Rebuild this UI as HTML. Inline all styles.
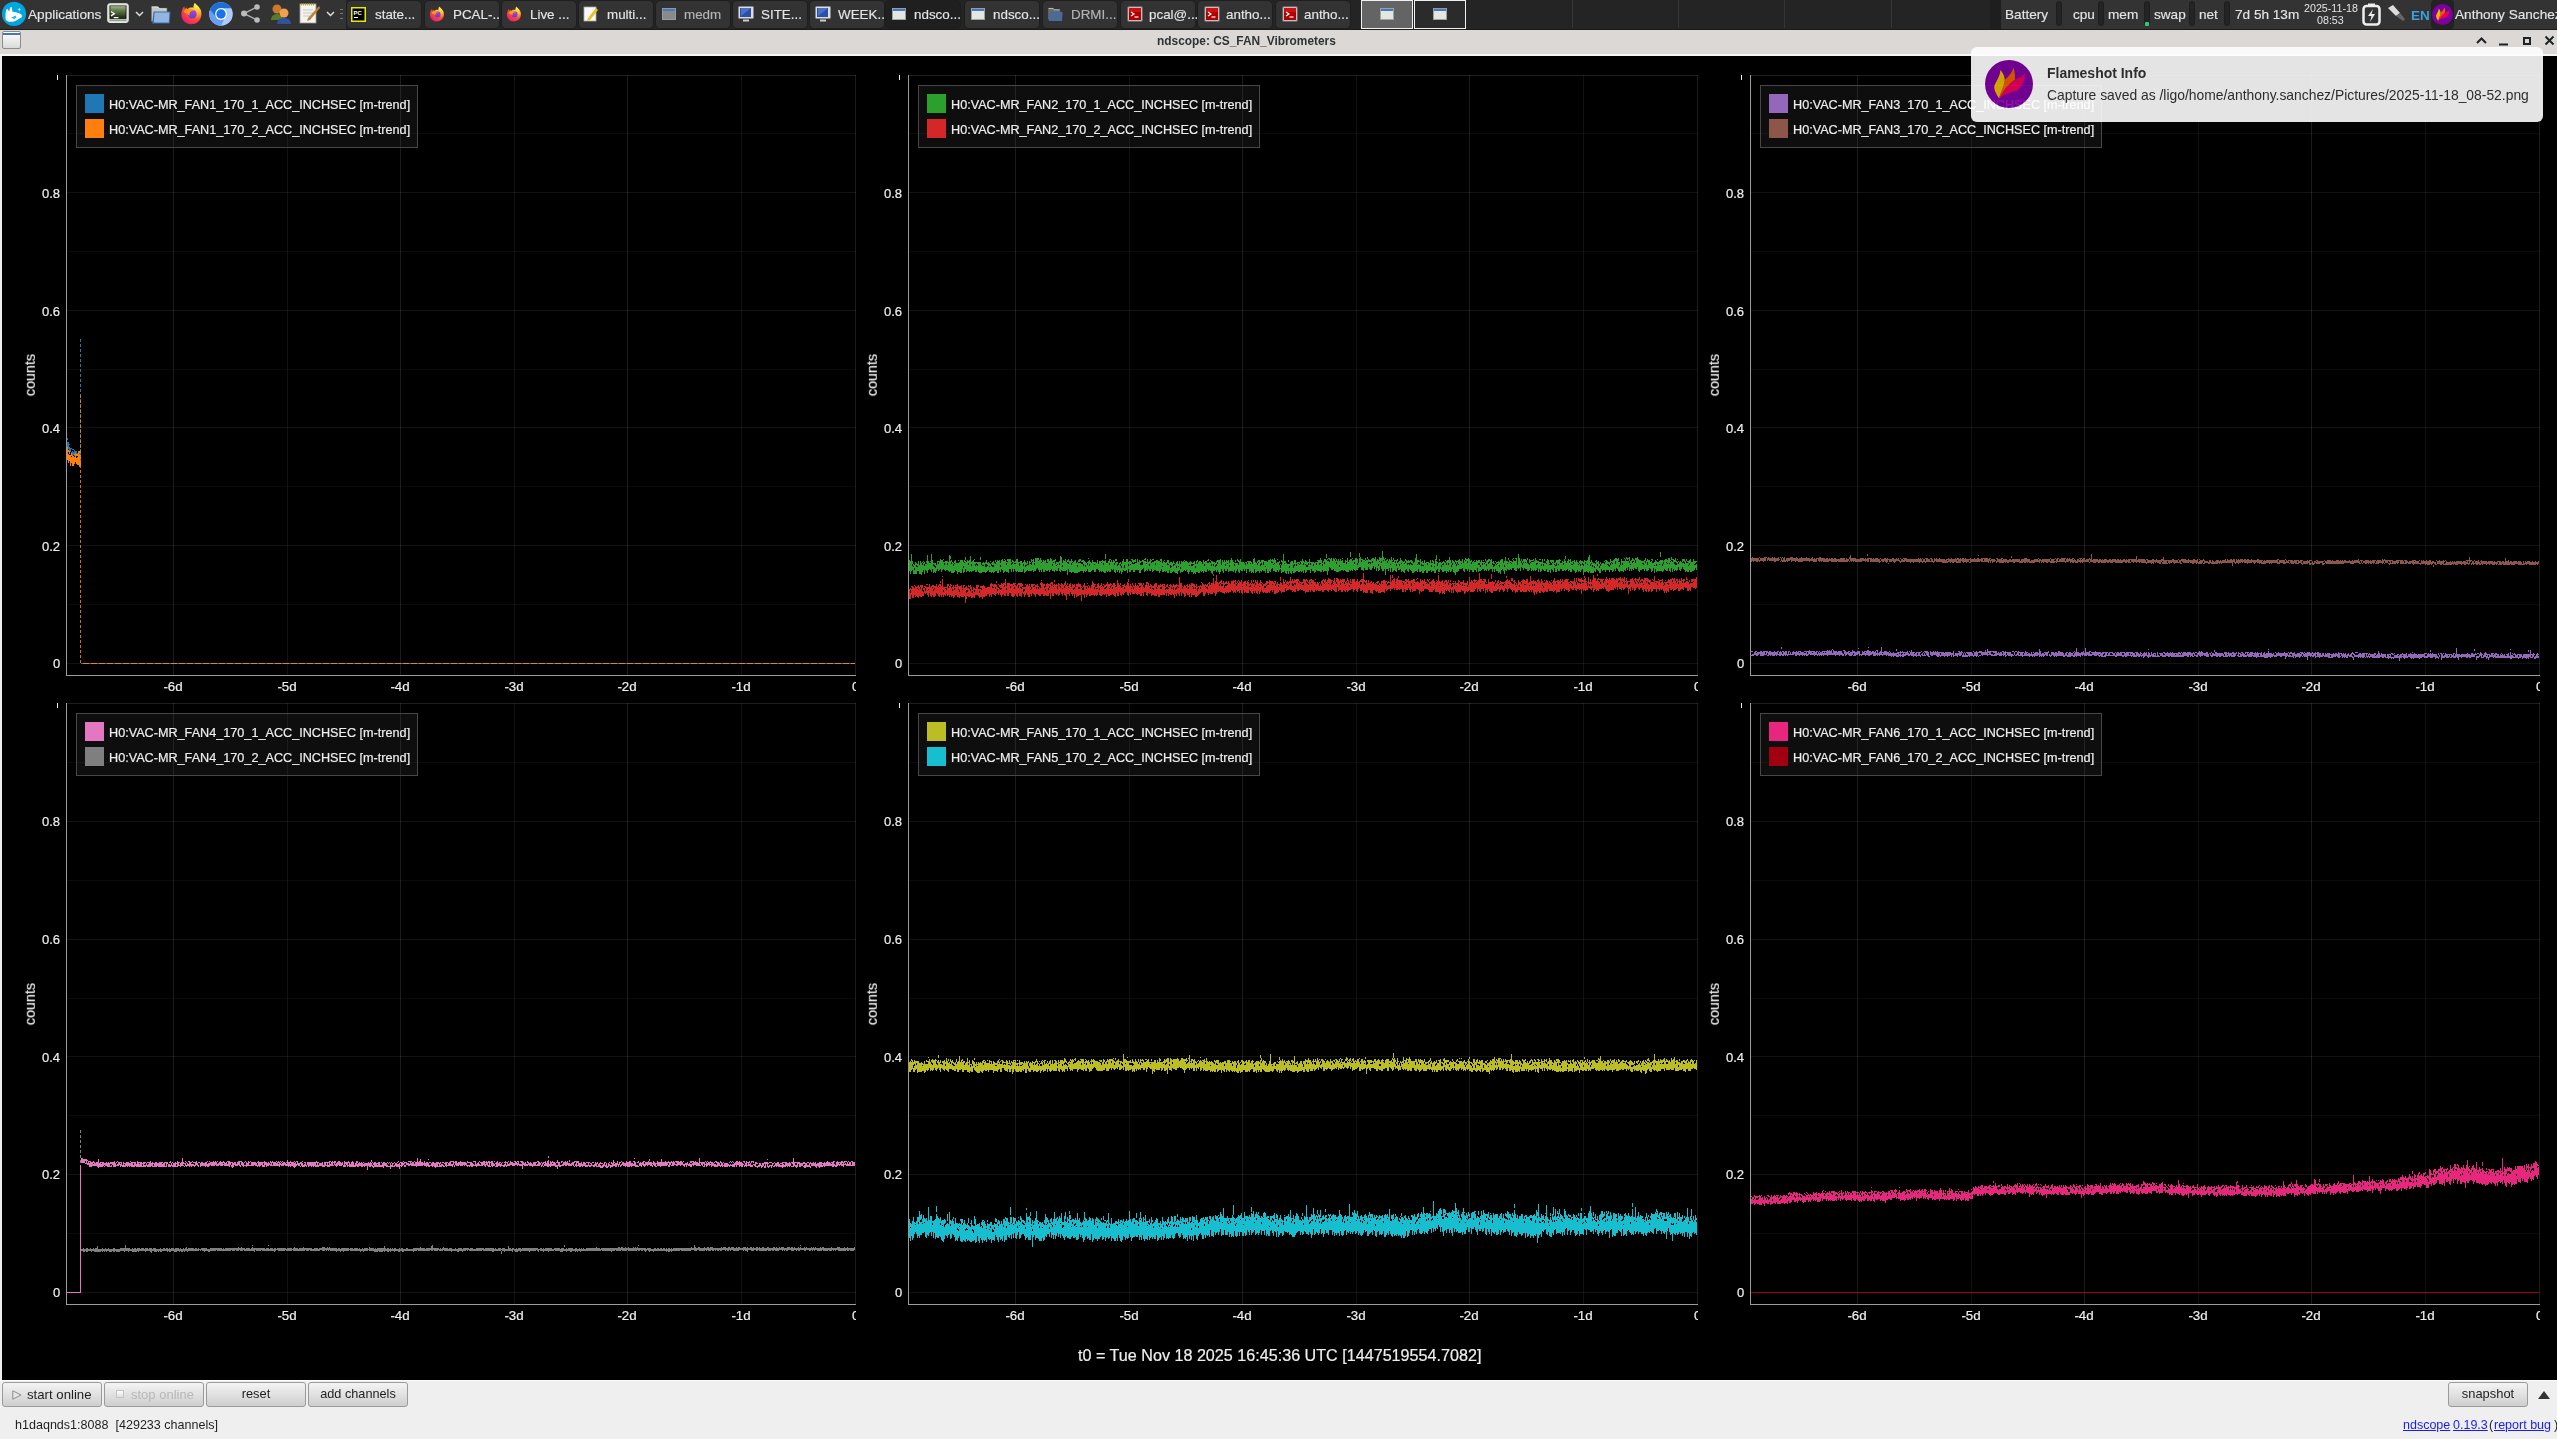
<!DOCTYPE html>
<html><head><meta charset="utf-8"><title>ndscope</title><style>
*{margin:0;padding:0;box-sizing:border-box}
html,body{width:2557px;height:1439px;overflow:hidden;background:#efefef;font-family:"Liberation Sans",sans-serif}
.a{position:absolute}
.t{position:absolute;white-space:pre;line-height:1;-webkit-font-smoothing:antialiased;will-change:transform}

.pnl{left:0;top:0;width:2557px;height:29px;background:#242424}
.tab{top:0;height:29px;width:76px;background:#333;border-radius:5px;border:1px solid #1e1e1e}
.tab.act{background:#1f1f1f}
.tabt{top:8px;color:#e4e4e4;font-size:13.4px;-webkit-text-stroke:0.15px currentColor}
.ttl{left:0;top:30px;width:2557px;height:24px;background:#dcd8d5}
.pt{top:8px;color:#e4e4e4;font-size:13.6px;-webkit-text-stroke:0.15px currentColor}
.sep{top:1px;width:6px;height:25px;border-radius:3px;background:#242424;border:1px solid #1e1e1e}

.btn{top:1382px;height:25px;border:1px solid #9a9a9a;border-radius:3px;background:linear-gradient(#f4f4f4,#cecece)}
.bt{top:1388px;font-size:12.6px;color:#1e1e1e}
.lnk{top:1419px;font-size:12.5px;color:#1a1aff;text-decoration:underline}

.pl{-webkit-text-stroke:0.2px #eeeeee}
.lg{font-size:12.65px;color:#eeeeee}
.yl{font-size:13px;color:#eeeeee;text-align:right}
.xl{font-size:13.3px;color:#eeeeee;text-align:center}
.cnt{font-size:14.3px;color:#eeeeee;transform:rotate(-90deg)}
</style></head>
<body>
<div class="a pnl"></div><div class="a" style="left:0;top:0;width:346px;height:29px;background:#333"></div><div class="a" style="left:0;top:29px;width:2557px;height:1px;background:#1a1a1a"></div><svg class="a" style="left:0;top:0" width="28" height="28" viewBox="0 0 28 28"><circle cx="14" cy="13.9" r="12.1" fill="#00a6df"/>
<path d="M5.5 17C5.5 14.5 5.8 12 6.1 9.4L7.7 9.1L9.2 11.8L10.1 7.4L11.8 7.1L12.4 11.8C15 12 19 12.8 21 14.3C22 15 22.3 16.2 21.5 17.5C19 19 16 20.5 14 21.5C11 22 7.5 22 6 20C5.5 19 5.3 18 5.5 17Z" fill="#fff"/>
<path d="M11.3 17.5L13.8 16.6L15.3 15.6L16.6 17L14.4 19.6Z" fill="#38b4e6"/>
<path d="M19.3 7.5L19.9 9L21.3 9.5L19.9 10L19.3 11.5L18.7 10L17.3 9.5L18.7 9Z" fill="#c8eefa"/></svg><div class="t pt" style="left:28px">Applications</div><svg class="a" style="left:107px;top:3px" width="22" height="20" viewBox="0 0 22 20"><defs><linearGradient id="tg" x1="0" y1="0" x2="0" y2="1"><stop offset="0" stop-color="#a8c498"/><stop offset="0.35" stop-color="#6a8a50"/><stop offset="1" stop-color="#1e2a14"/></linearGradient></defs>
<rect x="0.8" y="0.8" width="20.4" height="18.6" rx="1.8" fill="#d8d8d4" stroke="#f4f4f0" stroke-width="1"/><rect x="2.6" y="2.6" width="16.8" height="13.2" fill="#000"/><rect x="3.3" y="3.2" width="15.4" height="12" fill="url(#tg)"/>
<path d="M3.3 5h15.4M3.3 7h15.4M3.3 9h15.4M3.3 11h15.4M3.3 13h15.4" stroke="#000" stroke-opacity="0.25" stroke-width="0.6"/>
<path d="M4 8.5L7.3 10.7L4 12.9" stroke="#fff" stroke-width="1.3" fill="none"/><rect x="6.6" y="14" width="5" height="1.3" rx="0.6" fill="#fff"/>
<rect x="2.6" y="16.6" width="16.8" height="1.2" fill="#8a8a86"/><rect x="13.8" y="16.5" width="1.3" height="1.4" fill="#7de060"/></svg><svg class="a" style="left:135px;top:11px" width="9" height="6" viewBox="0 0 9 6"><path d="M1 1l3.5 3.5L8 1" stroke="#ddd" stroke-width="1.5" fill="none"/></svg><svg class="a" style="left:151px;top:5px" width="20" height="20" viewBox="0 0 20 18"><path d="M0.5 0.5h6.5l1.5 1.8h7.5v13h-15.5z" fill="#c4c4c4" stroke="#777" stroke-width="0.6"/><path d="M0.8 1h6l1.5 1.8h7" stroke="#eee" stroke-width="0.8" fill="none"/><path d="M2.5 5.5h17l-0.8 12h-17.5z" fill="#3b6cb4"/><path d="M3.6 6.6h14.8l-0.6 9.8h-15z" fill="#92b6e0"/></svg><svg class="a" style="left:180px;top:2px" width="23" height="23" viewBox="0 0 24 24">
<defs><radialGradient id="ffg0" cx="0.78" cy="0.12" r="1.05"><stop offset="0" stop-color="#fff44f"/><stop offset="0.35" stop-color="#ffb52a"/><stop offset="0.62" stop-color="#ff4a3a"/><stop offset="1" stop-color="#e2137f"/></radialGradient>
<linearGradient id="ffp0" x1="0.5" y1="0" x2="0.5" y2="1"><stop offset="0" stop-color="#c038e8"/><stop offset="1" stop-color="#5545c8"/></linearGradient></defs>
<path d="M15.5 0.8C17 3 19.5 4.5 21 7C23 10 23 16 20 19.5C17 23.5 10 24.5 5.5 21.5C1.5 18.5 0.5 13 2 9C2.5 7 3.5 5.5 4.5 4.5L5 7.5L6.5 5.5L7.5 7.5C9.5 5.5 12.5 5.5 14 6C14 4 14.5 2 15.5 0.8Z" fill="url(#ffg0)"/>
<circle cx="12.8" cy="12.6" r="4.6" fill="url(#ffp0)"/>
<path d="M3.5 10.5C5 8 8 7 11 7.5C13 7.8 14.5 8.5 15 9.5C13.5 9 12 9.3 11 10.2C10 11 9.5 12.5 10 14C8.5 13 6.5 12 3.5 10.5Z" fill="#ff9a0e"/>
</svg><svg class="a" style="left:209px;top:2px" width="24" height="24" viewBox="0 0 24 24"><defs><clipPath id="chc"><circle cx="12" cy="12" r="11.8"/></clipPath></defs>
<circle cx="12" cy="12" r="11.8" fill="#aecbfa"/><g clip-path="url(#chc)"><path d="M-1 3.5L7 15L15.2 17.2L11.5 25H-1z" fill="#669df6"/><path d="M12 6.2H25V-1H-1V5L7 15L12 12z" fill="#1a6fd8"/></g>
<circle cx="12" cy="12" r="5.9" fill="#fff"/><circle cx="12" cy="12" r="4.7" fill="#1a73e8"/></svg><svg class="a" style="left:240px;top:4px" width="22" height="19" viewBox="0 0 22 19"><path d="M4 9.5L17 3M4 9.5L17 16" stroke="#aaa" stroke-width="1.5"/><circle cx="4" cy="9.5" r="3" fill="#bbb"/><circle cx="17" cy="3" r="2.8" fill="#bbb"/><circle cx="17" cy="16" r="2.8" fill="#bbb"/></svg><svg class="a" style="left:270px;top:3px" width="22" height="22" viewBox="0 0 22 22"><circle cx="7" cy="6" r="4.5" fill="#c87a2a"/><path d="M1 17c0-4 3-6 6-6s6 2 6 6z" fill="#5a7a2a"/><circle cx="14" cy="10" r="4.5" fill="#f0a050"/><path d="M7 21c0-4 3-6 7-6s7 2 7 6z" fill="#3050a0"/></svg><svg class="a" style="left:299px;top:2px" width="22" height="22" viewBox="0 0 22 22"><rect x="1" y="2" width="16" height="19" fill="#f4f4f0" stroke="#999" stroke-width="0.8"/><path d="M2 2.5h14" stroke="#d4a020" stroke-width="2" stroke-dasharray="1 1"/><path d="M4 8h10M4 11h10M4 14h10" stroke="#bbb" stroke-width="0.8"/><path d="M20 4L9 16l-1 3 3-1L21 6z" fill="#c08030"/></svg><svg class="a" style="left:326px;top:11px" width="9" height="6" viewBox="0 0 9 6"><path d="M1 1l3.5 3.5L8 1" stroke="#ddd" stroke-width="1.5" fill="none"/></svg><div class="a" style="left:340px;top:9px;width:3px;height:10px;border-top:1px solid #777;border-bottom:1px solid #777"></div><div class="a" style="left:340px;top:13px;width:3px;height:1px;background:#777"></div><div class="a tab" style="left:346px"></div><div class="t tabt" style="left:375px;color:#e4e4e4">state...</div><svg class="a" style="left:351px;top:7px" width="15" height="15" viewBox="0 0 15 15"><rect x="0" y="0" width="15" height="15" fill="#e8e800"/><rect x="1.5" y="1.5" width="12" height="12" fill="#000"/><text x="2.5" y="7.5" font-size="6" font-weight="bold" fill="#fff" font-family="Liberation Sans">PC</text><rect x="3" y="10" width="4" height="1" fill="#fff"/></svg><div class="a tab" style="left:423.5px"></div><div class="t tabt" style="left:452.5px;color:#e4e4e4">PCAL-...</div><svg class="a" style="left:428.5px;top:6px" width="16" height="16" viewBox="0 0 24 24">
<defs><radialGradient id="ffg1" cx="0.78" cy="0.12" r="1.05"><stop offset="0" stop-color="#fff44f"/><stop offset="0.35" stop-color="#ffb52a"/><stop offset="0.62" stop-color="#ff4a3a"/><stop offset="1" stop-color="#e2137f"/></radialGradient>
<linearGradient id="ffp1" x1="0.5" y1="0" x2="0.5" y2="1"><stop offset="0" stop-color="#c038e8"/><stop offset="1" stop-color="#5545c8"/></linearGradient></defs>
<path d="M15.5 0.8C17 3 19.5 4.5 21 7C23 10 23 16 20 19.5C17 23.5 10 24.5 5.5 21.5C1.5 18.5 0.5 13 2 9C2.5 7 3.5 5.5 4.5 4.5L5 7.5L6.5 5.5L7.5 7.5C9.5 5.5 12.5 5.5 14 6C14 4 14.5 2 15.5 0.8Z" fill="url(#ffg1)"/>
<circle cx="12.8" cy="12.6" r="4.6" fill="url(#ffp1)"/>
<path d="M3.5 10.5C5 8 8 7 11 7.5C13 7.8 14.5 8.5 15 9.5C13.5 9 12 9.3 11 10.2C10 11 9.5 12.5 10 14C8.5 13 6.5 12 3.5 10.5Z" fill="#ff9a0e"/>
</svg><div class="a tab" style="left:500.5px"></div><div class="t tabt" style="left:529.5px;color:#e4e4e4">Live ...</div><svg class="a" style="left:505.5px;top:6px" width="16" height="16" viewBox="0 0 24 24">
<defs><radialGradient id="ffg2" cx="0.78" cy="0.12" r="1.05"><stop offset="0" stop-color="#fff44f"/><stop offset="0.35" stop-color="#ffb52a"/><stop offset="0.62" stop-color="#ff4a3a"/><stop offset="1" stop-color="#e2137f"/></radialGradient>
<linearGradient id="ffp2" x1="0.5" y1="0" x2="0.5" y2="1"><stop offset="0" stop-color="#c038e8"/><stop offset="1" stop-color="#5545c8"/></linearGradient></defs>
<path d="M15.5 0.8C17 3 19.5 4.5 21 7C23 10 23 16 20 19.5C17 23.5 10 24.5 5.5 21.5C1.5 18.5 0.5 13 2 9C2.5 7 3.5 5.5 4.5 4.5L5 7.5L6.5 5.5L7.5 7.5C9.5 5.5 12.5 5.5 14 6C14 4 14.5 2 15.5 0.8Z" fill="url(#ffg2)"/>
<circle cx="12.8" cy="12.6" r="4.6" fill="url(#ffp2)"/>
<path d="M3.5 10.5C5 8 8 7 11 7.5C13 7.8 14.5 8.5 15 9.5C13.5 9 12 9.3 11 10.2C10 11 9.5 12.5 10 14C8.5 13 6.5 12 3.5 10.5Z" fill="#ff9a0e"/>
</svg><div class="a tab" style="left:577.5px"></div><div class="t tabt" style="left:606.5px;color:#e4e4e4">multi...</div><svg class="a" style="left:582.5px;top:6px" width="15" height="16" viewBox="0 0 15 16"><rect x="1" y="1" width="12" height="14" fill="#f8f8f8" stroke="#aaa" stroke-width="0.8"/><path d="M13 2L5 12l-1 3 3-1 8-10z" fill="#e8c020"/></svg><div class="a tab" style="left:655px"></div><div class="t tabt" style="left:684px;color:#b4b4b4">medm</div><svg class="a" style="left:662px;top:8px" width="14" height="12" viewBox="0 0 16 14"><rect x="0.5" y="0.5" width="15" height="13" fill="#8a8a8a" stroke="#9aa" stroke-width="1"/><rect x="1" y="1" width="14" height="2.5" fill="#4a78c0"/></svg><div class="a tab" style="left:731.5px"></div><div class="t tabt" style="left:760.5px;color:#e4e4e4">SITE...</div><svg class="a" style="left:737.5px;top:6px" width="16" height="16" viewBox="0 0 16 16"><rect x="0.5" y="0.5" width="15" height="12" rx="1" fill="#ddd" stroke="#888"/><rect x="2" y="2" width="11" height="9" fill="#2c4fa8"/><path d="M3 10L12 3V2H3z" fill="#4c6fc8"/><rect x="5" y="13.5" width="6" height="2" fill="#ccc"/></svg><div class="a tab" style="left:808.5px"></div><div class="t tabt" style="left:837.5px;color:#e4e4e4">WEEK...</div><svg class="a" style="left:814.5px;top:6px" width="16" height="16" viewBox="0 0 16 16"><rect x="0.5" y="0.5" width="15" height="12" rx="1" fill="#ddd" stroke="#888"/><rect x="2" y="2" width="11" height="9" fill="#2c4fa8"/><path d="M3 10L12 3V2H3z" fill="#4c6fc8"/><rect x="5" y="13.5" width="6" height="2" fill="#ccc"/></svg><div class="a tab act" style="left:885px"></div><div class="t tabt" style="left:914px;color:#e4e4e4">ndsco...</div><svg class="a" style="left:892px;top:8px" width="14" height="12" viewBox="0 0 16 14"><rect x="0.5" y="0.5" width="15" height="13" fill="#e6e6e0" stroke="#9aa" stroke-width="1"/><rect x="1" y="1" width="14" height="2.5" fill="#4a78c0"/></svg><div class="a tab" style="left:963.5px"></div><div class="t tabt" style="left:992.5px;color:#e4e4e4">ndsco...</div><svg class="a" style="left:970.5px;top:8px" width="14" height="12" viewBox="0 0 16 14"><rect x="0.5" y="0.5" width="15" height="13" fill="#e6e6e0" stroke="#9aa" stroke-width="1"/><rect x="1" y="1" width="14" height="2.5" fill="#4a78c0"/></svg><div class="a tab" style="left:1041.5px"></div><div class="t tabt" style="left:1070.5px;color:#b4b4b4">DRMI...</div><svg class="a" style="left:1047.5px;top:7px" width="15" height="15" viewBox="0 0 20 18"><path d="M0.5 0.5h6.5l1.5 1.8h7.5v13h-15.5z" fill="#6a6a6a" stroke="#777" stroke-width="0.6"/><path d="M0.8 1h6l1.5 1.8h7" stroke="#eee" stroke-width="0.8" fill="none"/><path d="M2.5 5.5h17l-0.8 12h-17.5z" fill="#3b6cb4"/><path d="M3.6 6.6h14.8l-0.6 9.8h-15z" fill="#4f6a90"/></svg><div class="a tab" style="left:1119.5px"></div><div class="t tabt" style="left:1148.5px;color:#e4e4e4">pcal@...</div><svg class="a" style="left:1126.5px;top:6px" width="16" height="16" viewBox="0 0 16 16"><rect x="0.5" y="0.5" width="15" height="15" rx="1.5" fill="#c0c0c0" stroke="#666"/><rect x="2" y="2" width="12" height="12" fill="#b00000"/><rect x="2" y="2" width="12" height="4" fill="#d01010"/><path d="M4 6l3 2-3 2" stroke="#fff" stroke-width="1.2" fill="none"/><path d="M7.5 11h4" stroke="#fff" stroke-width="1.2"/></svg><div class="a tab" style="left:1197px"></div><div class="t tabt" style="left:1226px;color:#e4e4e4">antho...</div><svg class="a" style="left:1204px;top:6px" width="16" height="16" viewBox="0 0 16 16"><rect x="0.5" y="0.5" width="15" height="15" rx="1.5" fill="#c0c0c0" stroke="#666"/><rect x="2" y="2" width="12" height="12" fill="#b00000"/><rect x="2" y="2" width="12" height="4" fill="#d01010"/><path d="M4 6l3 2-3 2" stroke="#fff" stroke-width="1.2" fill="none"/><path d="M7.5 11h4" stroke="#fff" stroke-width="1.2"/></svg><div class="a tab" style="left:1275px"></div><div class="t tabt" style="left:1304px;color:#e4e4e4">antho...</div><svg class="a" style="left:1282px;top:6px" width="16" height="16" viewBox="0 0 16 16"><rect x="0.5" y="0.5" width="15" height="15" rx="1.5" fill="#c0c0c0" stroke="#666"/><rect x="2" y="2" width="12" height="12" fill="#b00000"/><rect x="2" y="2" width="12" height="4" fill="#d01010"/><path d="M4 6l3 2-3 2" stroke="#fff" stroke-width="1.2" fill="none"/><path d="M7.5 11h4" stroke="#fff" stroke-width="1.2"/></svg><div class="a" style="left:1361px;top:0;width:52px;height:29px;background:#646464;border:1px solid #f0f0f0"></div><div class="a" style="left:1414px;top:0;width:52px;height:29px;background:#2b2b2b;border:1px solid #f0f0f0"></div><svg class="a" style="left:1380px;top:8px" width="14" height="12" viewBox="0 0 16 14"><rect x="0.5" y="0.5" width="15" height="13" fill="#e6e6e0" stroke="#9aa" stroke-width="1"/><rect x="1" y="1" width="14" height="2.5" fill="#4a78c0"/></svg><svg class="a" style="left:1433px;top:8px" width="14" height="12" viewBox="0 0 16 14"><rect x="0.5" y="0.5" width="15" height="13" fill="#e6e6e0" stroke="#9aa" stroke-width="1"/><rect x="1" y="1" width="14" height="2.5" fill="#4a78c0"/></svg><div class="a" style="left:1572px;top:0;width:1px;height:28px;background:#353535"></div><div class="a" style="left:1678px;top:0;width:1px;height:28px;background:#353535"></div><div class="a" style="left:1784px;top:0;width:1px;height:28px;background:#353535"></div><div class="a" style="left:1891px;top:0;width:1px;height:28px;background:#353535"></div><div class="a" style="left:1990px;top:0;width:11px;height:29px;background:#1e1e1e"></div><div class="a" style="left:2001px;top:0;width:556px;height:29px;background:#333"></div><div class="t pt" style="left:2005px">Battery</div><div class="t pt" style="left:2072.5px">cpu</div><div class="t pt" style="left:2108px">mem</div><div class="t pt" style="left:2154px">swap</div><div class="t pt" style="left:2199px">net</div><div class="t pt" style="left:2234.5px">7d 5h 13m</div><div class="a sep" style="left:2056px"></div><div class="a sep" style="left:2097.5px"></div><div class="a sep" style="left:2143.5px"></div><div class="a sep" style="left:2188.5px"></div><div class="a sep" style="left:2223.5px"></div><div class="a" style="left:2144.5px;top:22px;width:4px;height:4px;border-radius:1px;background:#2ecc71"></div><div class="t" style="left:2304px;top:3px;font-size:10.7px;color:#e4e4e4">2025-11-18</div><div class="t" style="left:2317px;top:15px;font-size:10.7px;color:#e4e4e4">08:53</div><svg class="a" style="left:2362px;top:3px" width="19" height="23" viewBox="0 0 19 23"><rect x="6" y="0.5" width="7" height="3" fill="#eee"/><rect x="1.5" y="3" width="16" height="18.5" rx="3" fill="none" stroke="#eee" stroke-width="2.5"/><path d="M11 6l-5 7h3.5l-1.5 6 5-8H9.5z" fill="#eee"/></svg><svg class="a" style="left:2386px;top:4px" width="20" height="18" viewBox="0 0 20 18"><path d="M2 4l5-3 7 8-4 3z" fill="#ddd"/><path d="M10 12l4-3 5 6-2 2z" fill="#666"/></svg><div class="t" style="left:2411px;top:8.5px;font-size:13.5px;font-weight:bold;color:#3aa0e0">EN</div><div class="a" style="left:2431px;top:0;width:23px;height:29px;border-radius:4px;background:#222"></div><svg class="a" style="left:2432px;top:4px" width="21" height="21" viewBox="0 0 48 48"><circle cx="24" cy="24" r="24" fill="#7d00a0"/>
<path d="M14.2 38.5C11 34 8.5 29 9.5 25.5C11 21.5 15 17 15.4 10.1C18 13 20 17 19.8 21C19.5 26 16 32 14.2 38.5Z" fill="#e6b800"/>
<path d="M14.2 38.5C15.5 31 19.5 25 20 19.5C24 16 27.5 12 28.4 7.4C30 12 30.5 17 29.8 21.5C27 27 20 31 14.2 38.5Z" fill="#e85d00"/>
<path d="M14.2 38.5C17 32 23 24 30 19.5C34 18 38 16.5 39.7 13.6C40 20 37 27.5 32 30.4C26 33 19 33 14.2 38.5Z" fill="#e8005a"/></svg><div class="t pt" style="left:2455px">Anthony Sanchez</div><div class="a ttl"></div><div class="a" style="left:0;top:54px;width:2557px;height:2px;background:#f6f6f6"></div><div class="a" style="left:1.5px;top:31px;width:19px;height:17.5px;border-radius:2px;border:1px solid #8c8c8c;background:linear-gradient(#fff,#d8dcd8)"></div><div class="a" style="left:2.5px;top:33px;width:17px;height:2px;background:#4a74b8"></div><div class="t" style="left:1157px;top:36px;font-size:11.9px;font-weight:bold;color:#2e3436">ndscope: CS_FAN_Vibrometers</div><svg class="a" style="left:2474px;top:35px" width="84" height="12" viewBox="0 0 84 12"><path d="M3 8l4.5-4.5L12 8" stroke="#1d2325" stroke-width="2" fill="none"/><path d="M25 9.5h9" stroke="#1d2325" stroke-width="2"/><rect x="50" y="3" width="6" height="6" fill="none" stroke="#1d2325" stroke-width="2"/><path d="M71.5 1.5l8 8M79.5 1.5l-8 8" stroke="#1d2325" stroke-width="2"/></svg><svg class="a" style="left:0;top:0" width="2557" height="1439" viewBox="0 0 2557 1439" shape-rendering="crispEdges"><rect x="2" y="56" width="2555" height="1324" fill="#000"/><path d="M67 604.5H856M67 486.5H856M67 369.5H856M67 251.5H856M67 133.5H856" stroke="#0b0b0b" stroke-width="1" fill="none"/><path d="M67 663.5H856M67 545.5H856M67 427.5H856M67 310.5H856M67 192.5H856" stroke="#121212" stroke-width="1" fill="none"/><path d="M67 75.5H856" stroke="#1e1e1e" stroke-width="1" fill="none"/><path d="M173.5 75V675M400.5 75V675M627.5 75V675M855.5 75V675" stroke="#fff" stroke-opacity="0.11" stroke-width="1" fill="none"/><path d="M287.5 75V675M514.5 75V675M741.5 75V675" stroke="#fff" stroke-opacity="0.065" stroke-width="1" fill="none"/><path d="M909 604.5H1698M909 486.5H1698M909 369.5H1698M909 251.5H1698M909 133.5H1698" stroke="#0b0b0b" stroke-width="1" fill="none"/><path d="M909 663.5H1698M909 545.5H1698M909 427.5H1698M909 310.5H1698M909 192.5H1698" stroke="#121212" stroke-width="1" fill="none"/><path d="M909 75.5H1698" stroke="#1e1e1e" stroke-width="1" fill="none"/><path d="M1015.5 75V675M1242.5 75V675M1469.5 75V675M1697.5 75V675" stroke="#fff" stroke-opacity="0.11" stroke-width="1" fill="none"/><path d="M1129.5 75V675M1356.5 75V675M1583.5 75V675" stroke="#fff" stroke-opacity="0.065" stroke-width="1" fill="none"/><path d="M1751 604.5H2540M1751 486.5H2540M1751 369.5H2540M1751 251.5H2540M1751 133.5H2540" stroke="#0b0b0b" stroke-width="1" fill="none"/><path d="M1751 663.5H2540M1751 545.5H2540M1751 427.5H2540M1751 310.5H2540M1751 192.5H2540" stroke="#121212" stroke-width="1" fill="none"/><path d="M1751 75.5H2540" stroke="#1e1e1e" stroke-width="1" fill="none"/><path d="M1857.5 75V675M2084.5 75V675M2311.5 75V675M2539.5 75V675" stroke="#fff" stroke-opacity="0.11" stroke-width="1" fill="none"/><path d="M1971.5 75V675M2198.5 75V675M2425.5 75V675" stroke="#fff" stroke-opacity="0.065" stroke-width="1" fill="none"/><path d="M67 1233.5H856M67 1115.5H856M67 998.5H856M67 880.5H856M67 762.5H856" stroke="#0b0b0b" stroke-width="1" fill="none"/><path d="M67 1292.5H856M67 1174.5H856M67 1056.5H856M67 939.5H856M67 821.5H856" stroke="#121212" stroke-width="1" fill="none"/><path d="M67 703.5H856" stroke="#1e1e1e" stroke-width="1" fill="none"/><path d="M173.5 703V1304M400.5 703V1304M627.5 703V1304M855.5 703V1304" stroke="#fff" stroke-opacity="0.11" stroke-width="1" fill="none"/><path d="M287.5 703V1304M514.5 703V1304M741.5 703V1304" stroke="#fff" stroke-opacity="0.065" stroke-width="1" fill="none"/><path d="M909 1233.5H1698M909 1115.5H1698M909 998.5H1698M909 880.5H1698M909 762.5H1698" stroke="#0b0b0b" stroke-width="1" fill="none"/><path d="M909 1292.5H1698M909 1174.5H1698M909 1056.5H1698M909 939.5H1698M909 821.5H1698" stroke="#121212" stroke-width="1" fill="none"/><path d="M909 703.5H1698" stroke="#1e1e1e" stroke-width="1" fill="none"/><path d="M1015.5 703V1304M1242.5 703V1304M1469.5 703V1304M1697.5 703V1304" stroke="#fff" stroke-opacity="0.11" stroke-width="1" fill="none"/><path d="M1129.5 703V1304M1356.5 703V1304M1583.5 703V1304" stroke="#fff" stroke-opacity="0.065" stroke-width="1" fill="none"/><path d="M1751 1233.5H2540M1751 1115.5H2540M1751 998.5H2540M1751 880.5H2540M1751 762.5H2540" stroke="#0b0b0b" stroke-width="1" fill="none"/><path d="M1751 1292.5H2540M1751 1174.5H2540M1751 1056.5H2540M1751 939.5H2540M1751 821.5H2540" stroke="#121212" stroke-width="1" fill="none"/><path d="M1751 703.5H2540" stroke="#1e1e1e" stroke-width="1" fill="none"/><path d="M1857.5 703V1304M2084.5 703V1304M2311.5 703V1304M2539.5 703V1304" stroke="#fff" stroke-opacity="0.11" stroke-width="1" fill="none"/><path d="M1971.5 703V1304M2198.5 703V1304M2425.5 703V1304" stroke="#fff" stroke-opacity="0.065" stroke-width="1" fill="none"/><path d="M67 437.9V440.0M67 442.0V448.1M68 441.5V448.9M69 444.2V444.7M69 446.5V453.4M70 448.4V452.3M71 448.2V449.1M71 451.6V454.4M72 448.9V449.9M72 451.0V456.2M73 449.3V449.9M73 452.3V455.2M74 449.9V456.1M75 451.0V454.9M76 450.5V454.2M77 450.6V451.4M77 452.8V455.3M78 450.5V455.6M79 449.6V450.3M79 452.4V455.0M80 450.7V454.5" stroke="#1f77b4" stroke-width="1" fill="none" opacity="1"/><path d="M67 447.1V459.7M68 449.9V452.3M68 453.5V463.1M69 450.5V453.8M69 454.8V461.4M70 455.2V466.4M71 453.3V455.8M71 456.9V463.1M72 454.7V466.3M73 455.6V465.8M74 453.7V455.0M74 456.5V464.4M75 452.6V461.8M76 454.1V456.3M76 457.6V464.4M77 453.9V455.5M77 457.2V465.4M78 451.1V464.8M79 450.6V452.6M79 453.6V466.6M80 455.9V465.7" stroke="#ff7f0e" stroke-width="1" fill="none" opacity="1"/><path d="M80.5 339V462" stroke="#1f77b4" stroke-width="1" stroke-dasharray="3 2"/><path d="M80.5 663.5H855" stroke="#ff7f0e" stroke-width="1" fill="none"/><path d="M80.5 395V663" stroke="#ff7f0e" stroke-width="1" fill="none" stroke-dasharray="3 2" opacity="0.85"/><path d="M80.5 663.5H855" stroke="#1f77b4" stroke-width="1" fill="none" stroke-dasharray="2 6"/><path d="M909 560.4V571.4M910 561.2V573.7M911 554.4V571.0M912 561.3V564.2M912 565.8V569.9M913 563.7V565.7M913 567.0V574.0M914 564.7V567.9M914 570.2V574.1M915 561.9V573.6M916 563.1V565.0M916 566.6V573.7M917 564.4V565.6M917 567.4V570.5M918 561.0V571.2M919 562.5V563.4M919 564.5V573.9M920 560.8V573.5M921 562.8V574.6M922 562.0V562.7M922 564.9V571.9M923 560.7V561.7M923 562.8V570.2M924 562.3V563.7M924 566.1V573.5M925 563.6V570.4M926 560.7V562.9M926 564.3V571.3M927 555.4V573.1M928 560.7V570.4M929 563.0V569.1M930 560.5V561.6M930 562.9V569.9M931 554.4V571.9M932 560.3V569.2M933 562.6V564.0M933 566.4V572.8M934 562.7V564.9M934 566.7V572.4M935 562.5V565.6M935 568.1V573.0M936 561.6V562.3M936 564.5V570.8M937 560.6V569.0M938 561.2V562.4M938 564.4V570.8M939 561.1V570.3M940 558.9V569.0M941 560.4V572.3M942 559.9V570.0M943 559.2V560.1M943 561.9V568.7M944 562.3V562.9M944 565.4V570.0M945 560.9V571.3M946 560.9V569.6M947 561.2V563.3M947 564.7V570.3M948 562.1V570.6M949 555.3V572.3M950 555.8V558.5M950 560.9V570.5M951 559.9V562.1M951 563.9V572.7M952 562.3V572.7M953 563.4V564.1M953 566.3V573.3M954 561.0V562.5M954 564.0V572.4M955 559.9V569.7M956 562.6V571.1M957 563.3V573.5M958 560.4V561.1M958 562.7V571.9M959 562.4V572.2M960 559.7V572.8M961 559.6V573.2M962 559.8V568.8M963 562.4V566.1M963 567.9V572.9M964 559.5V561.6M964 562.9V571.9M965 557.1V560.0M965 561.3V568.8M966 561.8V572.0M967 560.4V571.2M968 561.4V563.3M968 565.0V570.5M969 560.4V572.4M970 555.8V570.9M971 562.2V563.8M971 566.1V572.4M972 561.0V571.3M973 559.9V570.8M974 558.8V560.3M974 562.3V569.5M975 561.6V563.7M975 565.7V571.8M976 562.2V563.3M976 564.5V572.2M977 561.7V563.9M977 565.8V570.1M978 561.7V572.0M979 561.9V572.7M980 556.8V560.4M980 562.3V572.6M981 562.8V563.4M981 564.7V572.9M982 563.0V565.0M982 566.1V572.4M983 562.3V564.6M983 565.7V572.2M984 562.5V572.0M985 562.2V564.4M985 566.7V573.4M986 560.4V564.4M986 566.6V572.2M987 562.8V565.2M987 566.3V571.1M988 561.8V569.5M989 562.9V565.8M989 567.4V572.2M990 560.5V561.8M990 563.5V572.2M991 562.5V563.7M991 566.0V573.1M992 562.0V564.8M992 566.6V572.4M993 560.8V564.6M993 566.9V572.8M994 562.9V572.4M995 559.6V561.5M995 563.5V571.1M996 562.1V570.7M997 559.9V572.9M998 560.7V572.9M999 560.4V569.5M1000 563.1V564.7M1000 566.8V571.8M1001 559.8V569.3M1002 559.0V570.2M1003 561.4V572.8M1004 558.8V560.3M1004 561.3V572.2M1005 560.4V571.4M1006 562.1V563.3M1006 564.6V572.0M1007 558.9V560.7M1007 562.4V571.6M1008 559.2V572.7M1009 559.1V569.2M1010 558.8V568.8M1011 562.2V563.1M1011 565.1V572.0M1012 560.2V562.2M1012 563.7V569.1M1013 560.7V571.9M1014 561.6V562.6M1014 564.0V568.8M1015 561.3V562.8M1015 564.2V570.8M1016 559.2V571.5M1017 559.4V571.0M1018 561.7V571.8M1019 562.0V563.3M1019 565.6V572.4M1020 560.6V572.2M1021 560.5V571.8M1022 562.7V571.7M1023 561.7V563.6M1023 566.1V569.4M1024 560.3V572.8M1025 562.4V564.7M1025 567.2V571.8M1026 562.8V565.1M1026 566.3V570.8M1027 560.6V563.5M1027 565.4V569.8M1028 562.5V563.4M1028 564.7V571.1M1029 560.9V570.8M1030 561.8V562.6M1030 564.2V571.1M1031 559.2V562.4M1031 564.9V570.7M1032 560.0V560.7M1032 562.3V569.5M1033 558.9V571.7M1034 561.7V562.9M1034 565.1V571.1M1035 557.6V570.7M1036 558.0V568.5M1037 557.8V568.0M1038 558.2V559.6M1038 561.0V570.1M1039 559.6V571.8M1040 558.1V570.3M1041 560.4V561.8M1041 563.2V572.2M1042 561.7V569.4M1043 559.8V572.1M1044 560.9V572.1M1045 560.4V569.8M1046 562.7V570.9M1047 559.3V562.2M1047 563.3V571.4M1048 559.1V569.7M1049 561.1V571.8M1050 558.4V569.6M1051 558.9V569.4M1052 561.4V563.8M1052 565.8V571.4M1053 560.3V561.6M1053 562.7V570.8M1054 559.8V571.5M1055 559.3V561.2M1055 563.6V570.3M1056 562.0V564.8M1056 566.3V571.2M1057 561.6V563.9M1057 565.4V571.2M1058 562.0V568.3M1059 560.8V563.4M1059 564.6V571.3M1060 555.6V571.5M1061 557.1V570.4M1062 563.0V565.0M1062 566.6V570.7M1063 559.6V571.3M1064 560.5V571.4M1065 559.3V571.3M1066 562.2V570.2M1067 559.6V561.8M1067 563.0V575.2M1068 559.1V561.7M1068 564.0V569.1M1069 560.8V571.7M1070 560.6V571.5M1071 559.4V563.3M1071 564.7V572.9M1072 560.6V561.8M1072 563.3V572.1M1073 561.8V571.5M1074 561.2V573.2M1075 560.3V572.5M1076 562.8V572.7M1077 561.7V565.2M1077 567.3V572.9M1078 560.2V562.1M1078 563.4V572.4M1079 559.3V562.0M1079 563.2V571.7M1080 559.0V560.5M1080 562.8V570.6M1081 560.5V562.0M1081 563.7V571.3M1082 560.0V562.4M1082 563.7V571.2M1083 560.1V564.3M1083 565.9V572.5M1084 561.0V570.8M1085 561.7V565.2M1085 566.7V571.6M1086 562.9V570.9M1087 561.8V563.0M1087 565.0V569.4M1088 558.2V559.0M1088 561.2V571.8M1089 559.9V563.8M1089 566.0V572.0M1090 561.8V572.3M1091 562.8V571.1M1092 560.3V570.0M1093 559.5V560.0M1093 562.3V569.5M1094 562.1V563.5M1094 565.3V571.5M1095 561.6V572.4M1096 563.3V568.6M1097 560.3V569.1M1098 560.5V561.4M1098 563.9V570.0M1099 561.0V571.6M1100 561.3V571.1M1101 560.5V561.8M1101 562.9V571.5M1102 559.6V570.6M1103 560.7V563.4M1103 564.7V572.0M1104 560.5V572.9M1105 554.3V558.5M1105 559.8V572.7M1106 562.5V571.2M1107 563.4V572.3M1108 561.4V570.5M1109 559.3V563.0M1109 564.8V571.8M1110 559.1V560.1M1110 561.6V572.3M1111 559.5V569.3M1112 561.8V570.3M1113 559.6V568.8M1114 560.9V562.9M1114 565.1V571.7M1115 559.4V560.5M1115 562.8V572.6M1116 559.4V560.7M1116 562.1V570.1M1117 562.3V564.0M1117 566.4V572.1M1118 562.8V563.2M1118 565.0V569.5M1119 562.9V572.7M1120 562.1V563.9M1120 566.4V570.8M1121 563.5V565.8M1121 568.1V574.2M1122 560.7V571.9M1123 558.9V570.1M1124 562.0V565.3M1124 567.7V571.4M1125 562.3V571.3M1126 558.6V569.7M1127 558.7V572.5M1128 562.3V564.4M1128 565.6V569.0M1129 561.3V571.7M1130 560.7V563.9M1130 565.2V572.4M1131 558.7V559.8M1131 561.8V569.5M1132 558.9V562.4M1132 563.9V570.3M1133 560.3V562.5M1133 563.7V571.8M1134 560.0V562.2M1134 564.0V571.9M1135 559.1V561.5M1135 563.4V569.8M1136 563.0V569.7M1137 559.0V570.4M1138 562.3V570.3M1139 559.9V572.5M1140 560.7V563.4M1140 565.4V573.0M1141 560.5V562.2M1141 564.5V569.8M1142 559.9V562.3M1142 564.5V569.0M1143 559.5V567.6M1144 558.5V559.8M1144 560.9V571.5M1145 558.4V559.7M1145 561.3V571.4M1146 561.9V562.5M1146 564.2V569.5M1147 559.1V571.2M1148 562.0V568.7M1149 561.0V563.6M1149 565.8V570.9M1150 559.4V570.6M1151 559.6V560.9M1151 563.0V569.0M1152 558.6V559.8M1152 561.7V572.4M1153 559.0V559.9M1153 561.9V570.9M1154 561.4V569.8M1155 561.0V562.5M1155 564.6V570.3M1156 560.4V571.0M1157 559.6V571.3M1158 561.1V571.1M1159 560.9V573.3M1160 559.3V560.7M1160 562.2V571.4M1161 558.9V569.1M1162 562.5V565.5M1162 566.6V571.8M1163 560.9V572.0M1164 560.2V561.0M1164 562.4V570.7M1165 563.3V571.7M1166 562.4V571.4M1167 559.9V563.4M1167 564.9V572.5M1168 560.4V563.5M1168 565.2V572.8M1169 563.2V570.2M1170 562.1V565.3M1170 567.5V572.6M1171 561.9V565.5M1171 566.8V572.9M1172 563.3V571.6M1173 560.7V563.9M1173 566.4V570.8M1174 562.7V563.5M1174 564.7V572.4M1175 563.7V573.0M1176 562.1V565.6M1176 567.6V573.4M1177 561.4V573.9M1178 563.6V565.8M1178 567.2V571.0M1179 560.8V570.4M1180 564.1V566.8M1180 568.9V572.9M1181 560.9V572.1M1182 561.5V571.8M1183 561.1V570.5M1184 559.8V560.6M1184 562.3V569.7M1185 561.3V570.6M1186 560.9V569.8M1187 562.4V571.8M1188 563.4V573.5M1189 561.8V564.7M1189 565.9V571.8M1190 560.8V570.4M1191 561.5V564.2M1191 565.6V572.1M1192 562.7V563.5M1192 565.7V572.0M1193 561.9V563.8M1193 565.1V573.7M1194 560.7V573.4M1195 563.9V566.4M1195 568.0V573.8M1196 560.9V572.4M1197 560.0V562.1M1197 563.5V571.5M1198 562.0V573.4M1199 561.0V572.7M1200 560.5V570.7M1201 562.4V572.2M1202 564.3V571.0M1203 560.2V573.1M1204 562.2V564.0M1204 566.4V570.9M1205 560.7V571.5M1206 560.8V572.1M1207 559.6V561.1M1207 563.3V569.3M1208 559.3V561.2M1208 562.9V571.4M1209 561.8V569.7M1210 559.6V560.9M1210 563.2V570.7M1211 560.8V564.0M1211 566.3V572.7M1212 560.7V573.5M1213 562.1V563.9M1213 566.3V571.2M1214 562.0V570.8M1215 562.8V565.0M1215 567.2V569.7M1216 561.2V564.3M1216 566.0V572.4M1217 559.6V561.8M1217 563.6V569.8M1218 560.4V572.0M1219 560.3V573.6M1220 559.4V571.5M1221 561.6V562.3M1221 564.5V569.0M1222 560.1V570.8M1223 561.5V572.7M1224 560.0V568.9M1225 562.0V564.1M1225 566.3V571.2M1226 560.3V571.4M1227 561.1V563.0M1227 564.1V569.3M1228 560.2V572.2M1229 563.0V564.9M1229 567.2V570.8M1230 559.5V570.9M1231 557.7V570.7M1232 559.9V571.4M1233 561.7V572.0M1234 563.3V563.8M1234 565.9V569.8M1235 559.6V562.3M1235 563.3V572.6M1236 562.9V570.9M1237 559.3V561.1M1237 562.9V569.3M1238 559.5V562.3M1238 564.5V572.4M1239 560.9V572.9M1240 559.3V569.9M1241 559.5V560.2M1241 561.8V570.8M1242 561.7V571.2M1243 562.2V569.0M1244 563.3V571.3M1245 562.4V563.3M1245 564.8V569.0M1246 562.1V572.7M1247 561.3V562.1M1247 564.2V569.0M1248 561.3V569.3M1249 561.3V572.1M1250 561.3V562.7M1250 563.7V570.8M1251 561.6V573.1M1252 561.5V562.0M1252 564.3V572.4M1253 559.1V572.6M1254 557.7V569.2M1255 561.9V572.9M1256 563.4V572.2M1257 561.3V563.1M1257 564.6V571.2M1258 560.3V561.9M1258 563.1V570.7M1259 560.2V573.4M1260 561.5V564.4M1260 565.5V570.8M1261 560.0V562.6M1261 564.5V571.9M1262 560.2V570.4M1263 560.0V562.1M1263 564.5V571.2M1264 561.3V571.2M1265 561.4V565.5M1265 566.5V573.2M1266 560.5V569.2M1267 561.5V572.9M1268 559.6V572.5M1269 560.1V571.3M1270 559.4V572.4M1271 560.3V561.0M1271 563.3V569.0M1272 559.4V561.5M1272 562.6V568.1M1273 559.7V563.5M1273 564.9V571.3M1274 558.3V562.5M1274 563.8V571.2M1275 559.5V572.4M1276 563.1V571.9M1277 559.3V560.3M1277 562.4V570.4M1278 562.0V572.2M1279 560.6V563.2M1279 564.7V570.2M1280 563.7V565.2M1280 567.6V569.1M1281 560.4V562.4M1281 564.7V572.6M1282 560.8V572.1M1283 554.0V571.7M1284 561.1V563.1M1284 564.3V570.9M1285 561.1V573.1M1286 562.5V573.6M1287 563.6V571.0M1288 560.3V562.4M1288 563.8V573.9M1289 563.9V566.1M1289 567.6V571.0M1290 561.8V573.3M1291 560.6V573.8M1292 561.0V570.8M1293 562.8V565.3M1293 567.6V572.8M1294 560.1V564.3M1294 565.9V573.1M1295 560.3V572.2M1296 563.1V564.0M1296 565.7V571.2M1297 562.1V571.4M1298 561.6V562.6M1298 564.3V572.1M1299 561.8V563.6M1299 564.8V572.3M1300 560.9V561.8M1300 563.7V571.3M1301 560.8V571.7M1302 558.8V570.8M1303 560.8V563.3M1303 565.1V572.6M1304 562.4V569.7M1305 559.6V563.9M1305 565.1V573.2M1306 560.5V564.6M1306 566.6V572.4M1307 562.3V564.5M1307 566.6V569.7M1308 561.9V562.6M1308 565.1V569.7M1309 558.5V569.7M1310 561.7V563.3M1310 565.3V572.7M1311 561.6V569.1M1312 562.0V571.4M1313 562.2V564.1M1313 566.4V570.8M1314 562.7V572.6M1315 561.9V572.1M1316 561.8V563.0M1316 565.0V569.6M1317 559.7V560.7M1317 562.2V571.1M1318 560.1V571.0M1319 559.7V563.3M1319 564.7V570.6M1320 558.3V562.7M1320 563.8V571.6M1321 560.3V571.9M1322 562.6V563.5M1322 565.8V569.9M1323 560.6V571.5M1324 558.9V561.8M1324 564.1V570.9M1325 558.7V571.0M1326 553.9V558.3M1326 560.3V571.3M1327 558.8V560.1M1327 561.3V574.6M1328 557.8V558.9M1328 560.9V571.1M1329 558.4V559.8M1329 561.9V567.0M1330 558.8V567.9M1331 557.8V570.4M1332 560.5V569.7M1333 558.3V568.6M1334 558.9V571.1M1335 557.8V558.7M1335 560.6V571.3M1336 558.6V561.8M1336 563.6V571.8M1337 561.3V571.8M1338 559.1V571.5M1339 561.2V564.6M1339 566.6V571.0M1340 559.4V570.5M1341 561.0V569.9M1342 558.3V559.1M1342 560.4V569.5M1343 562.5V571.1M1344 562.5V569.7M1345 560.4V571.1M1346 561.3V562.0M1346 564.1V571.9M1347 558.0V571.5M1348 562.0V571.8M1349 559.8V569.7M1350 551.8V557.0M1350 558.7V570.9M1351 558.6V569.8M1352 557.8V559.2M1352 560.5V570.5M1353 560.3V568.5M1354 560.3V562.2M1354 564.2V569.6M1355 557.6V570.5M1356 558.2V570.4M1357 558.7V562.7M1357 564.9V570.3M1358 560.7V561.4M1358 563.2V568.4M1359 552.7V557.3M1359 558.3V567.1M1360 557.0V566.7M1361 559.3V560.0M1361 562.0V569.6M1362 559.3V569.6M1363 559.7V571.3M1364 560.2V568.1M1365 558.1V560.2M1365 561.4V569.8M1366 559.9V569.8M1367 557.4V559.0M1367 560.3V569.6M1368 559.2V561.8M1368 563.5V567.2M1369 559.6V561.5M1369 563.3V569.1M1370 559.7V561.9M1370 564.2V569.6M1371 559.4V570.4M1372 558.3V560.8M1372 562.9V568.0M1373 557.8V566.3M1374 558.6V568.5M1375 557.4V566.7M1376 560.6V570.8M1377 559.2V567.9M1378 559.7V563.5M1378 565.9V571.1M1379 556.7V561.0M1379 562.2V570.4M1380 558.3V566.3M1381 557.7V560.6M1381 562.7V569.0M1382 551.4V570.9M1383 557.4V559.5M1383 560.6V571.2M1384 558.8V569.0M1385 558.2V559.2M1385 560.7V574.7M1386 559.6V568.6M1387 559.4V561.3M1387 563.0V569.1M1388 561.4V571.1M1389 558.5V568.0M1390 560.4V563.7M1390 564.8V571.7M1391 557.3V567.7M1392 559.5V560.8M1392 562.1V571.6M1393 557.7V559.5M1393 561.5V571.1M1394 560.2V569.9M1395 559.8V560.6M1395 563.0V571.4M1396 560.3V564.0M1396 566.0V572.1M1397 559.4V560.7M1397 562.9V568.4M1398 562.4V569.9M1399 561.3V563.5M1399 565.7V569.8M1400 558.2V568.8M1401 559.9V562.7M1401 563.9V571.5M1402 560.8V571.4M1403 562.0V571.5M1404 561.1V562.5M1404 564.2V573.4M1405 559.3V560.8M1405 562.9V570.3M1406 559.7V569.0M1407 560.8V563.0M1407 565.0V570.7M1408 560.2V562.6M1408 564.2V571.7M1409 561.3V563.1M1409 564.6V568.7M1410 559.6V562.1M1410 564.0V570.4M1411 560.1V563.1M1411 565.3V571.1M1412 560.8V563.7M1412 565.2V572.8M1413 562.5V572.6M1414 562.4V572.3M1415 558.3V570.6M1416 553.5V570.8M1417 559.7V563.7M1417 564.8V571.9M1418 559.8V562.4M1418 564.1V569.3M1419 561.0V562.4M1419 564.6V572.1M1420 558.6V571.9M1421 561.8V564.4M1421 566.1V570.9M1422 561.3V565.0M1422 566.3V573.0M1423 563.0V564.6M1423 566.0V572.5M1424 559.7V571.1M1425 562.5V569.8M1426 562.2V572.9M1427 561.9V563.1M1427 564.9V572.6M1428 561.5V570.9M1429 563.2V570.8M1430 560.1V569.5M1431 563.2V564.6M1431 566.9V571.5M1432 560.1V561.7M1432 562.8V570.6M1433 561.2V571.2M1434 563.5V565.5M1434 566.8V572.9M1435 559.4V572.7M1436 554.5V559.9M1436 561.2V570.2M1437 562.2V563.4M1437 565.6V568.7M1438 563.1V571.6M1439 559.3V560.5M1439 561.5V571.7M1440 562.3V569.1M1441 562.6V564.9M1441 567.2V569.7M1442 562.3V563.6M1442 564.8V571.6M1443 560.8V563.4M1443 564.8V572.1M1444 561.8V571.2M1445 560.1V561.4M1445 563.3V571.3M1446 560.5V563.0M1446 565.1V572.6M1447 559.7V570.6M1448 559.7V563.2M1448 564.8V572.0M1449 557.3V570.3M1450 560.0V571.8M1451 563.2V565.1M1451 567.0V570.7M1452 560.4V562.9M1452 564.9V569.2M1453 561.2V571.6M1454 561.8V573.2M1455 559.8V562.1M1455 563.6V575.0M1456 561.1V564.4M1456 565.8V571.5M1457 561.0V561.9M1457 564.0V572.0M1458 559.7V563.6M1458 565.2V571.0M1459 559.3V568.7M1460 561.2V568.9M1461 561.4V562.6M1461 563.7V569.4M1462 558.9V567.6M1463 559.6V560.4M1463 562.9V571.1M1464 560.1V571.6M1465 557.9V560.0M1465 561.4V568.5M1466 558.9V568.5M1467 558.8V560.7M1467 562.6V571.2M1468 558.4V569.4M1469 559.0V571.6M1470 560.6V569.8M1471 559.7V561.6M1471 563.5V569.5M1472 561.7V571.6M1473 561.1V571.6M1474 559.8V560.5M1474 562.0V569.8M1475 561.9V569.9M1476 560.1V572.2M1477 560.5V567.8M1478 560.2V563.1M1478 565.2V571.8M1479 560.4V562.8M1479 565.2V571.3M1480 562.4V564.7M1480 566.7V570.5M1481 559.9V569.7M1482 562.2V563.4M1482 564.6V569.0M1483 560.4V561.3M1483 562.3V569.3M1484 561.9V562.6M1484 564.0V571.1M1485 559.2V560.7M1485 563.0V569.5M1486 561.2V564.2M1486 566.1V570.7M1487 560.4V569.0M1488 559.0V561.8M1488 563.9V571.4M1489 559.3V560.9M1489 562.8V570.2M1490 560.0V569.2M1491 558.7V569.0M1492 561.9V562.7M1492 564.5V572.3M1493 561.4V564.1M1493 566.5V569.4M1494 563.1V564.1M1494 566.3V571.9M1495 560.5V561.9M1495 564.0V568.9M1496 561.6V563.6M1496 564.6V571.4M1497 562.4V563.2M1497 564.2V571.2M1498 561.1V572.8M1499 561.9V565.2M1499 567.1V571.5M1500 559.7V573.7M1501 559.0V569.9M1502 559.1V568.9M1503 562.6V570.5M1504 560.9V565.2M1504 566.7V573.6M1505 557.1V570.2M1506 560.6V571.1M1507 561.4V562.7M1507 563.7V568.7M1508 558.0V559.5M1508 561.5V570.2M1509 560.1V569.5M1510 561.1V562.3M1510 563.4V569.1M1511 560.9V562.6M1511 564.1V570.3M1512 558.9V559.5M1512 561.9V568.0M1513 558.2V558.7M1513 560.3V568.4M1514 561.1V569.6M1515 558.3V559.3M1515 561.2V570.6M1516 558.3V571.2M1517 561.9V562.3M1517 564.5V567.5M1518 553.5V568.8M1519 557.9V568.3M1520 560.8V571.2M1521 559.0V561.2M1521 562.8V567.4M1522 560.8V562.6M1522 564.6V567.7M1523 559.4V561.6M1523 563.3V569.5M1524 559.0V568.0M1525 559.1V561.8M1525 562.9V568.5M1526 559.8V569.3M1527 557.6V560.4M1527 562.5V570.5M1528 561.6V562.1M1528 563.7V570.9M1529 559.2V562.6M1529 564.5V570.1M1530 559.6V561.7M1530 563.1V567.8M1531 560.0V560.8M1531 562.4V571.3M1532 559.8V560.5M1532 562.4V570.1M1533 559.4V561.1M1533 562.3V570.9M1534 560.7V570.0M1535 558.1V571.0M1536 560.4V562.9M1536 564.8V569.7M1537 561.2V562.5M1537 564.4V567.8M1538 560.6V571.6M1539 558.5V560.3M1539 562.2V568.7M1540 559.3V560.0M1540 562.3V571.6M1541 562.4V563.9M1541 566.2V571.4M1542 558.9V569.4M1543 563.0V564.2M1543 565.5V570.0M1544 559.0V561.3M1544 563.2V571.2M1545 562.6V570.9M1546 560.8V562.5M1546 564.3V569.1M1547 559.1V571.6M1548 559.5V572.1M1549 563.0V564.1M1549 565.2V569.7M1550 560.2V562.2M1550 564.5V573.0M1551 560.3V563.1M1551 565.1V569.1M1552 559.8V561.9M1552 563.0V569.6M1553 560.2V571.6M1554 562.7V563.7M1554 565.0V568.4M1555 562.0V564.7M1555 566.2V572.4M1556 559.5V563.2M1556 565.6V572.4M1557 560.3V569.3M1558 560.2V563.7M1558 564.8V571.1M1559 559.3V571.1M1560 560.4V561.4M1560 563.0V568.7M1561 562.6V569.3M1562 561.4V571.3M1563 562.3V562.9M1563 565.2V571.4M1564 559.3V570.1M1565 555.9V559.4M1565 561.4V571.4M1566 562.8V569.5M1567 561.3V569.0M1568 559.4V570.6M1569 560.2V561.0M1569 562.9V570.4M1570 559.1V572.1M1571 561.8V564.1M1571 565.2V571.8M1572 561.2V563.8M1572 565.3V568.9M1573 560.8V562.3M1573 563.7V569.6M1574 559.5V571.0M1575 561.9V572.7M1576 560.2V572.2M1577 562.4V569.7M1578 562.5V564.3M1578 565.4V572.2M1579 561.1V562.5M1579 563.9V570.9M1580 560.3V563.9M1580 566.0V571.8M1581 560.8V570.4M1582 561.0V562.8M1582 564.6V569.1M1583 562.4V563.9M1583 565.9V574.6M1584 559.7V572.1M1585 561.2V562.0M1585 564.2V571.7M1586 561.4V570.9M1587 559.8V563.8M1587 565.1V571.5M1588 557.2V572.6M1589 555.2V571.4M1590 561.8V564.4M1590 566.0V572.5M1591 559.9V562.7M1591 564.1V572.6M1592 561.8V565.0M1592 566.7V573.4M1593 563.2V573.2M1594 563.2V565.6M1594 567.8V571.4M1595 561.1V561.8M1595 563.7V571.6M1596 559.7V568.9M1597 562.2V563.7M1597 566.2V569.9M1598 560.5V571.0M1599 563.7V565.6M1599 567.8V573.3M1600 561.8V563.8M1600 565.6V572.7M1601 563.8V569.4M1602 563.1V571.1M1603 562.5V570.3M1604 561.0V561.6M1604 564.0V569.6M1605 559.9V561.2M1605 562.4V572.0M1606 560.3V570.3M1607 560.9V563.9M1607 565.4V570.2M1608 562.1V563.9M1608 566.1V570.2M1609 561.8V565.1M1609 566.5V572.4M1610 558.9V562.6M1610 564.7V570.2M1611 561.1V561.7M1611 563.2V570.1M1612 560.6V563.0M1612 564.4V571.7M1613 559.7V570.9M1614 558.7V568.7M1615 557.5V561.4M1615 563.5V570.7M1616 557.8V568.2M1617 559.3V569.4M1618 558.2V561.1M1618 562.2V571.4M1619 562.1V564.9M1619 566.8V571.9M1620 562.5V563.1M1620 565.4V570.7M1621 559.3V571.2M1622 560.9V563.0M1622 565.3V571.4M1623 560.6V571.8M1624 558.1V559.4M1624 561.2V570.2M1625 559.1V570.7M1626 557.4V559.1M1626 560.8V568.1M1627 557.8V559.6M1627 560.9V570.4M1628 557.8V558.8M1628 560.9V566.5M1629 557.2V560.7M1629 563.0V570.7M1630 561.3V563.7M1630 565.4V569.2M1631 559.5V570.9M1632 558.2V561.4M1632 562.7V568.5M1633 559.2V560.5M1633 562.1V569.7M1634 559.8V568.2M1635 557.5V560.4M1635 562.7V569.0M1636 557.5V569.2M1637 557.0V567.0M1638 558.8V571.0M1639 559.7V572.1M1640 559.5V569.8M1641 560.5V570.0M1642 560.7V562.7M1642 563.7V568.5M1643 560.6V563.1M1643 564.7V569.2M1644 559.8V571.4M1645 558.4V561.4M1645 562.9V569.0M1646 561.0V571.3M1647 558.8V562.2M1647 564.6V571.2M1648 559.7V569.8M1649 559.8V568.1M1650 561.8V569.3M1651 559.0V559.7M1651 561.2V571.9M1652 559.3V561.3M1652 563.4V570.9M1653 562.9V568.2M1654 562.0V565.1M1654 566.4V572.6M1655 559.7V569.2M1656 560.7V564.2M1656 565.5V571.9M1657 558.9V560.1M1657 561.6V570.7M1658 561.8V570.9M1659 561.3V563.9M1659 565.2V571.2M1660 551.6V557.1M1660 559.5V570.5M1661 560.0V570.7M1662 559.5V563.6M1662 566.0V571.5M1663 560.5V562.4M1663 564.0V571.3M1664 559.8V569.4M1665 558.7V570.0M1666 558.7V561.6M1666 562.8V570.6M1667 560.0V562.8M1667 564.1V571.4M1668 558.2V567.6M1669 558.3V562.7M1669 564.1V571.3M1670 559.6V560.7M1670 562.2V572.0M1671 557.1V559.7M1671 560.8V568.4M1672 558.5V560.1M1672 562.1V572.1M1673 558.6V569.0M1674 560.4V562.3M1674 564.0V570.7M1675 558.3V562.0M1675 564.5V569.5M1676 560.9V563.3M1676 565.2V570.6M1677 558.9V559.6M1677 562.1V570.4M1678 560.5V561.8M1678 563.8V567.0M1679 561.5V569.6M1680 558.7V559.4M1680 561.3V571.4M1681 561.8V568.8M1682 558.7V561.5M1682 562.6V567.4M1683 559.4V560.5M1683 562.5V569.0M1684 558.6V561.9M1684 563.5V569.8M1685 560.5V571.7M1686 559.1V561.0M1686 562.7V570.8M1687 561.0V561.6M1687 563.1V572.1M1688 561.1V564.7M1688 565.7V572.1M1689 560.4V562.7M1689 564.5V570.1M1690 558.9V572.2M1691 562.1V572.0M1692 560.5V561.3M1692 562.4V570.5M1693 558.6V570.6M1694 561.3V563.6M1694 564.6V569.7M1695 560.9V563.0M1695 564.5V567.6M1696 561.3V562.3M1696 564.4V569.8" stroke="#2ca02c" stroke-width="1" fill="none" opacity="1"/><path d="M909 589.4V599.1M910 587.5V590.1M910 592.5V598.7M911 585.8V586.8M911 589.1V594.8M912 585.7V598.1M913 587.0V598.1M914 585.1V585.7M914 587.5V594.5M915 586.2V596.8M916 587.2V596.4M917 585.5V587.5M917 589.1V596.7M918 584.5V588.9M918 590.1V598.2M919 586.6V595.8M920 584.7V586.8M920 589.1V596.9M921 584.8V596.6M922 585.1V588.3M922 590.5V596.4M923 588.0V590.1M923 591.7V596.0M924 586.2V587.0M924 588.4V593.4M925 586.3V588.4M925 590.7V593.9M926 584.1V585.1M926 586.8V593.4M927 584.2V585.0M927 587.0V595.4M928 586.9V589.3M928 590.4V597.2M929 584.4V593.1M930 586.5V596.0M931 585.9V596.5M932 585.3V586.6M932 587.8V595.4M933 584.9V588.8M933 590.9V597.3M934 585.9V587.6M934 589.0V596.5M935 586.4V595.5M936 583.8V592.8M937 587.0V594.0M938 585.2V595.8M939 583.9V585.5M939 586.5V596.9M940 581.0V583.1M940 584.4V594.9M941 585.6V596.6M942 575.5V577.2M942 578.6V595.1M943 587.3V590.2M943 592.0V597.3M944 587.4V595.1M945 587.2V588.4M945 589.4V596.2M946 587.1V588.4M946 590.4V594.0M947 583.6V595.9M948 583.6V585.5M948 587.9V594.9M949 585.7V596.5M950 583.9V595.4M951 584.9V586.0M951 588.1V596.6M952 587.1V589.3M952 591.4V595.7M953 585.4V598.2M954 586.7V588.3M954 590.1V597.2M955 585.2V594.6M956 585.0V585.9M956 587.0V594.6M957 584.0V596.5M958 586.4V588.7M958 589.9V596.8M959 585.7V589.7M959 592.1V597.7M960 585.6V595.5M961 584.9V596.9M962 587.8V588.7M962 589.7V597.1M963 584.7V597.2M964 584.9V586.0M964 587.6V595.7M965 587.2V602.7M966 586.4V590.3M966 592.5V599.1M967 588.4V590.3M967 591.6V595.9M968 585.3V586.8M968 588.0V597.1M969 585.7V587.3M969 588.9V596.5M970 585.3V588.9M970 591.3V595.9M971 586.8V597.5M972 589.5V591.1M972 592.9V598.0M973 586.7V596.6M974 588.2V590.4M974 592.4V597.8M975 586.6V587.2M975 588.9V594.9M976 585.3V595.1M977 585.4V594.9M978 585.1V586.6M978 588.7V596.2M979 588.7V591.2M979 593.3V598.0M980 585.6V587.6M980 588.8V597.0M981 586.2V588.2M981 590.0V596.7M982 585.7V598.5M983 585.3V596.5M984 586.0V597.4M985 587.8V596.4M986 587.5V596.4M987 587.2V594.0M988 587.4V593.7M989 586.9V596.7M990 583.6V594.6M991 583.2V596.5M992 583.6V585.5M992 587.7V593.7M993 585.4V586.5M993 587.9V594.1M994 583.6V595.2M995 584.3V587.2M995 589.4V595.9M996 580.7V583.4M996 585.3V593.9M997 586.5V588.6M997 590.8V592.6M998 584.2V585.2M998 587.6V594.8M999 584.8V586.9M999 589.0V593.0M1000 585.0V587.5M1000 589.5V595.3M1001 582.9V587.6M1001 588.8V596.6M1002 584.3V595.0M1003 583.4V593.8M1004 583.4V584.5M1004 586.6V596.4M1005 579.1V595.7M1006 586.4V587.5M1006 590.0V593.0M1007 583.0V596.0M1008 582.5V595.8M1009 583.3V592.5M1010 584.3V586.0M1010 587.9V593.0M1011 584.4V596.3M1012 583.8V596.7M1013 582.8V584.7M1013 585.8V596.7M1014 582.6V587.0M1014 589.1V596.0M1015 582.5V583.5M1015 585.4V593.8M1016 585.7V595.8M1017 583.7V596.7M1018 583.0V585.4M1018 587.7V593.0M1019 583.3V596.3M1020 583.3V586.5M1020 588.3V596.1M1021 583.2V587.4M1021 589.1V596.7M1022 584.1V585.8M1022 587.3V593.1M1023 587.1V589.4M1023 591.8V593.8M1024 586.7V589.3M1024 591.0V596.9M1025 583.6V584.9M1025 586.5V595.1M1026 584.7V593.4M1027 583.9V595.1M1028 585.5V596.6M1029 584.0V597.1M1030 586.9V588.6M1030 589.8V594.1M1031 583.9V586.5M1031 588.5V596.4M1032 584.2V592.8M1033 583.7V586.2M1033 587.4V594.3M1034 583.6V585.1M1034 587.1V594.6M1035 584.8V597.2M1036 585.1V587.1M1036 588.9V593.5M1037 583.5V593.8M1038 586.0V587.2M1038 588.5V594.9M1039 587.3V596.3M1040 583.2V585.3M1040 587.7V596.3M1041 579.6V580.5M1041 582.4V594.4M1042 582.8V594.1M1043 583.9V595.6M1044 583.9V586.2M1044 588.2V596.3M1045 586.7V589.4M1045 590.5V595.4M1046 584.1V596.2M1047 583.1V596.2M1048 584.3V587.5M1048 589.8V595.9M1049 583.8V586.0M1049 587.5V593.4M1050 583.4V599.0M1051 582.3V584.0M1051 586.2V593.1M1052 582.4V595.7M1053 584.8V585.8M1053 587.0V595.9M1054 580.1V582.4M1054 584.0V593.4M1055 585.2V594.1M1056 584.1V595.1M1057 584.8V586.1M1057 588.6V594.1M1058 583.0V595.7M1059 583.8V585.3M1059 586.3V594.9M1060 584.5V586.4M1060 588.0V591.8M1061 582.5V594.1M1062 583.9V587.6M1062 588.7V595.5M1063 585.3V593.3M1064 582.6V585.9M1064 588.4V595.2M1065 580.6V584.9M1065 585.9V596.4M1066 585.4V599.7M1067 583.4V585.2M1067 586.2V594.4M1068 586.0V587.1M1068 588.2V593.5M1069 584.0V595.5M1070 583.4V592.3M1071 586.9V593.5M1072 583.9V595.5M1073 585.4V587.9M1073 590.3V594.0M1074 583.9V586.9M1074 588.5V597.5M1075 587.1V593.5M1076 583.7V596.8M1077 583.8V595.7M1078 583.1V587.3M1078 589.2V596.1M1079 584.4V586.9M1079 589.4V594.6M1080 583.7V595.2M1081 585.7V587.0M1081 588.2V600.8M1082 586.8V588.1M1082 590.1V594.2M1083 584.7V587.3M1083 589.6V594.9M1084 582.9V597.7M1085 586.3V594.2M1086 586.2V586.9M1086 588.8V596.6M1087 583.4V584.1M1087 585.8V594.7M1088 584.9V585.8M1088 587.8V593.9M1089 586.3V595.8M1090 587.5V596.3M1091 584.5V594.5M1092 581.2V595.3M1093 583.3V595.1M1094 584.3V586.7M1094 589.0V595.8M1095 584.1V585.4M1095 587.4V595.2M1096 586.7V587.9M1096 589.2V595.5M1097 584.3V587.8M1097 589.1V595.3M1098 582.6V592.3M1099 585.6V588.2M1099 589.5V595.2M1100 585.0V596.3M1101 583.3V586.1M1101 587.1V596.0M1102 585.7V595.3M1103 583.6V584.6M1103 586.6V594.3M1104 584.5V588.1M1104 589.3V595.0M1105 585.0V587.4M1105 589.1V594.0M1106 584.2V586.3M1106 588.0V597.1M1107 582.3V593.9M1108 583.5V596.0M1109 583.9V587.5M1109 588.6V595.8M1110 583.3V586.2M1110 588.3V595.2M1111 583.9V584.9M1111 585.9V595.1M1112 585.3V587.0M1112 589.2V593.8M1113 582.9V595.1M1114 583.2V595.8M1115 584.6V585.5M1115 587.1V596.6M1116 587.0V593.4M1117 579.9V595.6M1118 582.6V595.9M1119 585.0V592.1M1120 582.5V584.8M1120 586.1V594.6M1121 585.8V586.4M1121 588.4V595.5M1122 585.1V585.9M1122 586.9V593.8M1123 584.6V595.2M1124 583.9V586.7M1124 588.7V593.3M1125 585.6V592.4M1126 584.5V591.8M1127 582.4V595.4M1128 578.7V581.8M1128 582.8V595.5M1129 583.5V584.3M1129 585.8V592.5M1130 583.9V594.6M1131 585.5V587.7M1131 588.9V592.0M1132 582.6V584.8M1132 586.8V594.4M1133 584.6V587.4M1133 588.5V594.3M1134 585.5V594.2M1135 583.1V592.8M1136 586.3V594.2M1137 584.6V595.3M1138 582.9V584.4M1138 586.4V594.2M1139 583.4V586.0M1139 587.9V593.7M1140 583.3V586.2M1140 587.3V595.6M1141 583.4V595.8M1142 585.0V592.9M1143 583.0V585.2M1143 586.5V595.9M1144 584.5V585.4M1144 587.8V592.3M1145 585.2V591.8M1146 582.4V594.8M1147 582.4V583.8M1147 585.3V596.0M1148 582.6V593.0M1149 583.5V584.0M1149 586.1V593.8M1150 584.0V586.6M1150 588.5V593.1M1151 585.4V596.2M1152 586.1V587.6M1152 588.6V594.8M1153 585.5V588.0M1153 589.9V594.5M1154 584.2V596.0M1155 583.0V596.0M1156 583.3V587.4M1156 588.6V596.3M1157 586.5V594.1M1158 585.3V596.6M1159 585.4V596.5M1160 583.9V587.2M1160 588.7V595.0M1161 584.7V586.5M1161 588.7V595.2M1162 583.7V595.0M1163 583.8V584.5M1163 586.3V594.7M1164 584.3V595.3M1165 586.8V587.7M1165 590.1V592.7M1166 584.5V587.0M1166 589.0V595.8M1167 583.9V586.8M1167 588.9V593.4M1168 586.5V588.3M1168 589.4V595.7M1169 584.8V585.5M1169 586.5V594.4M1170 584.0V595.3M1171 584.6V587.4M1171 588.9V594.5M1172 583.8V584.4M1172 585.8V594.4M1173 584.0V587.4M1173 589.6V594.5M1174 585.4V597.5M1175 585.1V588.1M1175 589.6V593.8M1176 584.1V586.9M1176 588.7V596.2M1177 585.2V585.7M1177 587.3V592.9M1178 585.3V586.6M1178 588.1V594.2M1179 576.7V595.6M1180 582.9V592.4M1181 582.6V595.7M1182 585.8V586.6M1182 588.9V592.9M1183 586.7V594.2M1184 584.9V596.6M1185 586.4V595.9M1186 584.9V586.3M1186 587.7V592.8M1187 583.5V594.5M1188 586.0V587.0M1188 588.6V594.6M1189 583.8V596.5M1190 585.1V592.7M1191 583.2V596.9M1192 583.3V585.8M1192 587.3V595.0M1193 584.0V586.5M1193 588.8V595.1M1194 584.2V595.1M1195 585.8V586.7M1195 588.5V596.6M1196 583.7V597.0M1197 586.8V588.3M1197 590.7V596.4M1198 586.4V587.1M1198 589.3V595.2M1199 585.8V594.0M1200 584.7V587.3M1200 589.3V592.6M1201 582.3V583.4M1201 585.5V591.8M1202 583.4V592.3M1203 584.1V595.7M1204 585.1V595.6M1205 583.7V586.0M1205 587.2V594.1M1206 584.9V586.6M1206 587.8V591.7M1207 583.8V586.9M1207 589.2V593.3M1208 583.2V584.2M1208 586.1V595.1M1209 581.8V593.1M1210 585.2V594.0M1211 583.1V594.3M1212 582.5V594.2M1213 574.4V576.2M1213 577.6V591.9M1214 583.6V592.9M1215 581.4V595.7M1216 574.7V593.8M1217 582.2V591.9M1218 582.6V592.1M1219 582.3V583.5M1219 586.0V590.7M1220 580.5V582.6M1220 583.7V592.2M1221 580.4V584.0M1221 586.1V591.8M1222 582.7V584.0M1222 585.5V593.1M1223 580.7V592.6M1224 582.5V585.1M1224 587.6V593.9M1225 581.9V583.9M1225 585.7V592.1M1226 580.9V584.3M1226 586.4V593.1M1227 582.9V583.5M1227 585.3V591.8M1228 581.0V593.2M1229 582.6V591.8M1230 584.2V592.1M1231 581.3V590.2M1232 580.5V591.1M1233 580.2V593.2M1234 581.1V581.9M1234 583.6V591.7M1235 579.7V593.0M1236 582.8V583.9M1236 586.2V589.9M1237 580.7V582.6M1237 584.3V591.8M1238 579.8V580.7M1238 583.1V591.4M1239 581.0V592.9M1240 581.7V590.0M1241 580.3V592.5M1242 584.1V585.9M1242 587.1V593.5M1243 582.4V589.9M1244 581.3V593.0M1245 580.8V592.0M1246 583.2V583.8M1246 586.0V592.9M1247 581.1V593.3M1248 579.6V580.7M1248 582.0V593.2M1249 583.7V586.0M1249 587.3V590.3M1250 582.5V585.1M1250 587.0V591.2M1251 580.0V583.2M1251 584.4V592.6M1252 582.6V593.5M1253 580.4V582.2M1253 584.2V591.3M1254 583.4V585.7M1254 587.0V593.4M1255 579.8V583.0M1255 584.6V590.8M1256 581.8V592.6M1257 580.0V593.7M1258 583.5V590.5M1259 582.8V585.8M1259 587.4V593.6M1260 579.6V591.8M1261 582.2V583.1M1261 584.2V589.6M1262 582.8V584.4M1262 586.1V592.0M1263 583.5V592.5M1264 583.9V585.9M1264 587.5V592.2M1265 583.4V585.8M1265 587.6V593.4M1266 580.8V584.7M1266 586.4V592.7M1267 580.8V583.5M1267 585.4V592.5M1268 581.9V583.4M1268 585.2V591.7M1269 580.1V592.6M1270 581.2V591.4M1271 580.5V590.2M1272 580.5V583.6M1272 584.7V592.1M1273 581.5V589.8M1274 580.6V581.7M1274 583.2V593.7M1275 580.5V584.4M1275 585.7V593.9M1276 584.0V592.9M1277 581.5V593.0M1278 583.7V585.4M1278 587.0V591.5M1279 584.0V590.2M1280 577.4V581.1M1280 582.1V591.1M1281 583.3V592.8M1282 582.6V583.2M1282 584.7V592.3M1283 579.2V592.3M1284 581.7V591.6M1285 580.0V582.1M1285 584.2V588.3M1286 582.4V591.0M1287 581.1V583.8M1287 585.1V590.1M1288 581.5V584.5M1288 585.8V590.3M1289 581.1V583.3M1289 584.7V589.0M1290 576.9V589.7M1291 580.8V590.3M1292 579.3V583.2M1292 585.6V591.7M1293 580.7V583.7M1293 586.1V590.9M1294 579.2V582.5M1294 584.1V591.9M1295 579.6V583.3M1295 585.0V591.7M1296 578.5V588.5M1297 578.7V590.9M1298 578.5V580.8M1298 583.2V590.7M1299 581.2V589.8M1300 581.6V582.6M1300 583.9V588.7M1301 582.4V589.6M1302 582.1V583.5M1302 585.0V590.0M1303 579.3V582.6M1303 584.7V590.5M1304 578.7V591.4M1305 580.3V593.1M1306 579.4V581.2M1306 582.7V592.1M1307 580.2V582.3M1307 584.1V591.9M1308 582.0V583.4M1308 585.4V592.3M1309 579.7V590.1M1310 578.6V580.9M1310 582.1V591.6M1311 579.3V583.2M1311 584.4V590.3M1312 580.3V590.6M1313 579.9V592.4M1314 582.3V585.5M1314 587.3V591.8M1315 579.0V579.5M1315 581.5V589.5M1316 581.5V582.2M1316 584.0V591.4M1317 582.1V589.6M1318 582.6V591.2M1319 582.1V583.4M1319 585.6V591.3M1320 581.5V582.4M1320 583.6V591.2M1321 581.1V583.8M1321 585.7V590.3M1322 580.0V592.3M1323 579.0V581.4M1323 582.5V591.6M1324 580.2V582.5M1324 584.0V590.2M1325 578.8V589.9M1326 582.0V590.1M1327 579.9V591.1M1328 578.3V582.7M1328 583.8V591.5M1329 579.4V589.7M1330 579.2V589.5M1331 579.7V583.4M1331 585.1V590.8M1332 580.3V581.2M1332 583.7V588.6M1333 580.9V583.5M1333 584.7V589.6M1334 577.9V590.8M1335 582.0V591.5M1336 577.8V582.3M1336 584.0V591.5M1337 578.3V587.4M1338 579.3V591.3M1339 581.3V589.7M1340 578.8V582.5M1340 584.6V589.6M1341 579.5V591.7M1342 579.0V581.9M1342 582.9V591.6M1343 578.5V589.5M1344 578.8V582.0M1344 584.3V590.7M1345 582.4V584.8M1345 586.2V591.8M1346 580.9V590.3M1347 578.3V581.2M1347 583.3V591.8M1348 580.0V591.2M1349 582.8V584.5M1349 586.9V589.8M1350 578.6V582.5M1350 584.3V589.8M1351 582.2V582.6M1351 584.0V588.8M1352 578.7V589.4M1353 578.7V592.3M1354 579.3V589.8M1355 579.8V580.4M1355 581.6V589.2M1356 581.1V590.8M1357 579.3V592.1M1358 582.2V588.8M1359 580.9V588.1M1360 579.6V582.1M1360 584.5V590.5M1361 578.9V582.0M1361 583.9V590.6M1362 579.4V589.7M1363 573.1V592.5M1364 580.4V582.1M1364 584.3V591.5M1365 580.9V582.9M1365 585.0V592.7M1366 580.2V593.4M1367 582.8V593.0M1368 580.3V590.2M1369 583.3V589.5M1370 581.9V592.5M1371 581.1V583.0M1371 584.0V593.3M1372 583.0V593.7M1373 582.0V590.1M1374 584.0V590.1M1375 582.7V591.0M1376 581.8V582.9M1376 584.4V591.6M1377 581.1V583.6M1377 585.4V590.7M1378 581.3V583.3M1378 584.9V592.5M1379 582.6V584.8M1379 586.2V592.6M1380 583.8V593.2M1381 581.0V591.7M1382 581.0V582.9M1382 583.9V591.8M1383 579.9V591.8M1384 579.6V592.8M1385 581.0V589.4M1386 580.7V581.6M1386 583.8V591.4M1387 582.3V583.9M1387 586.3V589.8M1388 580.7V583.2M1388 585.4V588.7M1389 581.5V583.1M1389 584.5V588.9M1390 575.1V591.1M1391 582.4V588.9M1392 575.4V577.9M1392 580.0V588.9M1393 578.6V588.1M1394 578.0V590.3M1395 582.0V583.1M1395 584.3V588.3M1396 578.7V590.3M1397 577.9V590.0M1398 575.6V577.9M1398 579.9V588.6M1399 579.8V590.4M1400 579.5V588.7M1401 579.6V589.0M1402 580.7V582.1M1402 583.2V591.5M1403 580.7V583.0M1403 584.8V592.0M1404 580.5V588.7M1405 578.6V580.7M1405 582.1V591.6M1406 579.4V589.7M1407 580.0V582.2M1407 583.6V589.6M1408 578.7V588.1M1409 580.9V589.7M1410 581.0V591.8M1411 580.3V583.2M1411 585.5V589.3M1412 579.7V591.7M1413 579.4V590.6M1414 579.4V582.5M1414 583.7V590.5M1415 582.3V590.9M1416 579.1V580.0M1416 581.6V588.9M1417 577.6V579.3M1417 580.7V589.2M1418 581.6V590.0M1419 582.7V593.7M1420 579.2V590.9M1421 581.0V591.6M1422 580.1V590.9M1423 580.6V583.5M1423 585.9V590.7M1424 578.8V588.7M1425 581.7V589.4M1426 581.5V583.1M1426 584.2V588.9M1427 579.3V580.6M1427 583.0V589.0M1428 579.7V582.2M1428 583.9V589.9M1429 578.6V579.8M1429 581.5V592.1M1430 582.1V584.4M1430 585.6V592.1M1431 581.3V591.8M1432 580.2V591.5M1433 579.3V590.3M1434 580.6V589.1M1435 582.5V583.7M1435 585.1V592.1M1436 580.3V581.2M1436 582.3V592.1M1437 580.7V592.4M1438 572.5V573.8M1438 575.2V591.5M1439 580.5V584.9M1439 586.1V593.6M1440 581.5V592.8M1441 580.6V591.2M1442 580.1V593.5M1443 582.9V585.7M1443 587.0V592.9M1444 581.0V593.5M1445 580.4V582.3M1445 584.0V589.7M1446 580.0V591.2M1447 582.3V589.9M1448 580.2V582.8M1448 585.3V591.3M1449 582.7V592.1M1450 579.7V581.8M1450 583.2V589.2M1451 584.1V585.4M1451 586.8V593.2M1452 583.1V584.2M1452 586.5V590.3M1453 580.8V581.6M1453 583.1V593.0M1454 582.9V583.6M1454 585.2V589.4M1455 580.9V590.9M1456 583.2V584.7M1456 585.9V591.9M1457 582.6V593.1M1458 579.7V591.6M1459 580.7V582.0M1459 584.3V591.6M1460 582.2V583.5M1460 584.6V592.0M1461 582.0V590.2M1462 582.4V583.8M1462 586.0V591.1M1463 580.4V590.7M1464 583.4V584.8M1464 585.9V594.0M1465 583.0V592.7M1466 583.1V591.0M1467 580.5V584.5M1467 586.5V591.9M1468 582.8V583.2M1468 585.0V590.5M1469 577.0V589.5M1470 582.1V592.4M1471 580.0V592.4M1472 580.6V592.2M1473 580.0V580.8M1473 582.9V592.0M1474 578.6V591.3M1475 580.1V581.5M1475 582.8V589.2M1476 580.2V580.7M1476 581.9V587.5M1477 581.2V592.2M1478 580.1V589.4M1479 572.7V591.0M1480 578.9V583.1M1480 584.2V591.5M1481 579.3V588.7M1482 578.7V579.3M1482 581.1V588.5M1483 578.6V579.8M1483 580.8V590.7M1484 578.9V588.2M1485 579.1V582.2M1485 583.5V592.9M1486 581.8V582.7M1486 584.1V589.8M1487 581.6V582.4M1487 583.5V592.2M1488 579.1V589.4M1489 582.3V591.1M1490 582.2V592.0M1491 573.7V579.1M1491 581.5V592.8M1492 581.4V593.1M1493 582.2V591.4M1494 581.8V583.8M1494 586.3V591.3M1495 580.4V582.3M1495 584.2V590.5M1496 583.0V590.8M1497 580.9V589.8M1498 579.9V582.7M1498 583.9V588.9M1499 582.6V584.8M1499 586.1V591.7M1500 580.9V583.9M1500 585.0V589.8M1501 581.8V589.4M1502 582.4V583.6M1502 585.2V589.7M1503 581.5V583.6M1503 585.6V591.7M1504 582.1V582.9M1504 584.2V591.4M1505 580.7V588.0M1506 575.7V578.1M1506 579.5V589.1M1507 578.5V592.0M1508 581.1V583.6M1508 584.7V588.9M1509 580.4V587.8M1510 581.6V589.3M1511 577.8V581.1M1511 583.3V589.8M1512 578.4V581.2M1512 583.6V592.0M1513 581.1V582.0M1513 584.3V589.9M1514 579.9V591.2M1515 581.8V582.6M1515 585.0V592.5M1516 582.7V585.6M1516 586.7V592.4M1517 581.5V582.1M1517 584.5V591.6M1518 580.4V590.0M1519 582.3V585.1M1519 586.6V590.4M1520 582.0V592.2M1521 581.1V582.1M1521 584.1V592.0M1522 580.1V591.3M1523 579.1V592.0M1524 579.6V583.6M1524 584.6V592.0M1525 580.5V583.9M1525 585.0V591.9M1526 578.5V592.2M1527 578.8V590.1M1528 582.5V591.1M1529 581.7V584.7M1529 586.0V591.8M1530 575.6V590.3M1531 580.8V592.0M1532 581.2V583.9M1532 586.3V590.0M1533 580.1V592.7M1534 580.6V584.1M1534 586.3V594.6M1535 581.4V592.1M1536 582.3V593.8M1537 580.2V581.9M1537 583.2V592.3M1538 578.5V591.3M1539 581.0V592.5M1540 583.0V592.5M1541 578.7V591.4M1542 580.8V584.7M1542 585.8V592.1M1543 582.6V585.6M1543 587.9V592.7M1544 580.3V581.4M1544 582.9V592.2M1545 582.4V590.7M1546 579.6V591.8M1547 581.0V591.9M1548 582.9V589.1M1549 581.4V582.7M1549 583.9V590.7M1550 581.7V590.9M1551 580.2V581.2M1551 583.3V591.1M1552 581.8V583.0M1552 584.7V591.3M1553 579.7V592.3M1554 578.4V591.3M1555 581.4V590.4M1556 580.8V582.1M1556 583.7V592.9M1557 579.9V591.8M1558 580.4V592.0M1559 578.7V579.4M1559 580.8V592.2M1560 578.9V588.9M1561 580.7V581.9M1561 583.6V590.7M1562 579.0V589.4M1563 581.8V587.5M1564 580.1V591.4M1565 579.1V588.5M1566 578.8V589.5M1567 578.8V589.8M1568 579.4V580.3M1568 581.9V591.8M1569 582.0V582.8M1569 584.1V590.5M1570 580.6V582.1M1570 583.3V587.6M1571 580.7V582.7M1571 584.1V588.7M1572 581.4V584.2M1572 585.9V590.3M1573 580.9V590.0M1574 578.3V587.7M1575 581.8V589.6M1576 578.4V582.4M1576 584.7V590.7M1577 581.5V589.2M1578 578.2V580.5M1578 582.8V589.1M1579 579.0V581.7M1579 582.8V589.5M1580 579.3V582.4M1580 584.4V588.8M1581 578.1V593.9M1582 579.6V582.0M1582 583.3V589.0M1583 580.2V581.5M1583 583.2V591.3M1584 575.6V577.8M1584 579.3V589.6M1585 578.2V590.9M1586 580.5V582.0M1586 583.4V589.5M1587 581.7V583.4M1587 585.6V589.7M1588 577.4V588.1M1589 581.6V583.9M1589 586.1V588.3M1590 579.1V588.6M1591 581.8V583.7M1591 585.6V589.8M1592 580.1V588.4M1593 575.1V591.5M1594 578.2V589.8M1595 577.8V588.7M1596 581.3V591.0M1597 573.9V576.3M1597 578.6V590.4M1598 578.3V579.6M1598 581.1V590.5M1599 578.5V579.5M1599 581.7V589.1M1600 579.4V582.2M1600 584.3V588.5M1601 579.2V589.3M1602 578.6V587.8M1603 578.6V580.4M1603 582.5V588.7M1604 580.9V586.6M1605 579.3V588.5M1606 577.1V590.8M1607 578.6V582.8M1607 585.1V590.6M1608 579.6V591.6M1609 577.9V591.1M1610 580.2V589.9M1611 578.2V590.3M1612 578.2V589.7M1613 577.5V590.1M1614 579.4V587.7M1615 579.7V588.8M1616 577.5V587.4M1617 578.8V589.9M1618 577.9V580.7M1618 582.6V587.4M1619 577.6V580.3M1619 582.4V588.5M1620 577.4V589.0M1621 579.1V590.2M1622 578.2V580.8M1622 582.4V587.6M1623 579.1V581.8M1623 583.8V590.0M1624 577.3V589.1M1625 581.4V582.4M1625 583.5V587.8M1626 578.1V586.6M1627 578.5V579.1M1627 580.9V588.4M1628 580.6V582.2M1628 584.6V593.8M1629 581.1V582.0M1629 584.3V589.0M1630 578.8V591.3M1631 578.9V587.3M1632 577.5V590.0M1633 580.4V588.4M1634 578.5V579.6M1634 581.9V590.6M1635 578.1V581.8M1635 584.0V589.7M1636 578.6V579.5M1636 580.6V588.3M1637 578.7V580.6M1637 581.9V587.3M1638 578.8V581.8M1638 583.6V589.1M1639 577.1V579.5M1639 581.9V590.4M1640 580.4V582.1M1640 583.3V587.8M1641 578.7V580.8M1641 582.2V587.8M1642 578.7V581.0M1642 583.1V589.8M1643 579.7V583.8M1643 585.4V591.7M1644 578.3V589.0M1645 577.7V591.2M1646 577.9V580.6M1646 582.6V591.5M1647 578.1V588.7M1648 579.1V582.1M1648 583.6V591.8M1649 579.9V583.4M1649 585.1V591.2M1650 579.7V589.3M1651 581.5V591.7M1652 578.6V579.6M1652 581.5V591.4M1653 580.0V580.7M1653 582.4V588.9M1654 575.8V589.4M1655 581.3V581.7M1655 583.2V589.0M1656 581.3V592.2M1657 581.1V582.6M1657 584.7V589.2M1658 578.9V579.7M1658 580.7V588.8M1659 579.8V590.7M1660 580.0V581.4M1660 582.5V588.9M1661 579.9V580.5M1661 581.6V589.6M1662 579.1V589.3M1663 583.0V585.1M1663 586.1V590.9M1664 582.2V583.2M1664 584.7V593.0M1665 579.9V580.8M1665 581.8V591.3M1666 581.9V592.5M1667 581.1V582.9M1667 584.3V591.1M1668 578.7V582.9M1668 584.5V591.6M1669 580.4V588.4M1670 578.6V590.4M1671 578.5V589.5M1672 578.0V580.4M1672 581.5V588.5M1673 579.0V582.6M1673 584.4V590.6M1674 577.6V589.5M1675 580.8V590.0M1676 579.3V580.5M1676 582.5V588.8M1677 578.7V588.3M1678 581.4V582.1M1678 584.1V590.7M1679 578.5V590.9M1680 580.5V590.3M1681 577.7V589.2M1682 580.4V581.1M1682 583.1V589.1M1683 578.9V590.2M1684 578.5V580.9M1684 582.9V586.9M1685 580.8V581.3M1685 582.4V588.2M1686 577.4V579.7M1686 581.4V587.5M1687 579.1V580.0M1687 581.3V591.4M1688 581.7V591.3M1689 580.1V582.0M1689 584.1V590.2M1690 579.5V580.3M1690 582.5V590.6M1691 579.1V581.9M1691 583.0V587.4M1692 579.1V581.5M1692 582.5V587.0M1693 579.2V580.6M1693 581.9V587.6M1694 578.6V587.7M1695 578.8V589.2M1696 577.2V588.0" stroke="#d62728" stroke-width="1" fill="none" opacity="1"/><path d="M1751 557.9V561.6M1752 557.4V560.8M1753 557.8V561.9M1754 557.8V560.8M1755 557.6V561.3M1756 558.2V561.7M1757 558.2V561.8M1758 558.1V560.5M1759 557.1V557.6M1759 559.5V561.8M1760 557.5V561.3M1761 558.1V560.9M1762 557.8V560.9M1763 558.0V561.5M1764 557.1V561.4M1765 557.2V561.1M1766 557.2V558.3M1766 560.8V561.3M1767 557.7V560.8M1768 557.1V560.3M1769 558.0V561.1M1770 557.6V561.1M1771 558.1V561.4M1772 557.4V560.6M1773 557.9V561.1M1774 557.3V561.6M1775 558.2V561.7M1776 557.9V560.8M1777 558.3V560.8M1778 557.2V561.0M1779 558.6V560.4M1780 557.3V558.3M1780 560.6V561.5M1781 558.4V561.4M1782 557.2V557.9M1782 559.9V561.6M1783 557.8V561.7M1784 557.1V561.5M1785 557.8V558.0M1785 559.6V562.0M1786 557.7V561.3M1787 557.7V561.5M1788 558.0V560.8M1789 557.8V561.0M1790 557.1V560.3M1791 557.1V561.5M1792 557.1V561.0M1793 557.7V560.7M1794 557.8V560.8M1795 557.9V561.7M1796 557.3V560.9M1797 557.8V561.4M1798 558.6V561.6M1799 557.7V561.7M1800 557.8V561.8M1801 557.4V562.0M1802 558.3V561.9M1803 557.9V560.9M1804 558.0V561.2M1805 558.1V560.7M1806 557.4V561.4M1807 557.7V561.1M1808 557.5V561.3M1809 558.2V561.9M1810 558.5V560.8M1811 557.6V561.4M1812 557.4V561.4M1813 558.9V561.7M1814 557.8V561.9M1815 558.5V561.5M1816 557.8V562.1M1817 557.8V559.1M1817 561.5V562.1M1818 558.0V560.9M1819 556.9V562.0M1820 557.4V561.2M1821 558.2V561.8M1822 558.0V561.4M1823 557.6V561.5M1824 557.5V561.6M1825 557.5V558.1M1825 559.2V561.8M1826 557.9V561.7M1827 558.3V562.2M1828 558.6V561.7M1829 558.2V560.9M1830 558.8V561.1M1831 558.1V561.9M1832 557.6V561.9M1833 558.8V562.1M1834 557.8V561.5M1835 557.8V561.7M1836 558.9V561.5M1837 558.5V561.4M1838 558.9V562.1M1839 558.5V561.5M1840 558.3V561.9M1841 558.1V562.0M1842 558.2V561.9M1843 558.0V561.9M1844 558.2V561.8M1845 557.6V558.0M1845 559.9V562.1M1846 558.4V561.6M1847 558.8V562.2M1848 558.5V560.9M1849 557.4V558.9M1849 560.6V561.6M1850 554.9V561.2M1851 558.1V562.0M1852 558.4V560.8M1853 557.8V562.0M1854 558.4V560.9M1855 557.8V561.7M1856 558.5V562.0M1857 558.5V561.8M1858 559.0V561.7M1859 558.6V562.4M1860 558.0V561.7M1861 558.4V562.2M1862 558.0V560.8M1863 557.6V560.8M1864 558.9V561.4M1865 558.4V561.5M1866 558.6V561.1M1867 553.8V555.7M1867 558.1V561.9M1868 558.4V561.8M1869 557.8V559.4M1869 561.7V562.4M1870 557.6V561.7M1871 558.0V562.1M1872 558.6V562.0M1873 557.8V562.2M1874 558.7V562.2M1875 558.3V561.6M1876 558.0V562.1M1877 557.8V561.7M1878 558.9V561.9M1879 559.0V562.5M1880 558.0V559.1M1880 561.1V562.1M1881 558.6V561.4M1882 559.2V561.5M1883 558.5V562.2M1884 558.0V561.3M1885 558.0V562.0M1886 559.2V562.5M1887 558.1V562.0M1888 558.5V560.3M1888 562.8V563.6M1889 558.7V562.4M1890 558.8V561.6M1891 558.6V561.9M1892 557.8V561.4M1893 557.9V561.7M1894 558.5V562.6M1895 559.0V561.6M1896 558.3V561.1M1897 559.0V561.1M1898 557.9V561.0M1899 557.8V558.4M1899 560.0V561.9M1900 558.3V559.4M1900 561.1V562.5M1901 559.2V562.2M1902 558.8V562.2M1903 557.7V558.5M1903 559.7V562.2M1904 558.1V561.6M1905 558.4V561.3M1906 558.0V562.3M1907 559.2V561.6M1908 559.3V561.6M1909 559.2V561.6M1910 558.7V562.8M1911 559.2V561.6M1912 558.5V562.2M1913 558.5V562.6M1914 558.6V562.4M1915 558.5V562.3M1916 559.3V561.7M1917 559.2V562.4M1918 558.3V561.6M1919 558.8V562.7M1920 558.0V562.4M1921 559.1V561.6M1922 558.3V558.6M1922 560.9V562.6M1923 558.6V562.3M1924 559.4V561.7M1925 558.3V559.2M1925 560.9V562.8M1926 558.2V561.6M1927 558.4V561.7M1928 559.0V561.7M1929 559.3V561.6M1930 557.8V559.2M1930 561.1V561.8M1931 558.4V561.8M1932 558.9V561.6M1933 558.5V559.0M1933 560.6V562.5M1934 558.3V562.4M1935 558.5V561.4M1936 558.0V562.3M1937 559.1V562.4M1938 559.1V562.2M1939 558.2V562.2M1940 559.3V561.9M1941 559.0V562.2M1942 558.7V562.6M1943 558.9V562.7M1944 559.0V562.6M1945 559.7V562.6M1946 558.7V562.7M1947 558.8V559.8M1947 561.3V563.0M1948 558.3V562.2M1949 558.7V562.1M1950 558.8V562.8M1951 558.4V562.4M1952 558.9V562.5M1953 559.4V562.9M1954 559.3V562.2M1955 558.0V561.6M1956 558.6V562.6M1957 558.2V559.6M1957 561.1V562.7M1958 558.2V562.5M1959 559.1V562.6M1960 558.4V562.7M1961 558.6V561.3M1962 558.2V561.6M1963 558.1V562.7M1964 558.9V562.0M1965 558.2V561.7M1966 559.1V562.8M1967 558.6V561.8M1968 559.1V561.6M1969 558.7V559.7M1969 561.9V562.9M1970 558.3V562.8M1971 559.0V562.0M1972 559.0V561.8M1973 558.5V561.9M1974 558.3V562.1M1975 559.0V561.7M1976 558.7V562.0M1977 558.2V561.7M1978 555.2V555.9M1978 557.5V562.4M1979 559.1V561.7M1980 558.9V561.4M1981 558.2V562.0M1982 557.8V561.8M1983 557.9V559.2M1983 561.2V562.3M1984 558.4V562.2M1985 558.0V561.6M1986 558.4V562.0M1987 557.9V562.3M1988 559.0V562.5M1989 558.0V561.2M1990 558.4V559.3M1990 560.4V562.5M1991 558.9V561.4M1992 558.9V562.5M1993 559.1V561.8M1994 558.8V562.4M1995 559.5V561.4M1996 558.4V559.1M1996 560.7V563.2M1997 558.0V562.0M1998 558.5V562.1M1999 558.9V562.5M2000 559.2V562.5M2001 558.4V562.6M2002 558.2V558.9M2002 560.0V562.6M2003 558.5V562.5M2004 558.9V562.4M2005 558.9V562.5M2006 559.3V562.0M2007 559.7V563.1M2008 559.6V562.6M2009 559.1V562.3M2010 559.2V562.4M2011 555.6V557.6M2011 560.0V562.1M2012 558.9V562.1M2013 559.1V563.2M2014 559.3V562.9M2015 559.4V562.0M2016 559.3V562.2M2017 559.2V562.1M2018 559.0V562.2M2019 559.0V562.8M2020 558.6V559.2M2020 560.7V562.7M2021 559.2V562.6M2022 558.8V562.7M2023 559.1V562.3M2024 558.4V562.6M2025 558.3V562.5M2026 558.2V562.0M2027 558.7V562.5M2028 558.6V562.3M2029 558.9V562.8M2030 558.8V559.1M2030 561.4V563.2M2031 559.5V562.6M2032 559.5V563.0M2033 559.6V562.9M2034 559.2V562.7M2035 558.5V562.4M2036 558.5V561.7M2037 558.6V562.4M2038 558.2V558.8M2038 560.2V562.4M2039 558.8V562.7M2040 559.2V561.4M2041 559.6V562.5M2042 559.0V562.1M2043 558.9V562.7M2044 558.9V562.4M2045 559.4V562.1M2046 558.9V562.9M2047 558.8V562.6M2048 559.4V561.9M2049 559.2V562.4M2050 558.4V559.2M2050 561.3V562.7M2051 558.8V562.8M2052 558.8V562.9M2053 558.7V562.5M2054 558.5V559.6M2054 561.0V562.6M2055 558.1V559.3M2055 560.8V562.4M2056 558.7V562.6M2057 558.1V561.5M2058 558.2V559.0M2058 561.2V562.4M2059 558.7V562.2M2060 559.1V562.2M2061 558.2V561.6M2062 558.3V561.6M2063 558.2V561.5M2064 558.1V562.4M2065 558.0V559.1M2065 561.3V562.8M2066 558.6V562.0M2067 558.1V561.5M2068 559.4V562.2M2069 558.4V561.4M2070 558.6V562.5M2071 559.3V562.0M2072 558.3V562.8M2073 558.4V558.7M2073 560.3V562.6M2074 559.3V562.1M2075 558.7V559.2M2075 560.3V562.8M2076 558.7V559.0M2076 561.4V562.8M2077 558.8V562.9M2078 559.4V562.1M2079 558.0V558.6M2079 560.3V562.3M2080 558.4V562.6M2081 558.2V558.5M2081 560.1V562.2M2082 559.4V562.5M2083 558.3V562.2M2084 558.2V561.5M2085 559.5V561.6M2086 558.7V562.3M2087 559.2V562.2M2088 558.7V561.9M2089 558.4V559.9M2089 561.9V562.8M2090 558.8V561.8M2091 554.3V562.1M2092 559.5V562.0M2093 559.4V562.7M2094 559.2V562.5M2095 559.4V562.9M2096 559.4V562.4M2097 558.8V562.2M2098 558.6V559.3M2098 560.4V563.0M2099 559.3V563.1M2100 559.1V561.9M2101 559.8V562.6M2102 559.0V562.6M2103 559.7V563.2M2104 558.7V562.8M2105 559.0V562.6M2106 559.3V562.1M2107 559.0V559.3M2107 560.4V563.3M2108 559.5V563.3M2109 559.4V561.9M2110 558.9V562.7M2111 560.1V562.7M2112 559.0V563.3M2113 559.2V562.3M2114 558.7V562.2M2115 558.6V562.8M2116 559.9V563.3M2117 559.0V563.1M2118 558.7V563.3M2119 560.0V562.7M2120 559.3V562.7M2121 559.6V562.9M2122 559.8V563.1M2123 558.9V562.4M2124 559.1V562.3M2125 559.7V562.6M2126 558.7V562.8M2127 559.7V562.2M2128 558.9V562.8M2129 559.2V562.8M2130 558.6V560.1M2130 561.5V562.9M2131 558.5V561.8M2132 558.7V562.0M2133 559.4V562.5M2134 558.7V562.2M2135 559.0V562.2M2136 555.5V562.9M2137 557.0V557.4M2137 559.5V562.4M2138 558.8V561.9M2139 559.0V563.0M2140 558.5V562.4M2141 558.5V563.2M2142 558.8V562.8M2143 558.6V563.1M2144 559.4V563.0M2145 560.3V563.3M2146 559.2V559.7M2146 561.8V563.5M2147 559.2V562.8M2148 559.6V562.9M2149 559.6V562.9M2150 560.3V563.1M2151 560.0V563.7M2152 559.2V563.1M2153 559.4V563.5M2154 559.6V562.3M2155 559.8V563.2M2156 559.3V562.3M2157 560.4V563.4M2158 560.0V563.4M2159 559.6V563.9M2160 559.8V563.8M2161 559.0V562.4M2162 559.4V560.6M2162 561.7V563.5M2163 556.7V563.5M2164 559.7V563.7M2165 559.6V563.6M2166 559.9V563.5M2167 559.6V560.8M2167 562.9V563.7M2168 559.8V563.4M2169 560.1V563.7M2170 560.1V562.5M2171 559.5V563.1M2172 559.0V562.3M2173 559.4V563.4M2174 559.6V563.8M2175 560.3V563.1M2176 559.5V562.6M2177 560.2V562.8M2178 559.1V560.2M2178 561.7V563.4M2179 559.5V562.7M2180 559.8V563.6M2181 559.3V560.7M2181 562.9V563.5M2182 559.0V562.3M2183 559.4V562.7M2184 559.1V562.8M2185 559.2V562.9M2186 559.6V563.1M2187 560.2V563.3M2188 559.3V563.1M2189 559.9V562.4M2190 560.2V562.9M2191 559.6V562.8M2192 559.9V563.5M2193 559.0V563.5M2194 559.4V562.7M2195 559.7V563.4M2196 559.8V563.7M2197 559.3V562.8M2198 559.6V560.0M2198 561.7V563.8M2199 559.3V559.6M2199 560.7V563.8M2200 560.1V563.6M2201 559.8V563.5M2202 559.9V562.6M2203 559.4V560.7M2203 562.7V564.0M2204 560.4V564.0M2205 560.5V563.4M2206 560.6V563.4M2207 560.9V563.3M2208 559.8V560.4M2208 562.2V564.1M2209 559.7V564.3M2210 559.7V563.1M2211 559.7V560.2M2211 562.4V563.7M2212 560.3V564.0M2213 560.5V563.7M2214 559.7V560.3M2214 562.4V564.4M2215 560.9V563.6M2216 560.1V563.9M2217 559.8V564.2M2218 559.9V563.4M2219 560.8V563.5M2220 560.3V563.3M2221 560.6V563.7M2222 560.1V563.3M2223 560.3V563.1M2224 559.6V563.4M2225 559.2V562.7M2226 560.5V562.6M2227 559.2V563.2M2228 560.2V562.8M2229 559.6V562.6M2230 559.1V562.7M2231 559.1V563.1M2232 559.6V565.7M2233 559.0V562.3M2234 559.1V562.8M2235 559.6V560.2M2235 561.7V564.4M2236 559.2V562.8M2237 559.8V562.7M2238 559.0V563.6M2239 560.0V563.1M2240 559.0V562.7M2241 559.2V562.4M2242 559.2V562.6M2243 560.1V562.3M2244 559.1V562.8M2245 559.0V563.0M2246 559.9V562.8M2247 558.8V563.5M2248 559.1V562.9M2249 560.0V563.0M2250 560.2V563.3M2251 559.3V563.3M2252 559.9V562.4M2253 559.6V563.4M2254 559.7V563.5M2255 559.7V563.4M2256 560.0V562.3M2257 559.4V562.8M2258 559.2V563.1M2259 560.2V563.6M2260 560.3V563.3M2261 559.8V563.5M2262 559.5V561.0M2262 562.1V564.1M2263 560.8V563.5M2264 560.0V563.7M2265 560.5V563.8M2266 560.1V563.2M2267 559.5V562.8M2268 559.6V562.9M2269 560.2V564.0M2270 559.8V563.2M2271 559.8V563.8M2272 559.9V563.0M2273 559.6V563.3M2274 559.8V562.7M2275 560.1V562.8M2276 559.8V563.0M2277 559.4V563.8M2278 559.3V559.7M2278 562.2V563.6M2279 560.1V564.0M2280 559.9V563.3M2281 560.0V563.4M2282 559.5V563.2M2283 560.4V563.5M2284 559.8V563.5M2285 559.2V560.4M2285 562.0V563.8M2286 559.6V562.9M2287 560.5V563.2M2288 560.1V562.9M2289 559.8V561.1M2289 563.4V564.0M2290 559.7V563.1M2291 560.1V563.5M2292 559.7V563.9M2293 560.5V563.5M2294 560.1V563.1M2295 560.0V564.3M2296 560.4V563.8M2297 559.6V560.9M2297 562.6V563.7M2298 560.1V564.0M2299 560.5V563.4M2300 560.0V563.2M2301 560.2V564.1M2302 560.0V560.9M2302 563.1V564.6M2303 561.2V563.6M2304 560.5V563.8M2305 561.3V564.2M2306 561.0V563.6M2307 560.2V564.0M2308 561.1V563.3M2309 560.2V564.8M2310 560.4V560.9M2310 563.0V564.7M2311 560.2V560.9M2311 562.7V564.3M2312 560.5V564.5M2313 560.5V561.1M2313 563.2V564.7M2314 561.2V563.9M2315 561.0V563.3M2316 559.9V560.5M2316 562.4V564.0M2317 560.3V564.1M2318 560.7V563.5M2319 560.6V564.2M2320 560.5V563.4M2321 560.9V563.1M2322 560.5V564.6M2323 560.5V561.5M2323 562.8V565.3M2324 559.8V560.5M2324 563.0V564.0M2325 560.6V563.2M2326 560.7V563.9M2327 560.3V563.8M2328 559.6V564.0M2329 560.2V564.0M2330 559.9V563.9M2331 560.6V564.0M2332 559.8V563.7M2333 560.6V563.5M2334 560.8V563.6M2335 560.7V563.7M2336 560.0V563.9M2337 560.2V563.6M2338 559.7V563.5M2339 560.7V564.2M2340 559.9V563.5M2341 560.5V563.9M2342 560.4V563.9M2343 560.8V563.5M2344 560.4V563.2M2345 560.4V563.1M2346 560.7V562.8M2347 560.7V563.1M2348 560.7V563.2M2349 560.0V563.0M2350 560.6V563.8M2351 559.5V560.0M2351 561.1V563.9M2352 559.6V564.1M2353 560.8V563.8M2354 559.6V563.1M2355 560.2V563.4M2356 559.5V563.4M2357 559.5V563.1M2358 559.3V563.4M2359 560.7V563.9M2360 559.9V561.4M2360 562.9V564.1M2361 559.7V563.0M2362 559.6V560.5M2362 562.7V563.8M2363 560.5V563.0M2364 560.6V563.1M2365 560.2V564.3M2366 560.3V563.7M2367 559.7V563.3M2368 560.0V563.9M2369 560.5V563.1M2370 560.3V563.7M2371 560.5V564.2M2372 559.7V563.4M2373 559.6V563.6M2374 560.0V563.4M2375 559.9V561.2M2375 562.8V564.0M2376 560.5V563.8M2377 560.2V563.7M2378 560.2V563.8M2379 559.5V562.8M2380 559.5V562.7M2381 558.0V558.3M2381 560.7V563.1M2382 559.4V563.5M2383 560.4V563.1M2384 559.4V560.8M2384 562.9V563.6M2385 559.6V563.0M2386 559.5V563.2M2387 559.9V563.4M2388 559.7V561.0M2388 563.3V563.8M2389 560.3V561.5M2389 562.9V564.5M2390 559.8V564.0M2391 559.9V561.2M2391 562.8V564.4M2392 560.1V564.3M2393 561.0V563.7M2394 561.1V563.6M2395 560.6V564.2M2396 560.1V563.0M2397 559.8V563.7M2398 559.8V563.1M2399 560.3V561.3M2399 563.8V564.3M2400 560.4V563.5M2401 559.8V563.6M2402 560.4V563.5M2403 560.9V564.2M2404 560.2V560.5M2404 562.6V564.3M2405 559.5V564.2M2406 560.0V564.3M2407 560.5V563.1M2408 559.7V560.2M2408 561.8V563.8M2409 560.6V563.5M2410 561.0V564.1M2411 560.9V563.3M2412 559.9V563.7M2413 560.3V564.6M2414 560.0V560.5M2414 562.1V564.2M2415 560.1V564.2M2416 560.5V563.9M2417 561.0V563.6M2418 560.8V564.4M2419 560.1V561.3M2419 563.4V564.1M2420 559.8V560.4M2420 562.9V564.6M2421 560.4V564.2M2422 560.9V564.1M2423 560.1V564.0M2424 560.7V563.9M2425 560.6V564.8M2426 560.2V563.9M2427 561.3V564.6M2428 561.1V564.8M2429 560.4V564.7M2430 560.2V563.5M2431 561.6V565.0M2432 561.0V563.8M2433 561.2V562.5M2433 564.7V567.3M2434 561.5V564.1M2435 561.8V565.1M2436 560.4V561.2M2436 563.6V564.9M2437 561.3V564.2M2438 561.1V563.6M2439 560.3V564.3M2440 560.6V564.8M2441 561.3V564.5M2442 560.7V564.4M2443 560.4V565.1M2444 561.0V562.3M2444 563.9V565.0M2445 560.3V561.3M2445 562.9V564.8M2446 561.0V564.6M2447 560.6V560.8M2447 562.1V564.8M2448 561.7V564.6M2449 561.6V565.1M2450 561.2V564.7M2451 561.5V565.1M2452 560.7V563.8M2453 561.7V564.6M2454 560.8V564.4M2455 561.5V564.8M2456 560.6V564.8M2457 561.1V564.5M2458 560.7V564.1M2459 561.4V564.4M2460 560.9V563.9M2461 560.9V564.5M2462 561.6V564.3M2463 560.7V564.4M2464 561.2V564.8M2465 561.1V565.1M2466 560.2V560.9M2466 562.1V564.4M2467 560.3V563.9M2468 560.4V561.1M2468 562.7V564.5M2469 556.7V563.8M2470 560.3V561.6M2470 564.0V564.3M2471 560.2V560.6M2471 562.8V564.9M2472 560.5V564.3M2473 561.3V564.8M2474 560.1V560.5M2474 562.5V564.3M2475 560.5V563.5M2476 561.3V564.6M2477 561.0V564.5M2478 560.3V563.8M2479 560.5V560.8M2479 562.4V564.7M2480 560.5V561.6M2480 563.1V564.7M2481 560.2V564.1M2482 561.4V564.6M2483 560.8V563.9M2484 560.5V564.3M2485 560.7V564.3M2486 561.1V564.6M2487 561.7V563.7M2488 561.4V564.4M2489 560.9V564.5M2490 560.5V564.3M2491 560.8V564.1M2492 560.9V565.0M2493 561.7V564.6M2494 560.9V565.4M2495 561.6V564.0M2496 561.8V564.7M2497 561.1V564.3M2498 560.7V561.7M2498 563.5V564.8M2499 561.2V564.9M2500 560.8V565.2M2501 561.9V564.5M2502 560.7V564.0M2503 560.9V564.5M2504 561.6V564.7M2505 557.6V565.1M2506 560.9V564.9M2507 560.7V564.7M2508 560.4V565.1M2509 561.8V564.7M2510 561.1V563.9M2511 561.0V564.7M2512 561.8V564.7M2513 560.7V564.8M2514 560.5V565.0M2515 560.8V564.4M2516 560.8V564.1M2517 561.5V564.4M2518 560.8V565.1M2519 561.0V564.7M2520 561.3V564.6M2521 561.8V565.1M2522 560.7V561.4M2522 563.5V565.3M2523 561.1V565.0M2524 560.8V561.1M2524 562.6V565.1M2525 560.8V564.4M2526 562.3V564.7M2527 560.9V564.1M2528 561.4V564.4M2529 561.4V565.1M2530 562.1V565.1M2531 562.2V565.2M2532 561.4V565.2M2533 562.0V565.0M2534 561.6V565.2M2535 560.8V565.2M2536 561.9V564.1M2537 561.7V565.0M2538 560.8V564.2" stroke="#8c564b" stroke-width="1" fill="none" opacity="1"/><path d="M1751 651.3V652.2M1751 654.5V655.7M1752 651.0V652.3M1752 653.5V655.8M1753 650.7V651.1M1753 653.6V655.8M1754 651.6V654.7M1755 650.6V654.8M1756 651.1V651.7M1756 653.3V655.9M1757 652.2V655.5M1758 652.1V654.7M1759 652.2V654.4M1760 651.3V656.1M1761 651.4V655.7M1762 651.0V651.3M1762 652.3V655.9M1763 650.7V655.9M1764 651.3V654.7M1765 650.7V652.1M1765 653.7V655.1M1766 651.0V654.7M1767 651.3V652.9M1767 655.4V656.1M1768 651.9V655.5M1769 651.4V654.9M1770 650.7V656.1M1771 652.3V655.1M1772 651.7V655.9M1773 652.3V655.5M1774 650.9V656.0M1775 651.6V654.9M1776 651.7V655.9M1777 651.1V655.3M1778 650.8V652.4M1778 654.4V655.3M1779 652.0V655.9M1780 650.9V655.7M1781 646.8V649.4M1781 651.7V655.4M1782 651.0V652.2M1782 654.4V656.1M1783 651.2V655.8M1784 651.6V654.6M1785 650.8V655.8M1786 651.2V655.1M1787 650.5V651.0M1787 653.5V655.5M1788 650.8V654.6M1789 650.9V652.2M1789 654.3V655.2M1790 651.5V654.6M1791 650.9V651.4M1791 653.5V655.1M1792 652.0V654.9M1793 651.2V654.7M1794 651.7V654.4M1795 651.9V655.5M1796 650.6V656.0M1797 651.6V654.8M1798 651.4V654.6M1799 651.4V652.2M1799 653.2V656.1M1800 651.0V654.6M1801 651.9V655.1M1802 652.4V656.1M1803 651.8V655.4M1804 651.0V651.5M1804 653.2V655.8M1805 650.7V652.0M1805 653.1V654.8M1806 650.8V655.6M1807 651.0V652.1M1807 653.9V655.6M1808 651.1V655.3M1809 650.4V654.0M1810 651.2V654.6M1811 650.9V655.0M1812 650.5V651.6M1812 653.0V655.2M1813 650.8V654.5M1814 650.5V655.6M1815 651.9V655.0M1816 651.0V654.7M1817 650.6V651.7M1817 653.6V656.0M1818 651.5V654.9M1819 651.2V651.6M1819 653.1V655.5M1820 652.0V654.9M1821 651.5V655.8M1822 651.0V654.6M1823 650.6V651.7M1823 653.1V655.8M1824 650.6V654.8M1825 651.0V651.8M1825 653.1V655.3M1826 651.4V654.7M1827 650.1V655.5M1828 650.9V655.1M1829 650.2V655.4M1830 650.7V654.8M1831 650.4V655.2M1832 648.7V650.4M1832 652.5V654.7M1833 650.1V654.8M1834 650.6V654.6M1835 650.7V655.5M1836 650.6V654.9M1837 651.5V654.6M1838 651.1V654.7M1839 650.6V655.7M1840 651.4V655.3M1841 651.1V654.8M1842 650.7V651.1M1842 653.2V655.5M1843 650.2V651.3M1843 653.5V655.5M1844 650.4V654.3M1845 650.5V655.6M1846 651.9V655.4M1847 651.8V654.3M1848 651.4V655.2M1849 651.0V652.2M1849 653.4V655.6M1850 652.1V655.6M1851 649.8V650.4M1851 652.2V655.9M1852 650.4V654.6M1853 650.9V652.6M1853 655.0V656.0M1854 651.0V655.6M1855 651.7V655.8M1856 651.6V655.3M1857 650.7V654.6M1858 647.5V648.8M1858 650.8V654.4M1859 650.6V655.8M1860 651.1V651.4M1860 653.6V655.1M1861 651.7V652.4M1861 654.2V655.8M1862 651.1V654.7M1863 651.7V655.0M1864 651.0V655.2M1865 650.7V651.7M1865 653.3V655.6M1866 651.1V655.0M1867 648.7V649.2M1867 650.4V655.2M1868 646.7V647.8M1868 650.2V655.5M1869 650.9V655.9M1870 651.2V654.6M1871 651.5V655.4M1872 651.0V654.4M1873 651.1V655.5M1874 651.9V655.7M1875 651.3V655.7M1876 650.3V651.0M1876 652.9V655.3M1877 650.3V655.7M1878 650.6V650.9M1878 652.9V654.8M1879 651.0V651.3M1879 652.4V656.1M1880 651.4V655.4M1881 647.1V655.3M1882 651.9V652.5M1882 654.0V656.2M1883 652.2V654.9M1884 650.9V655.2M1885 651.3V655.1M1886 651.4V655.8M1887 651.7V655.1M1888 651.6V656.4M1889 651.3V651.5M1889 653.0V655.9M1890 652.0V655.8M1891 652.9V656.8M1892 652.5V655.6M1893 651.7V656.5M1894 652.6V656.2M1895 652.5V656.0M1896 648.9V650.8M1896 653.1V656.6M1897 652.4V653.6M1897 655.2V656.7M1898 651.5V656.8M1899 651.7V652.7M1899 654.4V656.2M1900 651.2V656.6M1901 652.2V652.9M1901 655.2V656.3M1902 651.3V652.7M1902 654.3V656.6M1903 652.4V656.5M1904 651.8V653.2M1904 654.4V655.9M1905 651.8V655.8M1906 652.3V655.3M1907 651.4V655.4M1908 652.5V655.6M1909 651.1V651.7M1909 653.7V656.0M1910 651.6V655.1M1911 649.7V656.1M1912 652.4V655.6M1913 651.7V656.7M1914 651.6V652.7M1914 654.3V656.4M1915 652.9V656.0M1916 652.0V656.9M1917 651.7V653.0M1917 655.2V656.4M1918 652.3V655.6M1919 651.8V656.2M1920 652.3V652.7M1920 654.8V656.6M1921 651.1V651.5M1921 654.0V655.4M1922 652.6V656.0M1923 651.5V652.8M1923 654.5V655.7M1924 651.1V651.7M1924 653.0V655.7M1925 651.3V652.7M1925 654.8V655.6M1926 651.2V655.2M1927 650.9V656.4M1928 652.3V656.6M1929 652.6V653.4M1929 655.8V656.6M1930 651.2V655.1M1931 652.4V656.2M1932 652.2V656.1M1933 651.4V655.2M1934 651.5V655.3M1935 651.3V654.9M1936 651.9V655.5M1937 651.3V656.6M1938 651.9V656.9M1939 651.9V655.7M1940 651.7V652.8M1940 654.9V657.0M1941 652.3V655.6M1942 651.9V656.3M1943 651.5V656.4M1944 652.9V656.7M1945 651.6V656.3M1946 652.3V655.6M1947 651.5V656.5M1948 652.0V656.3M1949 651.7V655.8M1950 652.4V655.1M1951 652.6V656.6M1952 652.8V655.4M1953 651.3V656.5M1954 651.6V652.1M1954 654.5V655.9M1955 652.5V656.2M1956 652.7V656.4M1957 652.8V656.6M1958 651.3V651.5M1958 652.8V655.4M1959 651.1V656.1M1960 651.7V655.8M1961 651.4V655.3M1962 651.7V652.8M1962 654.7V656.5M1963 652.9V656.5M1964 652.4V652.8M1964 655.0V656.8M1965 652.7V656.6M1966 652.3V653.0M1966 655.3V656.9M1967 652.4V653.5M1967 654.9V656.7M1968 652.0V655.8M1969 651.9V657.0M1970 651.6V655.9M1971 652.4V656.0M1972 653.1V656.1M1973 651.3V652.4M1973 654.6V656.7M1974 652.1V655.6M1975 651.7V655.7M1976 651.4V656.8M1977 651.7V655.6M1978 652.1V653.2M1978 655.6V656.5M1979 651.2V652.8M1979 654.5V655.7M1980 651.4V652.8M1980 654.9V655.6M1981 651.3V654.9M1982 652.1V655.7M1983 651.6V654.5M1984 651.6V654.6M1985 650.4V654.8M1986 650.6V651.2M1986 652.4V655.0M1987 649.3V655.5M1988 651.3V652.5M1988 654.4V655.3M1989 651.0V654.8M1990 651.2V654.9M1991 650.8V652.4M1991 654.2V655.6M1992 650.8V652.4M1992 654.3V656.0M1993 651.3V652.9M1993 654.9V655.9M1994 651.1V652.7M1994 653.8V656.0M1995 651.4V656.2M1996 651.4V656.4M1997 652.5V655.3M1998 652.3V655.2M1999 652.5V656.0M2000 651.8V655.6M2001 651.9V655.7M2002 650.9V652.1M2002 654.0V655.1M2003 651.2V656.3M2004 652.1V654.8M2005 651.4V656.5M2006 652.1V653.2M2006 655.3V656.3M2007 652.4V655.4M2008 652.0V656.1M2009 652.3V655.5M2010 652.3V655.6M2011 651.9V652.1M2011 654.3V656.5M2012 650.8V651.5M2012 653.7V656.3M2013 651.4V652.1M2013 654.5V656.2M2014 651.6V655.2M2015 651.2V652.2M2015 654.7V655.8M2016 650.8V651.6M2016 653.6V655.5M2017 651.5V655.0M2018 651.2V655.7M2019 651.6V652.5M2019 654.8V656.1M2020 651.6V655.9M2021 651.8V655.7M2022 651.9V656.6M2023 651.6V652.9M2023 655.4V656.4M2024 652.6V655.6M2025 651.4V656.2M2026 652.0V656.0M2027 651.6V652.5M2027 654.4V655.7M2028 652.6V656.4M2029 652.6V656.5M2030 651.8V652.4M2030 653.9V656.1M2031 652.0V655.5M2032 651.6V652.0M2032 654.1V656.9M2033 651.6V652.7M2033 654.2V655.6M2034 652.7V656.5M2035 652.1V655.6M2036 652.3V655.9M2037 651.5V655.6M2038 652.6V655.4M2039 648.7V656.5M2040 650.9V656.3M2041 651.6V652.0M2041 654.0V656.5M2042 652.8V655.8M2043 652.5V656.7M2044 651.6V652.7M2044 654.0V655.6M2045 651.6V655.4M2046 651.8V656.1M2047 652.1V655.6M2048 651.4V652.7M2048 654.7V655.4M2049 651.7V652.1M2049 653.5V656.2M2050 652.5V653.3M2050 654.8V656.5M2051 652.1V655.9M2052 651.7V655.1M2053 652.3V655.7M2054 651.5V652.1M2054 653.1V656.6M2055 652.1V655.8M2056 651.9V656.8M2057 652.9V655.6M2058 651.4V655.9M2059 651.4V656.4M2060 652.4V655.5M2061 652.4V656.1M2062 652.3V655.8M2063 651.6V652.2M2063 653.3V656.5M2064 652.1V652.4M2064 654.7V656.6M2065 652.5V655.6M2066 652.3V656.2M2067 651.7V652.6M2067 654.7V657.1M2068 653.3V656.9M2069 652.3V656.8M2070 652.2V657.0M2071 653.0V655.9M2072 652.9V656.4M2073 652.3V653.0M2073 654.6V656.5M2074 651.4V651.8M2074 653.0V656.9M2075 651.8V656.1M2076 647.6V656.6M2077 652.1V656.0M2078 652.1V655.7M2079 652.6V656.4M2080 652.7V656.6M2081 651.8V655.0M2082 652.3V655.7M2083 651.3V655.1M2084 652.9V656.3M2085 648.3V655.8M2086 651.7V655.6M2087 651.7V655.3M2088 652.4V656.1M2089 651.2V656.2M2090 651.4V652.2M2090 653.9V655.5M2091 651.7V652.8M2091 653.8V656.2M2092 651.5V655.2M2093 651.8V655.4M2094 652.2V656.3M2095 650.7V655.6M2096 652.1V656.3M2097 651.7V655.2M2098 652.2V656.1M2099 652.1V653.5M2099 654.6V656.7M2100 651.6V656.3M2101 652.6V656.5M2102 652.3V656.9M2103 652.3V653.7M2103 655.6V656.8M2104 652.3V653.3M2104 655.0V656.9M2105 651.7V656.7M2106 652.4V656.2M2107 651.6V653.0M2107 654.6V655.9M2108 652.9V656.4M2109 652.3V655.5M2110 651.9V652.7M2110 655.0V656.4M2111 652.3V653.3M2111 655.1V656.4M2112 652.1V653.5M2112 655.3V656.3M2113 652.6V656.2M2114 652.5V655.8M2115 652.4V653.1M2115 655.1V657.1M2116 652.5V656.7M2117 652.4V655.9M2118 652.3V655.7M2119 652.5V655.6M2120 651.7V655.8M2121 652.1V656.4M2122 651.8V652.6M2122 654.9V656.5M2123 652.1V652.5M2123 654.6V656.8M2124 651.8V655.7M2125 653.2V656.8M2126 652.1V656.5M2127 651.9V656.0M2128 652.2V655.9M2129 652.2V653.3M2129 654.8V656.3M2130 652.4V656.3M2131 652.0V653.5M2131 655.0V656.8M2132 652.2V656.1M2133 652.8V656.5M2134 652.7V657.4M2135 651.9V653.0M2135 654.7V656.8M2136 652.3V657.2M2137 652.0V656.2M2138 653.0V656.7M2139 653.5V656.5M2140 652.2V656.0M2141 652.6V654.2M2141 655.3V657.2M2142 653.8V656.4M2143 652.9V657.5M2144 652.4V657.3M2145 652.8V656.0M2146 652.3V656.3M2147 652.6V653.4M2147 655.1V657.4M2148 649.1V649.7M2148 652.0V657.6M2149 653.4V656.9M2150 652.5V653.2M2150 654.7V657.1M2151 652.4V655.9M2152 653.5V657.1M2153 653.4V657.0M2154 652.5V653.9M2154 655.0V657.3M2155 653.4V657.3M2156 653.0V653.4M2156 655.8V657.4M2157 652.1V656.9M2158 652.7V653.1M2158 655.3V657.0M2159 653.0V654.2M2159 655.8V657.1M2160 652.7V656.4M2161 652.6V655.8M2162 652.7V657.1M2163 652.1V652.7M2163 655.0V656.5M2164 652.4V653.5M2164 655.0V657.4M2165 652.7V657.4M2166 652.9V656.2M2167 652.2V656.2M2168 652.9V656.9M2169 652.6V656.6M2170 652.0V656.0M2171 652.7V656.6M2172 652.3V656.5M2173 652.9V656.5M2174 653.0V657.2M2175 652.5V653.7M2175 655.1V656.9M2176 653.3V656.7M2177 653.0V657.2M2178 652.0V657.1M2179 652.3V653.5M2179 655.4V656.9M2180 651.8V652.2M2180 653.3V656.9M2181 652.1V652.6M2181 655.1V656.7M2182 652.5V656.8M2183 651.9V656.5M2184 651.7V655.8M2185 652.4V655.9M2186 653.4V655.7M2187 652.3V657.2M2188 651.6V657.0M2189 652.1V655.3M2190 652.4V656.8M2191 652.9V656.3M2192 652.5V656.7M2193 652.3V653.7M2193 656.1V657.1M2194 652.7V656.2M2195 651.8V653.1M2195 654.8V655.9M2196 652.0V653.0M2196 654.9V656.5M2197 652.6V656.9M2198 651.8V655.4M2199 651.0V656.4M2200 651.5V656.5M2201 651.4V656.4M2202 651.9V656.1M2203 652.7V655.3M2204 652.5V656.1M2205 653.0V656.1M2206 652.0V656.8M2207 652.1V656.8M2208 653.5V656.6M2209 652.9V654.3M2209 656.8V657.0M2210 653.2V656.0M2211 652.4V653.3M2211 655.3V657.2M2212 652.8V656.7M2213 652.6V656.2M2214 650.3V651.9M2214 654.0V656.4M2215 651.8V656.2M2216 651.9V657.2M2217 652.7V657.1M2218 653.1V656.0M2219 652.7V656.9M2220 653.3V657.2M2221 653.0V656.2M2222 652.6V655.6M2223 653.5V656.9M2224 652.2V653.8M2224 656.1V657.2M2225 652.1V656.8M2226 651.9V657.1M2227 652.8V654.2M2227 655.4V657.0M2228 652.3V655.9M2229 653.2V656.5M2230 653.0V656.1M2231 652.8V656.5M2232 652.0V653.6M2232 655.3V656.8M2233 652.2V657.1M2234 652.5V657.0M2235 653.2V656.0M2236 652.1V653.5M2236 655.6V656.1M2237 651.8V652.2M2237 654.5V656.3M2238 652.4V656.7M2239 652.8V653.6M2239 655.7V657.2M2240 653.1V656.7M2241 651.9V652.8M2241 654.2V656.7M2242 652.3V656.0M2243 652.6V657.2M2244 653.5V657.4M2245 651.9V653.5M2245 655.3V656.6M2246 652.0V653.4M2246 654.7V657.1M2247 652.3V655.9M2248 651.9V652.9M2248 654.4V657.4M2249 653.0V657.1M2250 651.9V656.8M2251 652.3V656.6M2252 652.0V656.1M2253 652.8V653.8M2253 655.3V656.9M2254 653.4V657.2M2255 652.3V656.5M2256 652.5V657.6M2257 652.1V657.0M2258 653.3V656.7M2259 652.7V654.2M2259 656.0V657.3M2260 653.2V657.0M2261 652.4V657.2M2262 653.0V653.4M2262 654.9V657.4M2263 652.6V657.2M2264 651.8V657.7M2265 653.8V657.6M2266 652.6V657.8M2267 652.9V657.7M2268 648.5V649.7M2268 651.4V657.0M2269 652.6V656.5M2270 652.7V657.6M2271 652.7V656.8M2272 653.5V656.8M2273 652.7V656.0M2274 652.5V653.3M2274 655.1V656.6M2275 652.0V653.3M2275 654.9V656.6M2276 653.1V656.9M2277 652.8V656.0M2278 651.7V656.3M2279 653.3V655.7M2280 652.6V657.2M2281 653.2V657.2M2282 652.5V656.4M2283 652.6V656.3M2284 651.9V655.8M2285 652.7V658.7M2286 653.1V656.9M2287 652.5V656.2M2288 652.0V652.5M2288 654.9V657.2M2289 653.0V656.5M2290 652.3V653.5M2290 655.1V656.9M2291 652.4V653.9M2291 655.9V657.3M2292 652.7V656.6M2293 653.0V657.5M2294 652.4V656.0M2295 653.9V657.7M2296 653.5V656.6M2297 653.4V656.9M2298 652.7V657.1M2299 652.6V657.6M2300 652.3V652.6M2300 653.6V656.5M2301 652.4V655.9M2302 652.3V653.8M2302 656.0V656.9M2303 652.6V656.2M2304 652.2V652.6M2304 654.0V656.7M2305 653.1V657.0M2306 653.0V656.6M2307 652.2V659.6M2308 652.3V656.1M2309 651.8V655.9M2310 652.9V657.4M2311 653.2V656.3M2312 652.4V653.8M2312 655.1V657.2M2313 653.3V657.0M2314 653.2V656.2M2315 652.3V657.6M2316 652.7V653.8M2316 655.9V657.3M2317 652.3V657.4M2318 652.4V656.5M2319 653.0V657.5M2320 653.1V657.0M2321 652.7V653.0M2321 655.0V656.9M2322 652.6V657.2M2323 652.8V656.3M2324 652.9V653.2M2324 655.3V657.2M2325 652.6V657.2M2326 653.8V656.8M2327 653.2V657.0M2328 652.8V657.7M2329 653.4V657.5M2330 653.5V654.9M2330 656.9V657.9M2331 653.8V657.6M2332 654.0V657.5M2333 653.1V656.7M2334 653.7V656.7M2335 653.2V656.9M2336 652.8V656.1M2337 654.1V657.3M2338 652.4V657.5M2339 653.4V657.7M2340 652.5V653.8M2340 655.6V656.9M2341 653.4V656.0M2342 653.8V657.8M2343 653.2V656.9M2344 654.1V657.9M2345 653.4V657.2M2346 652.5V652.9M2346 655.2V657.8M2347 653.8V657.9M2348 653.3V656.4M2349 652.5V653.2M2349 655.3V657.1M2350 654.0V656.8M2351 653.3V657.3M2352 652.3V653.9M2352 655.8V657.5M2353 652.6V655.0M2353 656.8V660.0M2354 654.0V657.3M2355 652.4V653.0M2355 655.1V657.2M2356 652.3V653.4M2356 655.4V657.3M2357 652.4V653.1M2357 655.0V657.0M2358 654.0V657.5M2359 653.3V657.0M2360 652.6V657.7M2361 653.9V657.4M2362 653.4V657.6M2363 652.8V657.5M2364 653.0V656.9M2365 652.9V654.2M2365 656.6V657.5M2366 653.0V656.6M2367 652.7V653.9M2367 655.6V657.9M2368 654.4V656.8M2369 653.4V654.9M2369 656.4V657.7M2370 654.3V657.1M2371 653.5V657.3M2372 654.4V657.6M2373 654.2V657.9M2374 653.0V658.3M2375 653.4V654.5M2375 655.9V658.4M2376 652.6V653.0M2376 654.9V657.9M2377 654.0V657.6M2378 651.0V658.4M2379 653.4V658.3M2380 654.6V657.2M2381 653.3V657.4M2382 653.8V658.3M2383 654.2V657.8M2384 654.1V657.2M2385 654.3V658.3M2386 653.5V654.4M2386 656.6V658.4M2387 653.7V658.3M2388 654.2V658.7M2389 653.5V654.9M2389 655.9V658.2M2390 654.4V658.4M2391 653.3V654.4M2391 656.6V658.8M2392 653.4V654.7M2392 656.9V658.4M2393 653.6V655.0M2393 657.4V658.6M2394 653.4V654.0M2394 655.0V658.3M2395 654.9V658.1M2396 654.8V657.5M2397 653.6V657.5M2398 653.8V654.6M2398 655.7V658.4M2399 654.7V660.8M2400 654.1V658.1M2401 654.1V657.8M2402 653.2V654.6M2402 656.2V657.4M2403 654.4V657.7M2404 653.5V658.7M2405 653.7V657.5M2406 653.0V658.1M2407 653.7V654.4M2407 656.3V657.8M2408 654.0V657.1M2409 653.5V657.3M2410 653.0V657.5M2411 654.1V658.5M2412 651.6V652.6M2412 654.2V658.4M2413 653.8V658.6M2414 653.3V657.7M2415 653.9V657.7M2416 653.9V657.8M2417 654.9V658.1M2418 654.4V658.1M2419 654.1V658.6M2420 653.9V657.8M2421 653.9V658.2M2422 653.8V657.2M2423 654.0V657.4M2424 653.3V657.9M2425 653.0V653.5M2425 655.9V657.8M2426 652.9V654.1M2426 655.7V658.1M2427 653.9V657.6M2428 653.4V657.0M2429 653.5V656.7M2430 649.7V651.7M2430 652.8V658.2M2431 654.2V657.6M2432 653.0V657.8M2433 653.5V656.9M2434 653.5V657.4M2435 653.7V658.7M2436 654.0V657.8M2437 653.8V654.1M2437 656.4V658.4M2438 653.3V655.1M2438 656.6V658.5M2439 654.6V657.1M2440 653.2V654.4M2440 656.5V657.2M2441 653.3V659.8M2442 654.4V657.5M2443 653.2V654.1M2443 655.9V658.1M2444 654.5V657.5M2445 653.3V657.2M2446 653.6V658.2M2447 653.7V657.8M2448 654.0V655.3M2448 656.4V658.2M2449 653.7V656.9M2450 653.6V654.8M2450 657.1V657.8M2451 654.4V658.0M2452 654.5V657.3M2453 653.1V658.1M2454 653.3V654.0M2454 655.6V657.7M2455 654.0V658.2M2456 648.2V656.7M2457 653.8V657.8M2458 653.6V660.1M2459 654.1V657.1M2460 654.5V657.3M2461 654.1V658.0M2462 653.6V657.2M2463 653.8V657.3M2464 653.8V657.0M2465 653.5V657.2M2466 654.1V657.8M2467 653.0V658.1M2468 653.6V656.7M2469 652.6V653.1M2469 654.1V657.5M2470 652.6V653.4M2470 654.7V657.5M2471 653.3V656.7M2472 652.5V656.6M2473 653.8V657.0M2474 648.8V651.2M2474 653.5V657.2M2475 653.2V654.5M2475 656.9V657.2M2476 653.8V654.5M2476 655.9V659.8M2477 653.0V654.0M2477 655.8V657.7M2478 652.9V654.3M2478 655.9V657.6M2479 653.8V657.3M2480 652.2V656.1M2481 652.8V657.5M2482 653.6V654.5M2482 656.8V657.7M2483 652.5V653.0M2483 654.6V657.5M2484 653.1V657.0M2485 651.9V656.6M2486 653.2V655.0M2486 656.0V659.0M2487 653.5V657.5M2488 653.9V654.9M2488 657.0V659.5M2489 653.6V657.9M2490 652.9V653.3M2490 654.6V657.3M2491 653.1V656.9M2492 653.4V656.9M2493 652.9V653.8M2493 655.1V658.1M2494 653.5V657.0M2495 653.2V658.1M2496 653.3V654.6M2496 655.9V658.3M2497 653.8V658.1M2498 654.1V657.9M2499 653.5V654.0M2499 655.8V657.5M2500 654.0V657.7M2501 653.2V654.2M2501 655.2V657.7M2502 653.8V657.7M2503 654.5V658.0M2504 653.9V658.3M2505 653.6V654.0M2505 656.2V658.4M2506 653.5V654.6M2506 655.9V658.0M2507 654.1V657.8M2508 653.2V658.0M2509 653.6V654.1M2509 656.3V657.7M2510 648.6V650.0M2510 651.8V658.6M2511 654.7V658.6M2512 653.2V653.6M2512 654.9V658.2M2513 654.0V654.6M2513 656.1V658.2M2514 653.1V654.5M2514 656.7V658.4M2515 653.5V657.9M2516 654.7V657.5M2517 654.4V658.3M2518 653.6V655.2M2518 657.2V658.5M2519 654.0V657.8M2520 654.3V658.2M2521 654.0V657.2M2522 653.9V654.4M2522 656.0V658.8M2523 653.8V657.5M2524 654.4V658.2M2525 653.6V657.5M2526 654.1V658.8M2527 653.7V657.5M2528 650.0V652.0M2528 653.6V658.5M2529 654.2V657.4M2530 649.5V658.2M2531 653.6V655.0M2531 656.7V658.1M2532 654.3V657.5M2533 653.3V657.0M2534 653.5V654.9M2534 656.8V658.5M2535 654.5V654.9M2535 656.1V658.6M2536 653.8V658.4M2537 653.2V657.5M2538 653.7V654.6M2538 655.7V658.0" stroke="#9467bd" stroke-width="1" fill="none" opacity="1"/><path d="M67 1292.5H80.5V1165" stroke="#e377c2" stroke-width="1" fill="none"/><path d="M80.5 1130V1165" stroke="#7f7f7f" stroke-width="1" stroke-dasharray="3 2"/><path d="M81 1158.3V1162.8M82 1158.4V1163.1M83 1159.4V1162.5M84 1158.8V1162.6M85 1159.2V1160.9M85 1162.9V1164.4M86 1159.2V1163.5M87 1159.9V1161.1M87 1162.8V1164.6M88 1161.3V1164.5M89 1161.3V1161.7M89 1162.7V1166.5M90 1161.3V1167.0M91 1161.8V1166.9M92 1161.5V1166.2M93 1161.4V1162.9M93 1164.4V1166.2M94 1161.5V1166.4M95 1163.1V1166.0M96 1162.0V1166.0M97 1162.3V1167.3M98 1158.8V1167.6M99 1163.1V1167.3M100 1162.2V1166.6M101 1161.8V1163.0M101 1164.4V1167.0M102 1161.9V1167.2M103 1162.4V1165.9M104 1163.3V1164.5M104 1165.7V1167.4M105 1162.6V1166.2M106 1162.2V1166.1M107 1163.3V1167.2M108 1162.1V1166.8M109 1162.7V1166.6M110 1162.1V1163.6M110 1166.1V1166.9M111 1162.2V1163.6M111 1164.9V1166.9M112 1162.4V1165.4M113 1162.3V1166.8M114 1161.3V1167.0M115 1162.5V1167.0M116 1161.8V1162.9M116 1165.2V1165.8M117 1161.4V1162.0M117 1164.3V1166.3M118 1162.4V1165.7M119 1161.5V1165.3M120 1162.1V1162.6M120 1164.1V1167.1M121 1162.0V1165.5M122 1161.7V1162.1M122 1164.5V1167.1M123 1161.8V1167.1M124 1163.0V1163.6M124 1164.6V1167.1M125 1162.7V1167.0M126 1161.9V1166.2M127 1161.8V1166.6M128 1162.2V1165.8M129 1162.7V1166.8M130 1161.3V1161.6M130 1163.3V1165.9M131 1161.5V1167.1M132 1162.4V1167.4M133 1162.2V1163.1M133 1164.8V1166.7M134 1162.3V1166.5M135 1162.2V1166.2M136 1161.6V1162.4M136 1163.8V1167.2M137 1161.4V1166.6M138 1161.9V1166.8M139 1162.3V1163.0M139 1164.4V1166.5M140 1162.3V1167.2M141 1162.4V1166.6M142 1162.7V1164.0M142 1165.6V1166.9M143 1162.2V1166.7M144 1162.4V1163.6M144 1164.7V1166.7M145 1162.0V1162.8M145 1164.5V1167.2M146 1162.5V1166.3M147 1162.3V1162.5M147 1164.6V1166.5M148 1161.8V1162.9M148 1164.0V1166.9M149 1161.8V1166.8M150 1161.4V1167.3M151 1163.2V1165.6M152 1161.8V1166.5M153 1162.7V1163.6M153 1166.1V1166.7M154 1162.7V1166.9M155 1162.2V1167.4M156 1161.9V1167.4M157 1162.6V1166.2M158 1163.1V1167.4M159 1162.3V1167.4M160 1162.0V1166.6M161 1162.3V1167.1M162 1161.8V1163.1M162 1164.1V1167.4M163 1162.6V1166.9M164 1161.8V1167.2M165 1161.9V1163.4M165 1165.6V1167.4M166 1162.0V1166.5M167 1162.1V1163.5M167 1165.6V1166.4M168 1161.8V1162.0M168 1163.9V1166.8M169 1162.3V1162.7M169 1163.9V1166.7M170 1161.3V1162.8M170 1164.5V1167.1M171 1162.9V1166.2M172 1162.2V1163.4M172 1165.3V1166.8M173 1162.6V1166.5M174 1161.5V1161.9M174 1162.9V1166.7M175 1162.1V1166.7M176 1162.6V1163.7M176 1165.8V1167.0M177 1160.9V1166.8M178 1161.9V1165.9M179 1161.6V1162.9M179 1165.1V1165.9M180 1162.6V1166.8M181 1161.9V1166.3M182 1158.3V1165.7M183 1162.3V1163.6M183 1164.6V1166.3M184 1162.5V1163.5M184 1165.8V1166.9M185 1161.3V1162.0M185 1163.4V1165.8M186 1161.9V1162.6M186 1165.0V1166.8M187 1162.5V1165.7M188 1161.1V1161.8M188 1164.0V1166.3M189 1161.2V1166.7M190 1162.4V1165.9M191 1162.2V1162.8M191 1164.1V1166.6M192 1161.3V1161.7M192 1163.9V1166.1M193 1162.0V1162.8M193 1164.4V1166.2M194 1162.1V1163.3M194 1164.8V1166.8M195 1161.9V1165.8M196 1161.0V1165.2M197 1162.7V1166.1M198 1161.5V1163.0M198 1164.8V1166.7M199 1162.2V1163.3M199 1165.5V1166.3M200 1162.8V1166.7M201 1162.0V1166.1M202 1161.9V1165.6M203 1162.9V1165.7M204 1163.0V1166.1M205 1161.6V1166.7M206 1162.3V1166.1M207 1161.2V1161.5M207 1163.6V1166.7M208 1162.6V1166.7M209 1161.4V1161.9M209 1163.3V1165.7M210 1161.6V1165.4M211 1161.6V1165.6M212 1161.6V1165.5M213 1160.9V1166.4M214 1161.7V1165.5M215 1160.5V1164.7M216 1161.8V1166.1M217 1160.6V1161.5M217 1163.8V1165.6M218 1160.6V1161.1M218 1162.5V1166.3M219 1162.3V1165.4M220 1161.2V1165.7M221 1161.5V1165.9M222 1161.6V1165.8M223 1161.2V1162.5M223 1164.2V1165.2M224 1161.6V1165.5M225 1162.6V1165.8M226 1162.0V1165.7M227 1161.3V1161.8M227 1164.0V1165.5M228 1161.1V1166.0M229 1161.4V1166.6M230 1161.9V1165.4M231 1161.5V1162.9M231 1164.6V1166.8M232 1161.6V1167.6M233 1162.6V1166.7M234 1162.2V1165.4M235 1161.6V1166.2M236 1161.5V1162.4M236 1163.6V1166.3M237 1161.5V1165.5M238 1161.3V1165.4M239 1160.9V1166.3M240 1160.8V1162.4M240 1164.5V1166.5M241 1161.1V1164.8M242 1162.3V1166.0M243 1162.5V1166.5M244 1162.1V1162.5M244 1164.9V1166.1M245 1161.4V1162.3M245 1164.6V1166.0M246 1162.4V1166.5M247 1160.7V1161.3M247 1162.8V1166.0M248 1161.4V1166.4M249 1161.8V1163.0M249 1165.2V1166.2M250 1161.3V1162.4M250 1164.7V1166.3M251 1161.8V1166.4M252 1161.5V1166.1M253 1162.0V1166.0M254 1161.7V1165.1M255 1161.8V1166.0M256 1162.7V1166.2M257 1161.7V1163.2M257 1165.4V1166.7M258 1161.3V1165.6M259 1161.9V1166.5M260 1162.4V1165.6M261 1162.0V1165.2M262 1162.2V1166.6M263 1161.8V1162.8M263 1164.6V1166.5M264 1161.2V1166.5M265 1161.5V1165.2M266 1162.0V1167.1M267 1162.5V1166.3M268 1162.3V1166.4M269 1162.5V1165.2M270 1161.4V1163.0M270 1164.2V1166.1M271 1161.6V1166.2M272 1161.4V1162.9M272 1165.3V1166.3M273 1162.2V1165.5M274 1162.4V1165.8M275 1162.4V1165.7M276 1161.0V1161.8M276 1162.8V1165.7M277 1162.4V1166.3M278 1161.2V1162.7M278 1164.4V1166.1M279 1161.5V1167.4M280 1161.2V1161.9M280 1163.4V1165.3M281 1161.8V1162.9M281 1164.3V1166.3M282 1160.9V1161.7M282 1163.3V1165.6M283 1161.6V1166.4M284 1161.8V1165.2M285 1162.5V1165.7M286 1162.0V1163.0M286 1164.4V1166.3M287 1160.1V1165.6M288 1161.6V1166.7M289 1162.4V1166.4M290 1161.1V1162.5M290 1164.1V1166.6M291 1161.9V1165.8M292 1161.6V1166.0M293 1162.1V1166.6M294 1161.2V1161.6M294 1162.7V1167.6M295 1161.9V1166.9M296 1161.4V1161.9M296 1163.8V1166.0M297 1161.1V1165.4M298 1162.9V1165.5M299 1163.0V1166.3M300 1162.2V1163.7M300 1165.5V1167.1M301 1161.5V1166.0M302 1161.3V1162.0M302 1163.4V1166.6M303 1161.8V1162.3M303 1164.8V1166.7M304 1162.4V1162.7M304 1163.9V1167.2M305 1161.8V1166.3M306 1162.5V1163.3M306 1164.5V1166.5M307 1162.4V1165.4M308 1162.0V1166.5M309 1161.5V1166.4M310 1162.4V1166.4M311 1162.0V1166.9M312 1162.3V1166.2M313 1162.4V1167.0M314 1161.8V1165.6M315 1162.0V1167.0M316 1161.4V1163.2M316 1165.0V1166.7M317 1162.0V1167.0M318 1162.3V1162.9M318 1164.9V1167.2M319 1163.1V1166.4M320 1161.5V1162.2M320 1163.4V1165.6M321 1162.6V1165.7M322 1161.5V1166.6M323 1162.7V1163.0M323 1165.1V1166.9M324 1162.4V1166.5M325 1162.0V1165.7M326 1161.7V1162.9M326 1164.7V1166.3M327 1162.3V1167.1M328 1162.0V1162.7M328 1164.6V1167.2M329 1161.3V1167.1M330 1161.3V1162.4M330 1163.8V1166.4M331 1162.0V1166.2M332 1160.9V1166.4M333 1162.2V1162.5M333 1164.6V1166.3M334 1161.2V1165.1M335 1161.2V1162.9M335 1164.3V1166.1M336 1162.6V1166.5M337 1162.3V1165.9M338 1161.3V1165.3M339 1160.9V1166.3M340 1161.9V1165.9M341 1162.5V1166.4M342 1161.7V1165.2M343 1161.5V1162.2M343 1164.5V1166.5M344 1161.4V1166.5M345 1162.2V1163.5M345 1165.2V1166.5M346 1161.5V1165.1M347 1162.4V1166.5M348 1161.3V1162.7M348 1164.8V1165.6M349 1162.3V1166.9M350 1162.5V1162.7M350 1164.1V1167.1M351 1161.5V1167.1M352 1161.3V1166.5M353 1162.1V1167.3M354 1163.0V1163.3M354 1165.4V1167.2M355 1162.9V1167.0M356 1161.4V1166.1M357 1161.4V1162.6M357 1164.3V1167.2M358 1162.8V1167.2M359 1161.6V1166.3M360 1163.0V1165.9M361 1162.0V1167.1M362 1162.9V1166.7M363 1161.9V1162.7M363 1164.4V1166.3M364 1161.5V1162.1M364 1163.2V1166.8M365 1162.6V1165.5M366 1162.7V1165.7M367 1163.4V1169.6M368 1161.6V1166.3M369 1163.0V1166.8M370 1162.3V1166.5M371 1159.9V1161.7M371 1163.3V1166.3M372 1162.2V1163.2M372 1165.2V1166.8M373 1163.0V1164.6M373 1166.1V1167.6M374 1162.4V1167.4M375 1161.6V1167.3M376 1163.3V1167.4M377 1162.5V1163.8M377 1165.4V1167.3M378 1161.7V1166.8M379 1161.9V1167.2M380 1162.6V1163.3M380 1165.2V1167.0M381 1162.3V1163.0M381 1165.3V1166.5M382 1162.8V1166.8M383 1162.3V1167.5M384 1162.1V1165.8M385 1162.9V1166.0M386 1162.7V1167.0M387 1161.9V1163.4M387 1164.6V1167.4M388 1162.8V1163.9M388 1166.0V1167.4M389 1161.9V1163.4M389 1165.7V1166.5M390 1163.3V1168.8M391 1161.7V1163.4M391 1164.6V1167.0M392 1162.6V1167.3M393 1162.8V1164.1M393 1166.1V1167.2M394 1161.7V1163.1M394 1164.9V1166.8M395 1162.6V1166.0M396 1162.9V1166.6M397 1162.1V1162.6M397 1163.6V1166.6M398 1161.2V1162.4M398 1163.6V1166.9M399 1162.7V1168.7M400 1161.5V1162.8M400 1164.9V1166.1M401 1161.8V1166.5M402 1162.3V1165.7M403 1161.0V1162.1M403 1163.3V1165.2M404 1161.9V1163.6M404 1164.9V1166.8M405 1162.0V1163.0M405 1165.4V1166.5M406 1162.0V1165.2M407 1162.5V1164.9M408 1161.3V1162.3M408 1163.4V1166.4M409 1161.0V1162.3M409 1163.8V1166.1M410 1160.7V1164.6M411 1160.6V1162.1M411 1163.4V1165.6M412 1161.8V1165.7M413 1162.1V1165.9M414 1160.9V1162.3M414 1164.3V1166.3M415 1161.6V1166.2M416 1162.3V1166.5M417 1158.3V1166.1M418 1162.0V1165.6M419 1161.3V1166.1M420 1158.7V1166.0M421 1161.8V1165.5M422 1161.7V1166.0M423 1162.6V1165.0M424 1161.3V1165.5M425 1162.6V1165.6M426 1162.0V1166.5M427 1161.6V1166.3M428 1158.5V1160.4M428 1162.9V1167.2M429 1161.6V1162.7M429 1164.6V1166.7M430 1162.3V1163.0M430 1164.6V1166.3M431 1162.5V1166.3M432 1161.8V1167.1M433 1162.0V1166.4M434 1163.0V1166.5M435 1162.8V1167.5M436 1161.6V1166.5M437 1162.4V1167.1M438 1162.3V1163.6M438 1165.7V1166.9M439 1163.0V1167.2M440 1162.4V1163.6M440 1165.0V1167.0M441 1161.6V1162.1M441 1163.6V1166.9M442 1162.2V1162.7M442 1163.9V1166.2M443 1161.8V1162.8M443 1164.7V1167.1M444 1162.5V1163.9M444 1165.8V1166.8M445 1161.7V1166.0M446 1161.6V1166.7M447 1161.5V1163.2M447 1164.7V1166.2M448 1162.7V1166.3M449 1162.0V1166.3M450 1161.4V1165.8M451 1160.9V1162.0M451 1164.0V1166.1M452 1160.9V1161.6M452 1163.7V1166.7M453 1161.2V1165.0M454 1162.3V1162.6M454 1164.8V1166.5M455 1161.1V1164.9M456 1161.0V1166.4M457 1162.5V1165.5M458 1162.0V1166.4M459 1161.5V1165.1M460 1161.3V1166.4M461 1162.0V1165.6M462 1161.7V1166.1M463 1161.6V1165.4M464 1161.6V1166.1M465 1161.5V1165.3M466 1162.6V1165.6M467 1161.3V1162.8M467 1165.1V1167.2M468 1162.2V1163.3M468 1165.2V1166.4M469 1161.6V1162.9M469 1164.8V1166.5M470 1161.9V1165.7M471 1161.8V1166.7M472 1162.9V1167.1M473 1161.3V1161.9M473 1163.8V1166.3M474 1161.3V1162.1M474 1164.5V1165.5M475 1161.3V1166.2M476 1161.8V1162.1M476 1163.9V1167.0M477 1163.0V1166.0M478 1161.9V1166.0M479 1161.3V1162.4M479 1164.4V1165.7M480 1161.7V1163.1M480 1164.5V1166.2M481 1161.8V1165.7M482 1161.5V1166.0M483 1161.4V1165.3M484 1161.4V1166.3M485 1161.5V1163.0M485 1164.4V1166.9M486 1161.4V1165.4M487 1162.4V1165.6M488 1160.5V1162.6M488 1164.8V1166.6M489 1161.4V1166.7M490 1161.8V1163.4M490 1165.8V1166.8M491 1161.4V1165.5M492 1161.3V1166.8M493 1162.6V1166.0M494 1161.4V1162.4M494 1164.2V1165.6M495 1162.7V1163.6M495 1166.1V1166.9M496 1162.0V1166.8M497 1161.3V1166.7M498 1162.6V1165.7M499 1162.0V1166.4M500 1162.3V1162.5M500 1164.3V1166.5M501 1162.8V1166.2M502 1162.1V1163.1M502 1164.6V1166.4M503 1161.5V1162.4M503 1164.5V1166.7M504 1161.6V1162.5M504 1164.2V1166.5M505 1161.4V1166.0M506 1162.4V1163.3M506 1164.9V1166.5M507 1162.1V1166.1M508 1161.2V1162.2M508 1164.4V1166.4M509 1162.6V1166.2M510 1161.0V1165.4M511 1162.4V1165.1M512 1161.5V1165.5M513 1162.5V1166.2M514 1161.1V1161.8M514 1163.1V1166.1M515 1160.7V1164.6M516 1161.6V1165.1M517 1161.1V1161.9M517 1163.1V1165.6M518 1161.1V1165.0M519 1161.7V1162.3M519 1164.2V1166.1M520 1161.0V1161.6M520 1163.5V1165.5M521 1161.2V1162.5M521 1164.3V1165.8M522 1161.3V1168.6M523 1161.8V1164.9M524 1160.7V1161.3M524 1163.2V1165.9M525 1161.8V1165.5M526 1161.5V1162.3M526 1163.6V1166.1M527 1161.1V1162.7M527 1164.0V1166.1M528 1161.5V1165.4M529 1162.5V1165.6M530 1161.7V1166.1M531 1160.8V1161.1M531 1162.6V1166.3M532 1161.6V1162.1M532 1164.1V1166.6M533 1161.6V1165.6M534 1162.3V1166.3M535 1161.9V1165.7M536 1161.7V1162.8M536 1165.1V1166.3M537 1161.2V1161.8M537 1164.2V1165.7M538 1161.3V1166.4M539 1162.0V1165.7M540 1162.6V1165.1M541 1161.6V1163.1M541 1164.6V1166.9M542 1162.8V1165.7M543 1161.9V1163.5M543 1165.8V1166.8M544 1161.7V1162.7M544 1163.8V1165.9M545 1161.1V1165.6M546 1162.5V1165.6M547 1161.4V1166.7M548 1156.2V1158.4M548 1160.0V1166.7M549 1161.6V1162.2M549 1163.5V1166.2M550 1161.2V1166.8M551 1161.9V1166.3M552 1161.1V1162.7M552 1163.8V1166.1M553 1161.7V1166.3M554 1162.2V1165.8M555 1161.7V1162.0M555 1163.2V1166.6M556 1161.5V1163.1M556 1165.0V1167.0M557 1159.7V1162.6M557 1164.6V1168.5M558 1161.8V1165.8M559 1162.1V1166.8M560 1162.5V1163.0M560 1164.7V1166.8M561 1161.2V1162.8M561 1165.0V1166.4M562 1160.6V1161.8M562 1164.2V1165.9M563 1162.0V1165.8M564 1161.8V1165.1M565 1161.4V1166.2M566 1161.9V1166.3M567 1161.2V1165.2M568 1162.6V1165.8M569 1160.2V1161.8M569 1162.8V1166.3M570 1161.8V1162.0M570 1164.4V1165.9M571 1162.5V1165.5M572 1161.7V1164.8M573 1161.9V1165.6M574 1161.4V1163.2M574 1165.5V1166.6M575 1160.9V1161.6M575 1163.9V1165.5M576 1160.8V1166.5M577 1161.2V1162.6M577 1165.0V1166.4M578 1161.2V1166.2M579 1162.6V1167.1M580 1162.8V1167.1M581 1162.3V1166.2M582 1162.2V1162.4M582 1163.5V1166.5M583 1161.9V1165.7M584 1162.3V1165.9M585 1162.9V1166.7M586 1161.9V1163.3M586 1164.9V1166.9M587 1161.8V1162.9M587 1165.4V1167.1M588 1161.7V1165.8M589 1162.2V1162.6M589 1164.6V1167.0M590 1163.1V1163.5M590 1164.5V1167.3M591 1163.0V1166.4M592 1162.0V1162.5M592 1164.6V1166.4M593 1162.1V1163.2M593 1165.2V1167.4M594 1163.6V1167.0M595 1162.3V1166.1M596 1163.1V1167.1M597 1162.1V1163.6M597 1165.6V1167.3M598 1163.6V1167.1M599 1162.7V1167.4M600 1162.3V1164.0M600 1165.0V1167.9M601 1162.9V1163.9M601 1166.4V1167.5M602 1163.0V1163.7M602 1164.9V1168.0M603 1163.5V1166.6M604 1162.0V1166.2M605 1161.7V1162.6M605 1164.6V1166.9M606 1163.2V1167.7M607 1162.5V1163.2M607 1165.5V1167.6M608 1162.6V1167.0M609 1161.7V1163.2M609 1164.3V1166.3M610 1162.5V1162.8M610 1164.6V1167.5M611 1162.3V1163.8M611 1165.2V1167.2M612 1162.8V1167.3M613 1160.0V1165.7M614 1161.5V1162.9M614 1164.0V1166.4M615 1162.6V1166.9M616 1162.9V1166.8M617 1161.3V1165.4M618 1161.6V1162.3M618 1163.9V1167.0M619 1162.0V1165.3M620 1162.1V1162.6M620 1164.8V1166.5M621 1161.3V1162.3M621 1164.1V1166.4M622 1162.0V1165.3M623 1161.8V1165.7M624 1162.5V1166.3M625 1162.5V1167.1M626 1161.3V1166.3M627 1161.5V1166.7M628 1162.1V1166.9M629 1161.3V1166.6M630 1161.2V1166.4M631 1162.7V1167.0M632 1162.8V1166.1M633 1161.4V1162.2M633 1164.3V1166.3M634 1157.6V1158.9M634 1160.7V1166.2M635 1161.8V1166.5M636 1162.7V1163.2M636 1165.0V1166.7M637 1161.7V1162.9M637 1165.3V1166.9M638 1161.3V1163.3M638 1165.7V1166.9M639 1162.6V1165.8M640 1162.2V1165.8M641 1162.7V1166.8M642 1162.4V1165.4M643 1161.3V1166.3M644 1161.2V1162.0M644 1163.5V1166.6M645 1162.4V1165.9M646 1162.3V1165.4M647 1161.5V1166.3M648 1161.3V1165.2M649 1159.3V1161.2M649 1162.4V1165.3M650 1161.7V1166.2M651 1161.7V1166.4M652 1162.5V1163.5M652 1165.0V1166.8M653 1160.9V1165.4M654 1162.0V1165.7M655 1162.7V1166.6M656 1162.5V1163.9M656 1166.3V1167.2M657 1161.2V1166.3M658 1161.6V1165.6M659 1161.7V1165.9M660 1161.7V1166.8M661 1158.6V1166.0M662 1161.8V1165.6M663 1161.6V1166.1M664 1162.3V1166.2M665 1161.3V1165.5M666 1161.5V1166.4M667 1162.0V1164.8M668 1161.2V1162.6M668 1164.8V1166.7M669 1162.2V1166.9M670 1162.0V1165.4M671 1161.1V1162.5M671 1164.9V1165.8M672 1162.0V1166.3M673 1160.6V1165.7M674 1161.7V1165.1M675 1160.5V1161.6M675 1163.8V1164.8M676 1161.2V1162.6M676 1164.1V1166.2M677 1160.5V1165.8M678 1160.9V1164.9M679 1162.4V1165.4M680 1161.1V1165.5M681 1161.0V1165.4M682 1162.0V1165.2M683 1161.2V1162.1M683 1163.9V1165.6M684 1161.8V1162.2M684 1163.9V1166.6M685 1162.9V1165.2M686 1162.6V1167.0M687 1161.9V1165.4M688 1161.8V1162.0M688 1164.3V1165.9M689 1162.6V1166.4M690 1161.2V1163.0M690 1164.3V1166.7M691 1161.2V1163.0M691 1164.1V1167.0M692 1161.0V1162.3M692 1163.4V1165.1M693 1161.3V1165.8M694 1162.2V1165.1M695 1161.4V1165.0M696 1162.1V1165.7M697 1161.6V1166.3M698 1161.0V1161.4M698 1163.0V1166.3M699 1158.4V1165.5M700 1161.9V1163.1M700 1165.1V1165.9M701 1161.8V1165.2M702 1162.4V1166.0M703 1162.4V1163.7M703 1165.7V1166.6M704 1162.2V1166.7M705 1161.1V1162.4M705 1163.8V1165.3M706 1162.4V1166.6M707 1161.2V1161.8M707 1163.3V1166.2M708 1161.6V1165.4M709 1162.1V1166.1M710 1161.1V1162.6M710 1164.4V1165.4M711 1162.1V1166.6M712 1162.2V1165.6M713 1162.7V1166.0M714 1161.5V1162.9M714 1164.3V1167.1M715 1161.3V1162.4M715 1163.6V1166.8M716 1161.3V1163.1M716 1165.4V1166.8M717 1161.6V1166.9M718 1162.2V1165.8M719 1162.9V1166.3M720 1161.4V1162.6M720 1165.0V1166.5M721 1162.2V1166.4M722 1163.2V1167.3M723 1161.5V1162.9M723 1165.2V1165.8M724 1162.8V1166.6M725 1162.6V1167.0M726 1162.6V1166.5M727 1162.9V1166.7M728 1161.6V1162.1M728 1163.6V1166.1M729 1161.5V1163.1M729 1165.1V1166.6M730 1161.4V1162.4M730 1164.2V1166.1M731 1162.0V1162.7M731 1165.2V1166.4M732 1161.3V1162.1M732 1164.1V1166.7M733 1162.3V1162.7M733 1164.4V1166.7M734 1162.9V1166.8M735 1161.8V1165.2M736 1161.0V1166.6M737 1161.3V1165.2M738 1162.2V1165.3M739 1161.3V1166.6M740 1162.2V1166.3M741 1161.5V1166.9M742 1161.9V1162.2M742 1163.3V1166.9M743 1161.2V1162.4M743 1163.5V1165.4M744 1161.4V1162.8M744 1164.9V1166.5M745 1162.7V1166.3M746 1161.4V1166.6M747 1162.0V1163.2M747 1164.9V1166.3M748 1161.8V1166.1M749 1161.4V1162.6M749 1164.0V1166.4M750 1162.9V1166.9M751 1161.4V1162.8M751 1164.9V1166.5M752 1161.4V1162.3M752 1164.6V1166.6M753 1161.3V1162.7M753 1163.7V1165.4M754 1161.7V1162.1M754 1164.4V1165.7M755 1162.2V1166.5M756 1161.6V1163.5M756 1166.0V1167.2M757 1163.1V1163.5M757 1165.5V1167.5M758 1162.6V1163.1M758 1164.7V1167.2M759 1163.3V1167.4M760 1163.2V1166.2M761 1163.1V1163.4M761 1165.1V1167.6M762 1163.3V1167.2M763 1162.5V1166.4M764 1162.0V1163.9M764 1165.9V1167.7M765 1162.3V1167.8M766 1162.2V1163.5M766 1165.5V1166.2M767 1159.0V1159.9M767 1162.2V1166.5M768 1162.5V1163.9M768 1166.2V1167.7M769 1161.9V1163.3M769 1165.0V1166.9M770 1161.7V1163.2M770 1165.3V1166.4M771 1162.2V1162.6M771 1165.0V1167.5M772 1163.3V1166.1M773 1162.5V1164.1M773 1166.0V1167.2M774 1162.0V1163.3M774 1165.2V1167.4M775 1163.0V1165.9M776 1162.9V1166.8M777 1161.9V1166.2M778 1162.0V1166.7M779 1163.5V1167.3M780 1162.6V1163.8M780 1165.4V1167.4M781 1163.1V1164.0M781 1165.4V1167.2M782 1162.0V1167.7M783 1162.2V1162.9M783 1164.1V1166.8M784 1162.3V1162.7M784 1165.0V1166.8M785 1162.2V1167.1M786 1162.2V1166.3M787 1163.0V1166.5M788 1162.6V1166.0M789 1161.6V1167.2M790 1162.7V1166.2M791 1161.6V1163.2M791 1165.6V1167.2M792 1162.3V1163.7M792 1166.1V1166.9M793 1158.4V1166.7M794 1161.6V1166.2M795 1162.2V1163.0M795 1164.8V1166.8M796 1162.3V1163.3M796 1164.5V1167.7M797 1162.3V1166.7M798 1162.1V1163.5M798 1165.9V1166.2M799 1161.9V1167.1M800 1163.0V1167.3M801 1163.0V1165.8M802 1162.7V1165.9M803 1161.9V1163.7M803 1166.2V1167.4M804 1162.3V1164.0M804 1165.3V1167.5M805 1162.5V1167.5M806 1162.9V1167.3M807 1162.2V1163.2M807 1164.6V1167.3M808 1162.4V1163.1M808 1165.0V1166.6M809 1163.0V1166.8M810 1162.4V1164.1M810 1166.2V1167.6M811 1162.8V1166.0M812 1163.0V1166.4M813 1162.4V1166.4M814 1162.6V1166.4M815 1162.0V1167.3M816 1163.5V1167.5M817 1162.9V1165.9M818 1162.5V1167.1M819 1162.4V1167.5M820 1161.8V1167.4M821 1162.3V1166.9M822 1163.0V1163.9M822 1165.1V1167.3M823 1162.9V1166.4M824 1161.8V1166.7M825 1163.0V1166.3M826 1162.2V1165.6M827 1161.3V1165.7M828 1161.7V1166.1M829 1161.5V1166.2M830 1163.1V1166.2M831 1161.9V1163.1M831 1164.4V1166.3M832 1161.5V1166.6M833 1161.3V1166.8M834 1161.2V1161.7M834 1164.2V1166.3M835 1162.8V1163.0M835 1165.3V1166.9M836 1161.9V1167.1M837 1161.3V1165.7M838 1161.5V1164.9M839 1161.5V1163.0M839 1164.2V1166.0M840 1161.8V1165.1M841 1161.1V1165.7M842 1161.1V1162.8M842 1163.9V1166.0M843 1161.8V1166.5M844 1161.1V1162.5M844 1164.0V1165.2M845 1160.8V1161.6M845 1162.8V1165.3M846 1160.7V1161.8M846 1163.7V1165.8M847 1162.2V1165.6M848 1160.7V1161.6M848 1163.7V1165.9M849 1161.6V1165.6M850 1161.5V1166.2M851 1161.2V1162.4M851 1164.6V1166.3M852 1160.9V1165.9M853 1161.9V1165.9M854 1161.8V1165.8" stroke="#e377c2" stroke-width="1" fill="none" opacity="1"/><path d="M81 1248.8V1251.1M82 1249.0V1251.4M83 1248.4V1251.6M84 1249.3V1251.8M85 1249.1V1251.0M86 1248.3V1251.6M87 1248.2V1251.7M88 1248.8V1250.9M89 1248.6V1251.1M90 1248.3V1251.0M91 1248.5V1251.7M92 1249.2V1251.3M93 1248.4V1251.4M94 1248.8V1251.6M95 1248.0V1251.5M96 1248.4V1251.8M97 1245.5V1251.9M98 1248.9V1251.7M99 1249.0V1251.7M100 1248.9V1251.8M101 1248.5V1250.7M102 1248.1V1251.8M103 1248.5V1250.9M104 1248.5V1251.6M105 1248.3V1251.1M106 1248.7V1251.6M107 1248.9V1251.0M108 1248.1V1250.9M109 1248.5V1251.6M110 1249.3V1251.7M111 1249.2V1251.5M112 1248.8V1251.4M113 1248.1V1251.6M114 1248.0V1251.9M115 1249.1V1251.3M116 1248.6V1251.5M117 1248.8V1252.0M118 1249.1V1251.6M119 1248.9V1251.6M120 1248.1V1251.2M121 1248.0V1251.0M122 1248.2V1251.1M123 1247.6V1250.5M124 1247.8V1251.6M125 1244.8V1251.4M126 1247.7V1250.6M127 1247.9V1250.7M128 1247.8V1251.6M129 1248.2V1251.1M130 1249.1V1250.8M131 1248.9V1250.9M132 1248.0V1251.7M133 1248.5V1251.5M134 1247.7V1251.5M135 1247.8V1251.5M136 1248.8V1251.7M137 1247.9V1250.9M138 1247.9V1251.7M139 1247.9V1250.9M140 1248.6V1250.8M141 1248.4V1251.4M142 1247.8V1251.3M143 1248.1V1251.0M144 1248.5V1251.0M145 1247.9V1251.5M146 1248.3V1250.6M147 1248.4V1251.0M148 1248.7V1250.7M149 1248.1V1251.0M150 1248.2V1251.6M151 1248.3V1252.6M152 1248.9V1251.3M153 1248.1V1251.4M154 1248.3V1251.9M155 1248.3V1251.7M156 1248.6V1251.5M157 1248.6V1251.0M158 1248.7V1251.5M159 1248.6V1251.2M160 1247.9V1252.3M161 1248.5V1251.6M162 1248.6V1251.2M163 1248.2V1250.7M164 1248.2V1250.5M165 1248.7V1251.1M166 1248.0V1251.0M167 1248.2V1251.7M168 1248.8V1250.7M169 1248.1V1251.6M170 1248.8V1251.7M171 1247.8V1251.2M172 1248.3V1250.9M173 1248.2V1251.4M174 1248.9V1252.0M175 1248.3V1251.5M176 1248.1V1251.5M177 1248.1V1250.9M178 1248.4V1251.4M179 1248.8V1252.0M180 1248.2V1251.1M181 1248.7V1252.0M182 1248.8V1251.6M183 1248.3V1251.2M184 1249.0V1251.5M185 1247.9V1251.4M186 1246.8V1250.9M187 1248.7V1251.6M188 1248.2V1251.1M189 1248.2V1250.5M190 1248.0V1250.9M191 1248.4V1251.0M192 1247.5V1250.7M193 1248.4V1251.2M194 1248.8V1251.0M195 1248.1V1251.2M196 1247.7V1251.4M197 1248.6V1250.6M198 1248.2V1250.5M199 1248.5V1250.3M200 1248.5V1251.4M201 1248.3V1250.4M202 1247.7V1250.7M203 1248.3V1251.3M204 1248.4V1251.6M205 1247.7V1251.1M206 1248.2V1251.1M207 1248.5V1251.2M208 1248.6V1251.6M209 1248.6V1251.5M210 1247.6V1251.0M211 1248.4V1251.2M212 1247.6V1251.3M213 1247.7V1250.8M214 1248.0V1250.6M215 1248.2V1250.6M216 1247.7V1250.3M217 1247.6V1251.4M218 1247.9V1251.4M219 1248.0V1251.1M220 1248.1V1251.1M221 1248.2V1251.2M222 1248.6V1251.1M223 1247.8V1251.3M224 1248.6V1251.3M225 1247.6V1250.5M226 1248.2V1251.3M227 1247.6V1251.3M228 1248.1V1251.0M229 1248.1V1251.0M230 1247.5V1250.7M231 1247.6V1250.2M232 1248.1V1251.2M233 1247.6V1251.0M234 1247.6V1250.5M235 1247.6V1250.4M236 1247.8V1251.3M237 1247.5V1250.6M238 1247.3V1251.2M239 1247.6V1250.1M240 1247.6V1250.9M241 1247.4V1250.9M242 1247.5V1251.3M243 1248.0V1250.4M244 1247.8V1251.2M245 1248.5V1251.0M246 1248.2V1251.0M247 1247.6V1250.9M248 1247.6V1250.9M249 1248.4V1250.6M250 1248.5V1250.8M251 1247.8V1250.7M252 1245.1V1245.7M252 1246.8V1250.5M253 1247.9V1251.1M254 1248.1V1251.5M255 1247.5V1250.4M256 1248.0V1251.4M257 1247.9V1251.1M258 1248.2V1251.2M259 1247.8V1250.7M260 1248.0V1250.9M261 1247.5V1250.3M262 1247.7V1251.3M263 1248.1V1251.2M264 1247.5V1251.1M265 1248.5V1251.4M266 1247.7V1251.3M267 1247.5V1251.3M268 1245.1V1245.6M268 1247.5V1250.8M269 1248.5V1251.0M270 1247.8V1251.2M271 1248.3V1251.2M272 1247.7V1250.5M273 1248.5V1251.4M274 1248.4V1252.2M275 1247.9V1251.2M276 1248.6V1250.2M277 1248.0V1250.4M278 1247.7V1251.2M279 1247.8V1250.7M280 1248.4V1251.0M281 1247.6V1251.2M282 1247.9V1251.3M283 1247.6V1250.9M284 1247.8V1251.3M285 1248.2V1250.3M286 1248.6V1251.3M287 1247.9V1250.9M288 1247.5V1251.0M289 1247.5V1250.7M290 1248.2V1250.8M291 1248.0V1250.7M292 1248.6V1250.4M293 1247.5V1250.7M294 1247.3V1251.0M295 1247.5V1251.1M296 1247.6V1250.9M297 1248.2V1251.3M298 1248.5V1251.2M299 1248.1V1251.2M300 1247.6V1251.2M301 1248.2V1250.8M302 1247.9V1250.7M303 1247.3V1250.8M304 1247.5V1251.3M305 1247.8V1250.3M306 1247.5V1250.5M307 1247.9V1250.7M308 1248.2V1251.3M309 1247.6V1250.4M310 1248.3V1251.2M311 1247.7V1250.9M312 1248.5V1250.7M313 1248.7V1251.0M314 1247.8V1250.6M315 1247.9V1250.9M316 1248.0V1251.1M317 1247.7V1251.1M318 1248.6V1251.0M319 1247.7V1251.1M320 1248.1V1250.2M321 1247.6V1250.4M322 1247.4V1251.0M323 1247.4V1250.7M324 1247.3V1250.7M325 1247.6V1250.4M326 1247.5V1250.5M327 1247.2V1250.4M328 1247.5V1250.5M329 1247.4V1250.0M330 1248.0V1250.9M331 1247.7V1250.8M332 1248.4V1251.1M333 1247.9V1251.4M334 1248.4V1251.3M335 1247.7V1250.8M336 1247.7V1251.5M337 1248.6V1250.8M338 1248.0V1250.9M339 1247.6V1251.3M340 1248.7V1251.6M341 1247.8V1251.2M342 1247.8V1250.6M343 1248.3V1251.6M344 1248.1V1251.3M345 1247.7V1250.7M346 1247.8V1251.3M347 1248.0V1251.4M348 1247.9V1250.8M349 1248.6V1250.4M350 1247.9V1250.8M351 1248.2V1251.1M352 1248.3V1250.5M353 1248.5V1250.8M354 1248.2V1251.2M355 1247.8V1250.9M356 1247.8V1251.4M357 1247.8V1251.4M358 1248.5V1251.2M359 1247.9V1250.6M360 1248.5V1251.8M361 1248.8V1251.1M362 1248.3V1251.1M363 1248.5V1251.6M364 1247.9V1251.0M365 1248.0V1250.5M366 1247.8V1251.2M367 1247.7V1250.6M368 1248.5V1250.2M369 1247.4V1251.3M370 1248.3V1250.7M371 1248.2V1250.9M372 1248.0V1251.3M373 1248.4V1250.9M374 1248.6V1251.8M375 1247.9V1251.7M376 1248.5V1251.5M377 1248.2V1251.6M378 1248.1V1250.9M379 1248.0V1251.9M380 1248.4V1251.7M381 1248.2V1251.8M382 1248.1V1251.8M383 1247.9V1251.3M384 1246.0V1251.9M385 1248.4V1251.4M386 1249.0V1251.1M387 1248.3V1251.7M388 1248.3V1252.1M389 1248.9V1251.4M390 1248.3V1251.5M391 1249.2V1251.4M392 1248.4V1251.4M393 1249.0V1251.1M394 1248.4V1251.5M395 1248.1V1250.9M396 1248.5V1251.0M397 1248.6V1251.1M398 1248.6V1251.9M399 1248.3V1251.9M400 1248.6V1251.0M401 1248.2V1251.0M402 1248.1V1251.8M403 1248.8V1251.9M404 1248.7V1251.1M405 1249.2V1251.3M406 1248.2V1251.2M407 1248.2V1251.4M408 1248.8V1250.9M409 1248.6V1251.2M410 1248.5V1251.3M411 1248.6V1251.2M412 1248.6V1250.7M413 1248.3V1251.7M414 1248.4V1251.1M415 1248.3V1251.3M416 1247.6V1251.1M417 1247.6V1250.4M418 1247.7V1251.0M419 1247.9V1251.2M420 1247.3V1251.2M421 1248.2V1251.2M422 1247.9V1250.7M423 1248.1V1251.4M424 1248.1V1250.8M425 1248.6V1250.9M426 1247.9V1251.3M427 1248.4V1251.3M428 1247.5V1251.0M429 1247.9V1251.3M430 1247.7V1250.2M431 1245.9V1250.9M432 1245.1V1251.3M433 1248.4V1250.4M434 1248.1V1250.7M435 1247.7V1251.2M436 1248.4V1250.7M437 1248.0V1251.2M438 1248.0V1250.4M439 1248.6V1251.4M440 1247.6V1250.8M441 1248.6V1250.5M442 1247.5V1250.7M443 1247.4V1250.3M444 1247.5V1251.3M445 1247.8V1250.6M446 1247.9V1250.5M447 1247.8V1251.2M448 1248.8V1250.9M449 1248.0V1251.0M450 1248.1V1251.0M451 1247.9V1251.8M452 1248.8V1251.1M453 1248.9V1251.0M454 1248.7V1250.8M455 1248.4V1251.0M456 1248.6V1250.9M457 1248.5V1251.5M458 1248.4V1251.5M459 1247.9V1251.2M460 1248.1V1250.8M461 1247.8V1250.7M462 1248.6V1251.5M463 1248.1V1251.4M464 1247.9V1250.5M465 1247.6V1251.2M466 1248.1V1250.3M467 1248.0V1250.8M468 1248.1V1250.2M469 1248.5V1250.8M470 1248.2V1251.1M471 1247.8V1251.3M472 1248.4V1250.7M473 1248.5V1251.3M474 1248.6V1251.3M475 1248.8V1250.6M476 1248.1V1250.7M477 1247.8V1250.8M478 1247.7V1250.6M479 1248.3V1251.1M480 1248.1V1250.6M481 1248.1V1250.6M482 1248.2V1250.3M483 1247.8V1250.9M484 1248.7V1251.2M485 1247.8V1251.3M486 1247.8V1251.4M487 1247.6V1250.5M488 1247.5V1250.9M489 1248.4V1251.4M490 1247.9V1250.6M491 1248.4V1251.2M492 1248.4V1251.5M493 1247.8V1251.7M494 1248.5V1251.4M495 1248.4V1251.0M496 1248.7V1251.1M497 1248.9V1251.4M498 1247.9V1251.0M499 1248.3V1251.4M500 1248.1V1250.9M501 1248.6V1249.9M501 1251.1V1253.5M502 1247.8V1250.6M503 1247.6V1250.6M504 1248.4V1252.3M505 1248.8V1251.3M506 1248.7V1250.6M507 1248.6V1251.4M508 1246.4V1251.3M509 1248.3V1251.4M510 1247.9V1251.2M511 1248.7V1251.2M512 1248.0V1251.6M513 1248.3V1250.4M514 1248.6V1251.1M515 1248.7V1251.6M516 1247.9V1251.6M517 1248.8V1251.5M518 1248.3V1251.4M519 1248.1V1250.8M520 1248.1V1251.5M521 1248.8V1250.6M522 1248.2V1251.3M523 1247.5V1251.0M524 1248.4V1251.2M525 1248.4V1250.5M526 1248.1V1250.9M527 1248.0V1251.3M528 1247.7V1250.8M529 1248.2V1251.6M530 1248.2V1251.4M531 1248.4V1251.3M532 1248.0V1250.7M533 1248.0V1250.8M534 1248.0V1251.3M535 1248.1V1250.7M536 1247.6V1250.2M537 1248.4V1251.1M538 1248.7V1251.5M539 1248.5V1250.4M540 1248.0V1251.0M541 1247.8V1251.3M542 1248.5V1251.4M543 1248.0V1251.5M544 1248.6V1250.6M545 1248.4V1250.6M546 1248.0V1250.9M547 1248.4V1251.0M548 1247.8V1251.6M549 1247.9V1250.7M550 1247.5V1250.9M551 1248.0V1250.5M552 1248.6V1251.1M553 1248.6V1251.0M554 1248.0V1250.4M555 1248.0V1251.4M556 1248.2V1251.1M557 1248.2V1250.6M558 1247.5V1251.1M559 1248.4V1251.4M560 1248.5V1251.5M561 1248.1V1251.5M562 1247.9V1251.6M563 1248.3V1251.0M564 1245.3V1246.8M564 1249.2V1251.2M565 1248.9V1251.3M566 1247.8V1251.6M567 1248.7V1250.7M568 1248.0V1250.8M569 1248.1V1250.8M570 1247.9V1251.6M571 1248.0V1251.6M572 1247.7V1250.6M573 1248.7V1251.4M574 1248.6V1251.0M575 1248.1V1251.8M576 1248.3V1250.8M577 1248.9V1251.6M578 1248.8V1250.8M579 1248.1V1251.3M580 1248.6V1251.6M581 1248.0V1251.4M582 1248.9V1251.4M583 1248.0V1251.3M584 1248.5V1250.6M585 1248.7V1251.1M586 1248.1V1250.8M587 1248.0V1250.6M588 1248.1V1251.3M589 1248.1V1251.4M590 1247.8V1251.0M591 1247.7V1250.6M592 1248.4V1250.9M593 1248.1V1251.3M594 1247.9V1250.5M595 1247.7V1250.7M596 1247.4V1251.1M597 1247.8V1250.6M598 1248.4V1250.5M599 1248.1V1250.6M600 1248.6V1251.3M601 1247.5V1250.4M602 1248.2V1250.8M603 1247.7V1251.3M604 1248.0V1250.8M605 1247.5V1251.2M606 1247.6V1250.6M607 1248.0V1251.0M608 1248.1V1250.5M609 1248.3V1250.9M610 1247.7V1250.6M611 1247.5V1251.6M612 1248.1V1251.4M613 1247.9V1251.1M614 1247.9V1251.1M615 1248.4V1250.2M616 1248.1V1251.0M617 1247.5V1251.1M618 1247.4V1250.8M619 1247.4V1250.7M620 1247.6V1251.0M621 1247.4V1250.4M622 1247.3V1250.9M623 1247.5V1250.5M624 1248.0V1251.1M625 1247.4V1250.8M626 1248.4V1251.1M627 1247.7V1250.4M628 1247.4V1250.7M629 1247.7V1250.9M630 1247.9V1251.2M631 1248.0V1251.1M632 1248.1V1251.0M633 1247.4V1250.5M634 1247.9V1251.1M635 1247.2V1251.1M636 1248.2V1251.0M637 1247.3V1250.4M638 1245.0V1246.3M638 1248.0V1250.9M639 1247.6V1250.5M640 1247.7V1250.4M641 1248.4V1250.5M642 1248.3V1251.1M643 1248.1V1250.1M644 1247.9V1250.6M645 1248.4V1251.6M646 1248.5V1250.5M647 1247.8V1250.4M648 1248.2V1251.0M649 1248.2V1251.5M650 1247.7V1251.2M651 1248.6V1251.0M652 1248.6V1251.0M653 1248.7V1251.7M654 1248.4V1250.8M655 1247.5V1251.2M656 1248.5V1251.1M657 1247.7V1251.3M658 1247.5V1251.3M659 1248.5V1250.5M660 1248.1V1251.4M661 1248.0V1250.6M662 1248.7V1251.3M663 1247.7V1251.0M664 1248.2V1251.4M665 1248.7V1251.1M666 1248.3V1251.6M667 1248.8V1251.4M668 1248.2V1251.5M669 1248.2V1251.5M670 1248.7V1251.2M671 1248.2V1251.6M672 1248.6V1251.0M673 1247.5V1251.2M674 1248.1V1250.6M675 1247.6V1251.2M676 1248.0V1250.8M677 1248.0V1251.2M678 1247.8V1250.9M679 1247.5V1251.2M680 1247.6V1250.4M681 1247.6V1250.5M682 1248.4V1251.3M683 1247.6V1251.2M684 1248.0V1251.3M685 1247.7V1251.2M686 1247.6V1251.0M687 1248.1V1250.5M688 1247.7V1250.6M689 1247.8V1250.9M690 1248.3V1251.1M691 1247.3V1250.3M692 1247.5V1250.4M693 1247.7V1250.2M694 1244.9V1251.1M695 1247.1V1250.8M696 1247.6V1250.5M697 1247.5V1249.8M698 1247.1V1250.1M699 1247.3V1251.0M700 1247.5V1251.1M701 1247.7V1250.5M702 1247.6V1250.7M703 1248.3V1250.8M704 1247.3V1250.6M705 1247.9V1250.1M706 1247.5V1250.7M707 1247.3V1250.3M708 1247.4V1250.5M709 1247.5V1250.7M710 1247.2V1250.5M711 1247.3V1250.3M712 1247.4V1251.2M713 1248.3V1251.0M714 1247.6V1250.2M715 1247.9V1250.7M716 1247.8V1249.9M717 1248.0V1250.8M718 1247.8V1250.7M719 1247.6V1250.3M720 1248.3V1250.6M721 1247.4V1250.5M722 1247.6V1250.1M723 1247.4V1250.3M724 1247.2V1249.9M725 1247.0V1250.7M726 1247.5V1249.8M727 1247.6V1250.5M728 1247.3V1250.5M729 1247.3V1250.3M730 1247.6V1250.9M731 1247.3V1250.4M732 1247.2V1250.0M733 1247.1V1250.7M734 1247.9V1250.8M735 1248.2V1250.6M736 1247.2V1250.7M737 1248.2V1250.6M738 1247.2V1250.7M739 1247.3V1250.3M740 1247.6V1250.0M741 1248.0V1250.4M742 1247.5V1250.0M743 1247.3V1250.7M744 1247.4V1250.1M745 1247.1V1250.6M746 1247.6V1250.7M747 1247.0V1251.9M748 1247.7V1250.3M749 1247.7V1250.3M750 1247.2V1250.4M751 1247.2V1250.7M752 1247.6V1250.7M753 1247.3V1250.7M754 1248.1V1250.1M755 1248.2V1250.4M756 1247.4V1250.7M757 1247.4V1250.9M758 1247.6V1250.2M759 1247.1V1250.9M760 1247.6V1250.9M761 1247.9V1251.2M762 1247.1V1250.6M763 1247.2V1250.9M764 1247.5V1250.8M765 1247.7V1250.6M766 1248.1V1250.6M767 1247.4V1249.6M768 1247.4V1250.9M769 1247.8V1250.9M770 1248.0V1250.8M771 1248.0V1250.1M772 1247.6V1251.0M773 1247.1V1251.0M774 1247.1V1250.3M775 1247.5V1250.6M776 1247.0V1250.7M777 1247.7V1250.7M778 1247.7V1250.8M779 1247.2V1250.3M780 1247.9V1250.0M781 1247.1V1250.1M782 1247.0V1250.9M783 1247.4V1250.4M784 1247.6V1250.7M785 1247.7V1249.7M786 1247.8V1250.5M787 1247.4V1250.6M788 1247.3V1250.0M789 1247.0V1249.8M790 1247.6V1250.0M791 1247.3V1250.8M792 1247.1V1250.5M793 1248.0V1250.7M794 1247.1V1249.8M795 1247.8V1250.2M796 1248.1V1250.6M797 1247.8V1250.4M798 1247.4V1250.6M799 1247.6V1250.5M800 1244.8V1245.8M800 1246.8V1250.2M801 1247.6V1249.8M802 1248.3V1250.3M803 1247.7V1250.4M804 1247.4V1251.1M805 1247.7V1251.0M806 1247.4V1250.2M807 1248.0V1250.1M808 1248.0V1250.2M809 1247.7V1251.0M810 1248.1V1250.7M811 1247.2V1250.0M812 1247.5V1250.7M813 1247.2V1250.4M814 1247.9V1250.6M815 1246.9V1249.9M816 1247.9V1250.2M817 1247.6V1250.7M818 1248.1V1250.7M819 1247.5V1251.0M820 1247.4V1251.0M821 1248.2V1251.1M822 1247.4V1250.2M823 1247.2V1250.6M824 1245.7V1246.0M824 1248.3V1250.5M825 1247.5V1250.9M826 1247.6V1250.7M827 1248.3V1251.0M828 1247.8V1250.2M829 1247.9V1250.5M830 1248.0V1250.6M831 1247.2V1250.6M832 1248.0V1250.0M833 1247.5V1250.8M834 1247.6V1250.3M835 1247.7V1250.8M836 1247.7V1250.4M837 1247.1V1250.3M838 1247.4V1250.7M839 1247.2V1250.6M840 1247.5V1250.6M841 1248.3V1251.0M842 1247.7V1251.2M843 1247.7V1250.5M844 1247.4V1251.1M845 1247.8V1251.3M846 1247.7V1250.2M847 1247.4V1251.1M848 1248.4V1251.0M849 1247.6V1250.3M850 1247.7V1250.7M851 1248.2V1250.7M852 1247.6V1250.9M853 1247.9V1250.6M854 1247.2V1250.3" stroke="#7f7f7f" stroke-width="1" fill="none" opacity="1"/><path d="M909 1062.1V1071.5M910 1061.3V1072.2M911 1059.1V1060.5M911 1062.2V1070.1M912 1059.5V1069.0M913 1062.2V1065.2M913 1067.7V1071.6M914 1059.7V1063.8M914 1065.5V1071.6M915 1061.3V1069.5M916 1060.8V1063.2M916 1065.2V1069.4M917 1060.5V1072.8M918 1061.2V1072.1M919 1063.4V1071.6M920 1062.6V1072.1M921 1061.6V1071.8M922 1062.6V1065.1M922 1066.3V1071.4M923 1063.6V1071.4M924 1061.2V1072.5M925 1063.5V1071.9M926 1059.9V1062.2M926 1064.2V1070.3M927 1061.1V1062.0M927 1064.3V1071.3M928 1056.7V1058.4M928 1060.8V1069.9M929 1059.0V1068.3M930 1062.0V1071.3M931 1059.9V1062.1M931 1064.1V1070.0M932 1059.1V1062.6M932 1064.5V1070.6M933 1060.3V1069.8M934 1060.4V1068.1M935 1059.3V1070.0M936 1060.3V1061.0M936 1063.5V1070.5M937 1061.2V1062.6M937 1064.8V1068.5M938 1054.8V1057.5M938 1059.7V1067.7M939 1061.6V1070.0M940 1059.8V1063.0M940 1064.1V1072.4M941 1060.5V1061.4M941 1063.7V1068.2M942 1060.6V1063.1M942 1065.4V1068.5M943 1060.9V1070.3M944 1059.6V1071.1M945 1061.7V1063.6M945 1065.8V1068.5M946 1058.1V1069.7M947 1060.7V1071.4M948 1059.1V1061.2M948 1063.2V1071.6M949 1062.3V1068.7M950 1059.1V1061.7M950 1064.0V1069.3M951 1060.8V1069.1M952 1060.4V1063.1M952 1064.5V1070.3M953 1062.1V1064.1M953 1065.7V1069.7M954 1063.2V1065.0M954 1066.3V1070.8M955 1061.8V1070.8M956 1058.9V1061.6M956 1064.0V1068.7M957 1062.1V1072.1M958 1061.2V1071.6M959 1055.7V1069.5M960 1061.6V1070.1M961 1059.5V1068.8M962 1059.3V1060.7M962 1062.0V1071.6M963 1060.8V1072.2M964 1061.1V1063.0M964 1065.1V1069.9M965 1062.9V1070.4M966 1062.3V1070.4M967 1058.0V1072.0M968 1062.4V1063.1M968 1064.8V1072.3M969 1059.7V1072.6M970 1063.5V1065.4M970 1066.9V1071.3M971 1063.8V1071.5M972 1060.2V1063.9M972 1065.8V1071.5M973 1060.5V1068.4M974 1058.4V1060.4M974 1061.8V1070.0M975 1063.6V1065.6M975 1066.7V1071.0M976 1061.7V1071.9M977 1063.8V1064.7M977 1066.3V1072.6M978 1061.7V1072.5M979 1062.6V1073.2M980 1061.9V1071.2M981 1062.5V1072.1M982 1061.2V1072.5M983 1060.0V1063.1M983 1065.2V1070.8M984 1060.2V1061.2M984 1062.4V1069.8M985 1061.2V1071.2M986 1063.2V1071.2M987 1059.5V1060.9M987 1063.2V1070.4M988 1063.4V1071.5M989 1059.7V1070.1M990 1061.4V1062.0M990 1063.8V1069.7M991 1060.5V1069.9M992 1062.8V1063.2M992 1064.4V1069.8M993 1061.3V1072.5M994 1062.2V1070.7M995 1063.1V1064.9M995 1066.4V1071.3M996 1063.4V1064.5M996 1065.6V1071.0M997 1061.0V1072.0M998 1060.0V1062.6M998 1064.0V1069.7M999 1059.1V1060.3M999 1062.3V1069.3M1000 1060.9V1061.9M1000 1063.7V1071.5M1001 1059.5V1061.4M1001 1063.5V1071.7M1002 1060.1V1068.3M1003 1060.8V1063.4M1003 1065.2V1068.3M1004 1062.4V1062.9M1004 1064.0V1069.6M1005 1062.1V1063.3M1005 1065.2V1070.5M1006 1059.7V1071.3M1007 1061.0V1072.3M1008 1062.9V1063.5M1008 1065.4V1068.6M1009 1060.1V1064.0M1009 1065.4V1072.2M1010 1063.3V1064.6M1010 1066.3V1072.1M1011 1061.4V1063.1M1011 1065.3V1069.0M1012 1062.2V1074.2M1013 1059.5V1072.1M1014 1059.8V1060.6M1014 1061.7V1068.8M1015 1059.9V1070.6M1016 1062.5V1064.7M1016 1065.8V1072.1M1017 1060.2V1061.2M1017 1063.4V1071.6M1018 1063.3V1064.0M1018 1065.7V1072.2M1019 1059.6V1071.0M1020 1062.2V1065.2M1020 1066.4V1071.9M1021 1061.7V1064.8M1021 1066.4V1072.0M1022 1061.7V1063.9M1022 1065.3V1070.0M1023 1062.5V1070.6M1024 1060.7V1068.7M1025 1063.0V1072.8M1026 1060.7V1072.6M1027 1061.8V1069.0M1028 1060.7V1063.4M1028 1065.8V1071.3M1029 1063.1V1066.0M1029 1068.2V1071.6M1030 1061.7V1071.7M1031 1062.9V1069.5M1032 1060.6V1069.6M1033 1061.9V1062.9M1033 1065.3V1072.4M1034 1062.4V1071.1M1035 1061.4V1063.0M1035 1065.3V1071.4M1036 1059.2V1061.9M1036 1064.1V1072.0M1037 1060.6V1071.5M1038 1063.3V1063.8M1038 1066.0V1071.0M1039 1060.6V1061.7M1039 1063.6V1070.3M1040 1063.2V1064.2M1040 1066.4V1073.1M1041 1061.2V1063.9M1041 1066.3V1071.0M1042 1060.4V1061.0M1042 1062.2V1070.3M1043 1061.4V1062.2M1043 1064.6V1071.7M1044 1059.6V1070.8M1045 1060.4V1061.3M1045 1063.5V1070.5M1046 1062.9V1069.4M1047 1061.1V1063.0M1047 1064.0V1071.8M1048 1062.6V1068.5M1049 1060.9V1063.7M1049 1065.7V1070.7M1050 1060.2V1071.9M1051 1061.5V1062.0M1051 1064.3V1071.2M1052 1059.9V1070.0M1053 1061.6V1062.4M1053 1064.2V1070.9M1054 1060.3V1061.3M1054 1063.4V1071.2M1055 1060.2V1071.4M1056 1061.1V1071.3M1057 1062.7V1064.4M1057 1066.4V1068.4M1058 1060.1V1070.6M1059 1062.0V1063.1M1059 1064.4V1071.8M1060 1060.1V1069.3M1061 1060.0V1069.8M1062 1060.2V1063.6M1062 1065.8V1071.5M1063 1061.4V1071.3M1064 1058.1V1062.6M1064 1064.7V1071.8M1065 1059.1V1061.9M1065 1063.7V1069.1M1066 1061.3V1063.4M1066 1065.2V1068.8M1067 1062.5V1064.1M1067 1065.6V1070.9M1068 1061.6V1067.3M1069 1061.4V1062.6M1069 1064.1V1068.6M1070 1059.3V1060.5M1070 1062.0V1071.4M1071 1059.9V1069.8M1072 1059.2V1070.6M1073 1060.0V1062.3M1073 1063.9V1068.8M1074 1059.2V1060.2M1074 1062.5V1069.3M1075 1057.8V1060.8M1075 1062.8V1068.9M1076 1062.2V1068.6M1077 1061.0V1071.6M1078 1060.3V1070.1M1079 1060.5V1069.1M1080 1059.4V1060.0M1080 1061.2V1068.7M1081 1058.9V1062.5M1081 1065.0V1069.5M1082 1059.4V1069.7M1083 1059.2V1070.9M1084 1061.9V1063.4M1084 1064.4V1069.0M1085 1059.3V1060.3M1085 1061.3V1071.1M1086 1060.1V1063.2M1086 1064.6V1070.5M1087 1061.3V1067.8M1088 1059.5V1069.1M1089 1061.5V1071.5M1090 1060.9V1061.9M1090 1064.0V1071.0M1091 1059.4V1070.5M1092 1059.5V1062.4M1092 1063.9V1068.7M1093 1059.1V1067.5M1094 1060.3V1067.2M1095 1060.9V1068.2M1096 1061.1V1070.3M1097 1060.6V1070.6M1098 1059.5V1060.4M1098 1062.3V1070.6M1099 1060.2V1061.3M1099 1062.4V1070.6M1100 1060.0V1061.5M1100 1062.6V1070.8M1101 1059.8V1062.4M1101 1064.5V1070.7M1102 1061.6V1070.7M1103 1058.8V1069.7M1104 1059.7V1061.6M1104 1063.9V1070.4M1105 1061.7V1068.1M1106 1060.7V1071.3M1107 1059.0V1061.9M1107 1064.1V1070.6M1108 1059.6V1071.0M1109 1059.4V1069.0M1110 1059.4V1068.0M1111 1059.3V1061.3M1111 1063.0V1070.3M1112 1059.2V1067.6M1113 1058.4V1059.0M1113 1060.3V1069.0M1114 1061.3V1062.7M1114 1064.7V1070.0M1115 1058.2V1060.1M1115 1062.3V1069.3M1116 1060.6V1067.7M1117 1060.2V1068.9M1118 1058.7V1067.3M1119 1060.7V1062.4M1119 1064.4V1070.3M1120 1060.6V1070.0M1121 1060.7V1063.4M1121 1065.4V1069.0M1122 1061.8V1063.8M1122 1066.1V1068.0M1123 1054.4V1070.1M1124 1059.3V1067.4M1125 1059.2V1062.5M1125 1064.0V1070.9M1126 1059.6V1070.9M1127 1056.6V1058.4M1127 1060.8V1069.7M1128 1061.1V1070.8M1129 1061.4V1063.4M1129 1064.6V1069.7M1130 1060.4V1062.6M1130 1064.7V1070.1M1131 1061.5V1063.1M1131 1064.9V1068.8M1132 1059.4V1063.4M1132 1065.5V1071.7M1133 1061.1V1063.9M1133 1065.0V1071.2M1134 1061.5V1071.5M1135 1059.0V1068.5M1136 1061.0V1071.0M1137 1061.5V1069.1M1138 1058.9V1062.4M1138 1063.7V1070.0M1139 1062.0V1068.9M1140 1059.2V1062.6M1140 1065.0V1070.3M1141 1059.9V1061.4M1141 1062.4V1068.4M1142 1058.8V1060.5M1142 1062.9V1067.9M1143 1059.6V1070.1M1144 1062.4V1070.4M1145 1059.1V1060.2M1145 1062.3V1068.2M1146 1058.8V1059.9M1146 1061.0V1072.4M1147 1060.4V1068.6M1148 1058.6V1067.2M1149 1062.4V1068.3M1150 1061.8V1063.0M1150 1064.2V1068.6M1151 1059.4V1060.8M1151 1062.4V1068.9M1152 1061.5V1073.9M1153 1061.5V1071.1M1154 1060.3V1071.8M1155 1060.3V1069.4M1156 1062.6V1070.2M1157 1060.1V1069.7M1158 1062.2V1070.3M1159 1058.4V1070.0M1160 1059.2V1060.7M1160 1062.3V1068.4M1161 1062.1V1070.8M1162 1062.0V1069.9M1163 1061.0V1062.8M1163 1064.1V1068.2M1164 1058.6V1070.7M1165 1060.1V1062.6M1165 1064.5V1070.9M1166 1058.6V1062.0M1166 1064.3V1070.1M1167 1057.8V1074.1M1168 1058.1V1067.8M1169 1061.9V1064.2M1169 1066.0V1069.7M1170 1057.8V1070.3M1171 1059.3V1070.6M1172 1059.6V1062.0M1172 1064.2V1068.3M1173 1058.7V1069.1M1174 1058.5V1069.1M1175 1059.1V1070.4M1176 1058.7V1070.1M1177 1057.7V1067.6M1178 1059.3V1068.0M1179 1060.8V1066.8M1180 1059.8V1067.8M1181 1058.4V1068.0M1182 1058.1V1068.7M1183 1058.9V1070.4M1184 1059.2V1072.6M1185 1058.5V1060.6M1185 1061.8V1069.9M1186 1058.1V1061.7M1186 1064.0V1069.0M1187 1060.1V1061.4M1187 1063.2V1067.8M1188 1058.2V1059.3M1188 1061.5V1068.3M1189 1055.2V1069.6M1190 1061.3V1062.0M1190 1063.4V1067.5M1191 1059.4V1068.9M1192 1059.4V1061.2M1192 1063.1V1068.2M1193 1059.6V1070.8M1194 1059.3V1071.0M1195 1061.4V1063.1M1195 1065.4V1068.4M1196 1061.6V1070.8M1197 1060.7V1061.6M1197 1063.9V1068.4M1198 1059.5V1060.9M1198 1063.2V1069.4M1199 1061.0V1067.3M1200 1057.1V1058.2M1200 1059.8V1070.9M1201 1060.9V1069.7M1202 1060.0V1060.9M1202 1062.1V1068.3M1203 1060.4V1071.1M1204 1059.2V1070.4M1205 1060.9V1061.5M1205 1063.6V1070.6M1206 1057.6V1070.6M1207 1060.5V1070.5M1208 1062.3V1069.7M1209 1061.1V1069.7M1210 1062.1V1064.9M1210 1066.4V1072.1M1211 1061.1V1070.8M1212 1062.0V1072.2M1213 1062.8V1071.1M1214 1060.3V1061.9M1214 1064.0V1071.9M1215 1061.1V1071.8M1216 1060.3V1063.3M1216 1064.7V1069.4M1217 1060.0V1063.6M1217 1064.8V1071.9M1218 1059.8V1071.3M1219 1063.2V1070.1M1220 1062.4V1070.2M1221 1063.2V1072.6M1222 1062.3V1069.9M1223 1061.8V1070.7M1224 1060.8V1064.2M1224 1065.5V1071.5M1225 1061.3V1068.9M1226 1062.7V1072.0M1227 1059.5V1069.7M1228 1060.2V1071.2M1229 1059.9V1072.2M1230 1061.2V1062.1M1230 1063.3V1069.7M1231 1063.3V1071.2M1232 1060.5V1063.6M1232 1065.8V1071.5M1233 1061.9V1071.2M1234 1061.2V1071.9M1235 1061.0V1071.4M1236 1062.5V1065.3M1236 1067.5V1071.6M1237 1061.1V1062.8M1237 1064.6V1073.1M1238 1060.4V1073.2M1239 1062.6V1071.2M1240 1061.5V1063.1M1240 1064.8V1072.6M1241 1059.7V1062.1M1241 1063.6V1071.8M1242 1060.4V1071.7M1243 1060.7V1070.4M1244 1062.1V1064.0M1244 1065.4V1070.0M1245 1060.5V1063.2M1245 1065.3V1072.0M1246 1059.9V1071.5M1247 1062.2V1071.8M1248 1059.5V1071.3M1249 1060.0V1071.5M1250 1063.2V1069.6M1251 1061.3V1069.1M1252 1059.7V1069.1M1253 1060.8V1061.6M1253 1063.5V1071.6M1254 1063.3V1064.7M1254 1066.7V1071.7M1255 1061.6V1070.8M1256 1060.9V1073.0M1257 1061.0V1069.5M1258 1060.9V1072.3M1259 1062.1V1064.2M1259 1066.1V1070.0M1260 1054.9V1057.9M1260 1060.1V1072.1M1261 1057.6V1061.0M1261 1063.3V1071.7M1262 1061.1V1068.5M1263 1060.4V1069.7M1264 1061.0V1070.6M1265 1060.6V1062.5M1265 1064.7V1072.1M1266 1063.0V1071.5M1267 1063.8V1064.4M1267 1065.7V1071.6M1268 1063.5V1072.0M1269 1060.5V1072.0M1270 1053.7V1071.3M1271 1061.8V1062.3M1271 1063.7V1071.1M1272 1063.9V1065.1M1272 1066.4V1072.2M1273 1063.2V1071.4M1274 1062.3V1069.4M1275 1061.5V1063.6M1275 1065.6V1069.1M1276 1063.5V1070.6M1277 1061.0V1061.9M1277 1064.1V1071.8M1278 1061.7V1062.5M1278 1064.4V1070.0M1279 1057.2V1059.6M1279 1061.3V1072.5M1280 1060.4V1070.7M1281 1060.9V1072.6M1282 1059.4V1070.5M1283 1060.8V1070.2M1284 1059.5V1062.7M1284 1064.9V1071.2M1285 1062.0V1069.8M1286 1061.4V1061.8M1286 1062.9V1068.1M1287 1060.8V1070.2M1288 1059.5V1071.2M1289 1061.2V1063.6M1289 1064.6V1070.0M1290 1063.2V1070.6M1291 1059.6V1062.4M1291 1064.9V1070.9M1292 1060.1V1072.0M1293 1060.8V1062.8M1293 1065.1V1072.3M1294 1056.3V1071.7M1295 1063.3V1064.1M1295 1065.3V1071.2M1296 1061.9V1064.2M1296 1065.3V1070.8M1297 1061.0V1065.0M1297 1066.5V1072.5M1298 1063.8V1072.1M1299 1063.1V1070.5M1300 1061.2V1070.9M1301 1061.4V1070.5M1302 1064.0V1070.1M1303 1061.1V1064.2M1303 1066.7V1072.1M1304 1060.7V1071.7M1305 1059.4V1068.8M1306 1059.8V1062.1M1306 1063.5V1070.8M1307 1060.4V1071.9M1308 1058.4V1062.6M1308 1064.1V1071.9M1309 1060.0V1068.8M1310 1059.8V1071.0M1311 1059.7V1060.4M1311 1061.8V1070.8M1312 1060.8V1061.6M1312 1063.5V1070.6M1313 1059.1V1069.4M1314 1060.6V1061.5M1314 1063.7V1070.5M1315 1059.4V1062.4M1315 1064.8V1069.9M1316 1061.2V1068.6M1317 1058.4V1067.6M1318 1060.1V1069.5M1319 1058.9V1060.3M1319 1061.6V1067.0M1320 1060.9V1062.6M1320 1064.5V1067.8M1321 1058.9V1061.1M1321 1063.5V1069.1M1322 1058.7V1067.4M1323 1060.2V1071.0M1324 1061.0V1070.8M1325 1059.4V1060.2M1325 1062.6V1068.8M1326 1060.7V1070.2M1327 1059.9V1068.9M1328 1061.3V1067.7M1329 1062.2V1069.4M1330 1059.0V1069.3M1331 1060.6V1063.2M1331 1064.5V1071.0M1332 1061.2V1070.2M1333 1059.7V1061.1M1333 1062.8V1068.5M1334 1060.2V1061.8M1334 1063.7V1068.8M1335 1059.0V1059.5M1335 1061.6V1067.9M1336 1058.6V1069.3M1337 1059.7V1067.4M1338 1061.1V1070.2M1339 1058.9V1061.7M1339 1062.8V1068.3M1340 1058.2V1059.1M1340 1061.6V1069.3M1341 1059.3V1062.6M1341 1064.0V1068.9M1342 1059.4V1060.0M1342 1062.2V1067.9M1343 1062.0V1064.5M1343 1066.6V1069.3M1344 1061.2V1068.0M1345 1059.4V1060.9M1345 1063.3V1066.6M1346 1057.4V1060.9M1346 1062.8V1067.9M1347 1058.3V1059.9M1347 1061.3V1069.1M1348 1059.6V1060.5M1348 1061.7V1067.8M1349 1058.8V1066.0M1350 1058.0V1060.5M1350 1061.5V1068.7M1351 1060.7V1061.7M1351 1063.4V1067.4M1352 1058.8V1061.1M1352 1062.6V1070.8M1353 1058.4V1069.9M1354 1061.4V1070.0M1355 1060.0V1061.9M1355 1063.1V1068.7M1356 1061.0V1068.5M1357 1058.6V1067.8M1358 1059.2V1067.1M1359 1058.4V1059.4M1359 1061.6V1070.8M1360 1061.2V1062.3M1360 1064.0V1070.8M1361 1059.0V1068.5M1362 1059.1V1069.5M1363 1060.7V1069.1M1364 1060.1V1063.2M1364 1064.4V1069.2M1365 1056.6V1058.6M1365 1060.9V1068.3M1366 1062.6V1063.3M1366 1064.7V1074.1M1367 1060.3V1062.1M1367 1064.1V1068.9M1368 1059.6V1067.5M1369 1059.5V1070.2M1370 1059.7V1062.7M1370 1064.2V1071.1M1371 1060.0V1062.5M1371 1064.4V1068.4M1372 1061.4V1062.3M1372 1064.1V1068.0M1373 1060.6V1068.3M1374 1059.4V1061.6M1374 1063.4V1069.1M1375 1059.0V1069.4M1376 1061.0V1071.2M1377 1060.3V1071.4M1378 1059.0V1069.4M1379 1060.4V1063.6M1379 1065.9V1069.8M1380 1062.1V1064.2M1380 1065.9V1070.1M1381 1059.5V1071.1M1382 1059.3V1071.3M1383 1060.0V1060.7M1383 1061.9V1069.3M1384 1062.6V1068.6M1385 1060.1V1068.1M1386 1058.5V1067.9M1387 1058.7V1071.0M1388 1058.7V1070.5M1389 1061.4V1062.5M1389 1064.0V1067.2M1390 1058.7V1059.3M1390 1061.2V1068.0M1391 1059.5V1069.1M1392 1057.7V1059.5M1392 1061.5V1071.3M1393 1053.1V1057.9M1393 1059.2V1070.4M1394 1058.4V1067.3M1395 1059.6V1062.3M1395 1063.9V1068.9M1396 1062.3V1064.0M1396 1066.4V1068.4M1397 1058.1V1068.8M1398 1060.5V1062.1M1398 1064.5V1071.3M1399 1060.8V1061.3M1399 1062.5V1069.6M1400 1061.1V1063.4M1400 1065.8V1069.8M1401 1061.8V1067.4M1402 1060.7V1063.2M1402 1064.3V1068.6M1403 1057.2V1070.2M1404 1060.1V1061.1M1404 1062.7V1068.8M1405 1059.9V1069.6M1406 1058.3V1069.1M1407 1059.2V1060.2M1407 1061.5V1070.6M1408 1059.4V1062.6M1408 1064.3V1071.4M1409 1056.9V1070.1M1410 1059.1V1071.0M1411 1061.3V1071.1M1412 1061.3V1068.4M1413 1061.0V1067.8M1414 1061.2V1069.5M1415 1059.0V1062.2M1415 1064.6V1070.8M1416 1059.4V1070.5M1417 1062.4V1069.3M1418 1059.0V1061.6M1418 1063.8V1069.6M1419 1059.8V1071.6M1420 1058.7V1062.7M1420 1064.7V1071.2M1421 1059.7V1069.7M1422 1060.4V1069.3M1423 1060.8V1071.2M1424 1059.3V1062.0M1424 1063.9V1071.2M1425 1061.8V1070.7M1426 1062.3V1063.5M1426 1065.4V1070.7M1427 1061.5V1063.1M1427 1064.9V1069.2M1428 1061.1V1068.8M1429 1060.0V1062.2M1429 1064.0V1070.4M1430 1057.7V1060.5M1430 1061.7V1068.7M1431 1061.1V1064.3M1431 1066.7V1070.4M1432 1060.6V1061.2M1432 1062.7V1071.7M1433 1059.9V1060.4M1433 1061.5V1070.1M1434 1061.1V1072.1M1435 1061.6V1063.9M1435 1065.7V1070.0M1436 1059.6V1063.1M1436 1064.6V1071.5M1437 1062.6V1072.1M1438 1059.6V1060.9M1438 1063.3V1069.7M1439 1059.9V1070.4M1440 1058.6V1070.6M1441 1061.5V1063.4M1441 1065.5V1070.4M1442 1061.7V1063.8M1442 1065.6V1069.0M1443 1058.7V1061.4M1443 1063.3V1070.8M1444 1058.3V1067.1M1445 1060.1V1062.9M1445 1064.5V1069.5M1446 1059.5V1070.7M1447 1060.1V1061.5M1447 1063.6V1068.6M1448 1059.5V1061.8M1448 1063.9V1070.4M1449 1062.2V1065.2M1449 1066.7V1071.2M1450 1060.7V1071.4M1451 1061.5V1068.6M1452 1059.2V1061.0M1452 1062.2V1068.4M1453 1061.0V1070.1M1454 1061.7V1063.6M1454 1065.5V1068.0M1455 1062.4V1070.0M1456 1060.2V1062.0M1456 1063.1V1070.6M1457 1059.3V1061.4M1457 1063.8V1070.4M1458 1060.5V1062.2M1458 1063.7V1070.8M1459 1058.2V1059.3M1459 1061.4V1068.7M1460 1060.5V1068.3M1461 1057.6V1058.9M1461 1060.8V1070.3M1462 1062.0V1068.7M1463 1061.0V1071.3M1464 1060.3V1063.4M1464 1065.2V1069.7M1465 1061.7V1064.6M1465 1066.7V1071.0M1466 1061.9V1063.6M1466 1064.8V1069.0M1467 1060.5V1062.1M1467 1064.4V1069.7M1468 1059.2V1069.0M1469 1057.4V1059.0M1469 1060.9V1070.9M1470 1061.8V1062.6M1470 1064.7V1070.7M1471 1061.9V1064.2M1471 1066.3V1071.7M1472 1062.9V1065.7M1472 1068.0V1071.9M1473 1058.8V1062.5M1473 1064.3V1069.7M1474 1059.0V1069.5M1475 1062.4V1065.3M1475 1067.8V1071.2M1476 1060.2V1071.8M1477 1059.4V1062.9M1477 1064.8V1071.1M1478 1062.4V1063.6M1478 1065.1V1069.5M1479 1059.7V1063.7M1479 1065.7V1071.2M1480 1061.1V1071.7M1481 1060.0V1068.9M1482 1059.7V1071.6M1483 1062.7V1065.3M1483 1067.5V1071.4M1484 1062.6V1069.7M1485 1061.4V1062.6M1485 1063.9V1070.1M1486 1060.7V1063.0M1486 1064.5V1072.2M1487 1060.2V1060.8M1487 1063.2V1071.6M1488 1063.3V1065.9M1488 1067.4V1072.1M1489 1061.6V1074.2M1490 1059.5V1070.4M1491 1060.6V1063.7M1491 1065.4V1070.8M1492 1059.3V1069.7M1493 1059.3V1071.4M1494 1057.0V1069.6M1495 1061.1V1063.4M1495 1064.8V1068.2M1496 1058.8V1060.7M1496 1062.0V1070.1M1497 1060.4V1063.0M1497 1064.8V1069.2M1498 1058.4V1067.4M1499 1058.1V1070.3M1500 1057.9V1059.3M1500 1061.2V1070.2M1501 1058.7V1068.1M1502 1060.8V1070.1M1503 1059.0V1068.8M1504 1060.9V1062.4M1504 1064.0V1068.3M1505 1059.1V1062.3M1505 1063.3V1068.8M1506 1060.3V1070.7M1507 1060.2V1062.9M1507 1064.0V1070.7M1508 1060.0V1061.4M1508 1063.7V1068.4M1509 1060.1V1062.5M1509 1064.8V1071.2M1510 1059.1V1070.9M1511 1053.7V1069.6M1512 1060.3V1072.2M1513 1061.0V1064.8M1513 1066.2V1072.5M1514 1062.4V1063.5M1514 1065.8V1069.6M1515 1059.9V1072.3M1516 1060.1V1063.9M1516 1064.9V1072.1M1517 1060.0V1071.7M1518 1062.0V1071.3M1519 1060.1V1064.2M1519 1066.1V1072.3M1520 1060.7V1068.7M1521 1063.0V1065.3M1521 1067.3V1071.3M1522 1059.1V1061.4M1522 1063.6V1071.0M1523 1060.4V1070.7M1524 1060.1V1071.1M1525 1058.9V1061.1M1525 1062.2V1069.2M1526 1062.9V1070.8M1527 1060.7V1069.2M1528 1062.9V1071.5M1529 1061.1V1063.9M1529 1065.4V1069.7M1530 1059.5V1062.9M1530 1064.9V1069.9M1531 1058.9V1061.4M1531 1063.7V1070.6M1532 1060.3V1070.2M1533 1061.7V1064.5M1533 1066.3V1070.4M1534 1058.8V1061.2M1534 1062.3V1068.6M1535 1059.8V1063.8M1535 1065.1V1071.5M1536 1062.3V1064.6M1536 1066.1V1069.3M1537 1059.1V1060.3M1537 1061.7V1071.6M1538 1058.8V1073.3M1539 1059.5V1060.7M1539 1062.4V1068.2M1540 1062.0V1063.4M1540 1065.4V1068.9M1541 1058.9V1069.4M1542 1060.9V1071.0M1543 1061.1V1061.9M1543 1063.3V1068.1M1544 1059.4V1070.6M1545 1060.1V1060.9M1545 1063.3V1068.2M1546 1059.2V1061.7M1546 1064.1V1068.7M1547 1061.7V1071.3M1548 1061.4V1063.8M1548 1065.9V1068.6M1549 1058.3V1069.7M1550 1059.7V1069.9M1551 1060.4V1069.1M1552 1061.9V1063.6M1552 1065.2V1070.6M1553 1062.6V1070.2M1554 1059.5V1070.5M1555 1061.0V1071.2M1556 1059.3V1060.7M1556 1062.3V1071.9M1557 1059.0V1063.1M1557 1065.6V1071.7M1558 1059.0V1071.8M1559 1059.5V1063.1M1559 1065.1V1070.5M1560 1061.6V1063.0M1560 1064.7V1071.7M1561 1063.3V1065.5M1561 1068.0V1070.6M1562 1061.0V1072.1M1563 1060.5V1072.3M1564 1060.3V1071.1M1565 1061.0V1070.5M1566 1060.2V1070.9M1567 1063.4V1064.5M1567 1066.8V1068.7M1568 1060.2V1061.9M1568 1063.5V1071.7M1569 1060.6V1061.7M1569 1063.5V1070.5M1570 1059.9V1071.0M1571 1063.3V1070.9M1572 1060.3V1061.6M1572 1064.0V1071.6M1573 1059.2V1067.8M1574 1061.6V1072.0M1575 1060.5V1070.5M1576 1061.5V1064.1M1576 1066.0V1071.0M1577 1059.6V1062.0M1577 1064.2V1069.7M1578 1060.5V1063.5M1578 1065.9V1070.1M1579 1062.0V1065.8M1579 1067.7V1073.3M1580 1059.8V1070.4M1581 1059.8V1060.9M1581 1063.0V1070.0M1582 1060.1V1071.3M1583 1062.4V1064.8M1583 1066.7V1070.6M1584 1056.7V1059.2M1584 1061.0V1069.7M1585 1059.7V1062.3M1585 1063.3V1071.3M1586 1062.2V1070.5M1587 1058.5V1061.5M1587 1062.9V1069.3M1588 1062.0V1062.7M1588 1064.6V1071.4M1589 1060.4V1069.5M1590 1061.6V1064.7M1590 1066.6V1071.4M1591 1060.6V1062.7M1591 1064.8V1069.3M1592 1059.8V1068.8M1593 1060.4V1069.3M1594 1059.6V1068.1M1595 1061.9V1069.9M1596 1060.2V1061.4M1596 1062.9V1071.0M1597 1059.8V1060.9M1597 1063.1V1069.9M1598 1057.9V1059.8M1598 1061.3V1071.0M1599 1059.3V1070.9M1600 1056.4V1070.1M1601 1060.8V1069.7M1602 1061.2V1071.2M1603 1059.6V1061.1M1603 1063.2V1070.0M1604 1060.7V1071.3M1605 1060.7V1068.6M1606 1061.6V1064.4M1606 1065.8V1069.9M1607 1059.5V1070.8M1608 1060.3V1071.4M1609 1060.9V1062.7M1609 1064.6V1069.9M1610 1058.5V1060.6M1610 1062.8V1069.9M1611 1060.7V1069.9M1612 1060.0V1063.0M1612 1064.4V1071.6M1613 1060.2V1070.2M1614 1059.4V1070.1M1615 1061.9V1068.8M1616 1060.1V1071.1M1617 1061.8V1071.1M1618 1059.2V1062.2M1618 1064.2V1071.3M1619 1059.5V1062.0M1619 1063.0V1070.1M1620 1061.8V1069.9M1621 1060.9V1069.3M1622 1060.1V1070.0M1623 1059.8V1061.5M1623 1063.3V1070.2M1624 1061.0V1061.8M1624 1063.4V1069.2M1625 1060.6V1069.0M1626 1059.6V1062.4M1626 1063.8V1071.4M1627 1061.9V1063.3M1627 1064.8V1068.7M1628 1062.3V1064.1M1628 1066.1V1069.5M1629 1060.9V1069.2M1630 1060.2V1070.8M1631 1061.2V1064.6M1631 1066.5V1072.4M1632 1061.5V1064.9M1632 1066.6V1071.5M1633 1062.9V1064.7M1633 1066.3V1069.0M1634 1060.8V1063.9M1634 1065.3V1070.8M1635 1063.7V1064.4M1635 1065.5V1069.7M1636 1061.0V1063.4M1636 1065.0V1070.6M1637 1060.9V1063.6M1637 1064.7V1071.1M1638 1060.4V1062.1M1638 1063.6V1070.6M1639 1062.5V1069.6M1640 1061.3V1063.1M1640 1064.7V1071.5M1641 1063.4V1065.7M1641 1067.3V1072.5M1642 1060.6V1069.8M1643 1060.3V1070.6M1644 1062.1V1064.1M1644 1065.3V1071.4M1645 1060.3V1061.7M1645 1062.8V1073.5M1646 1060.7V1062.7M1646 1063.8V1073.2M1647 1059.3V1060.6M1647 1062.0V1070.3M1648 1058.4V1060.7M1648 1061.9V1069.4M1649 1060.2V1061.9M1649 1063.0V1070.8M1650 1061.6V1071.6M1651 1061.9V1064.8M1651 1066.6V1072.0M1652 1060.8V1062.5M1652 1064.5V1068.7M1653 1060.2V1069.9M1654 1054.1V1070.9M1655 1060.3V1063.0M1655 1065.2V1070.3M1656 1061.2V1070.9M1657 1061.2V1071.8M1658 1059.2V1071.4M1659 1060.9V1070.9M1660 1059.2V1062.9M1660 1064.4V1070.7M1661 1060.2V1069.1M1662 1060.1V1062.5M1662 1064.4V1069.1M1663 1059.0V1061.9M1663 1064.1V1068.9M1664 1058.2V1070.7M1665 1060.5V1067.5M1666 1058.9V1061.9M1666 1064.3V1070.2M1667 1060.2V1061.7M1667 1064.1V1070.3M1668 1060.6V1069.9M1669 1059.8V1069.7M1670 1062.3V1069.4M1671 1058.4V1070.0M1672 1060.0V1070.2M1673 1058.6V1069.9M1674 1057.2V1067.8M1675 1061.3V1062.4M1675 1063.5V1071.1M1676 1060.1V1071.4M1677 1059.6V1070.5M1678 1061.9V1065.0M1678 1067.4V1070.6M1679 1059.0V1060.5M1679 1061.7V1070.2M1680 1060.6V1061.4M1680 1062.8V1070.3M1681 1060.5V1069.7M1682 1059.8V1060.3M1682 1061.4V1069.2M1683 1059.6V1062.3M1683 1064.3V1071.3M1684 1060.1V1063.0M1684 1064.3V1071.4M1685 1061.4V1071.6M1686 1060.0V1069.3M1687 1058.8V1060.9M1687 1062.9V1069.4M1688 1061.0V1070.7M1689 1062.2V1071.0M1690 1060.0V1070.8M1691 1059.2V1062.3M1691 1063.5V1069.1M1692 1060.2V1069.4M1693 1061.1V1068.4M1694 1059.6V1061.3M1694 1063.6V1068.7M1695 1062.5V1068.5M1696 1059.7V1070.3" stroke="#bcbd22" stroke-width="1" fill="none" opacity="1"/><path d="M909 1218.7V1238.0M910 1222.8V1227.1M910 1228.2V1241.1M911 1223.6V1235.5M912 1220.7V1240.3M913 1217.2V1237.8M914 1221.7V1233.9M915 1223.2V1224.1M915 1225.3V1232.4M916 1221.1V1233.7M917 1216.7V1238.0M918 1216.6V1221.6M918 1223.9V1236.2M919 1211.3V1237.7M920 1214.8V1220.3M920 1222.2V1234.9M921 1214.0V1219.4M921 1221.9V1234.9M922 1218.6V1222.7M922 1224.1V1233.2M923 1215.4V1233.2M924 1218.2V1221.9M924 1223.3V1232.2M925 1219.0V1237.1M926 1217.8V1238.4M927 1220.5V1235.1M928 1206.7V1236.2M929 1219.7V1232.7M930 1215.5V1231.8M931 1216.4V1235.7M932 1221.2V1222.5M932 1224.7V1232.0M933 1221.3V1237.7M934 1219.5V1232.8M935 1218.6V1238.9M936 1205.8V1212.1M936 1213.9V1237.3M937 1215.9V1238.2M938 1218.0V1237.6M939 1218.6V1236.1M940 1216.9V1223.4M940 1225.0V1237.3M941 1221.3V1239.6M942 1220.3V1224.6M942 1226.1V1240.5M943 1220.4V1241.8M944 1219.3V1224.4M944 1226.8V1239.0M945 1220.3V1223.1M945 1225.3V1235.4M946 1223.8V1235.9M947 1213.7V1220.8M947 1223.0V1238.3M948 1224.3V1234.5M949 1212.2V1233.8M950 1220.2V1224.3M950 1226.0V1238.5M951 1220.9V1237.5M952 1218.9V1233.6M953 1217.2V1219.2M953 1220.9V1235.4M954 1223.5V1236.5M955 1218.1V1241.3M956 1223.2V1239.9M957 1223.0V1227.7M957 1230.0V1240.7M958 1224.0V1228.6M958 1230.9V1238.2M959 1222.8V1225.5M959 1226.7V1236.2M960 1219.0V1221.4M960 1223.5V1241.2M961 1218.6V1242.2M962 1218.7V1222.5M962 1224.7V1241.5M963 1223.2V1239.8M964 1220.1V1240.7M965 1223.6V1228.7M965 1230.8V1242.3M966 1225.4V1228.1M966 1230.3V1239.4M967 1223.3V1228.5M967 1230.1V1240.6M968 1217.9V1223.2M968 1225.3V1239.7M969 1225.5V1241.0M970 1223.2V1224.4M970 1226.8V1242.4M971 1219.8V1241.7M972 1225.4V1229.2M972 1231.3V1240.9M973 1225.6V1230.3M973 1232.8V1240.7M974 1215.8V1223.7M974 1226.1V1240.2M975 1219.3V1242.6M976 1225.3V1241.6M977 1224.1V1236.1M978 1223.8V1241.2M979 1222.8V1243.3M980 1227.3V1238.4M981 1221.6V1224.7M981 1225.8V1239.5M982 1219.8V1225.6M982 1227.5V1242.6M983 1220.0V1221.2M983 1222.4V1239.9M984 1220.9V1241.1M985 1224.2V1240.4M986 1226.1V1228.2M986 1229.3V1241.6M987 1219.5V1221.5M987 1223.4V1236.5M988 1223.8V1238.9M989 1224.2V1228.7M989 1229.7V1239.9M990 1221.6V1225.8M990 1227.7V1239.1M991 1222.3V1242.6M992 1225.3V1229.2M992 1231.6V1240.2M993 1225.4V1230.4M993 1232.1V1239.9M994 1223.1V1227.2M994 1228.9V1240.5M995 1218.4V1222.2M995 1224.1V1234.8M996 1219.1V1222.2M996 1224.2V1237.4M997 1222.4V1239.8M998 1220.3V1224.3M998 1225.5V1241.8M999 1221.3V1237.2M1000 1224.3V1239.6M1001 1221.2V1238.8M1002 1224.0V1240.7M1003 1219.3V1224.7M1003 1226.7V1235.9M1004 1219.2V1241.7M1005 1217.3V1219.2M1005 1221.4V1239.9M1006 1218.3V1225.8M1006 1228.1V1240.0M1007 1217.6V1234.9M1008 1222.2V1236.7M1009 1222.6V1223.7M1009 1225.2V1237.5M1010 1207.0V1214.7M1010 1216.6V1235.1M1011 1217.2V1222.6M1011 1223.7V1239.1M1012 1222.6V1234.1M1013 1216.8V1223.9M1013 1225.2V1238.4M1014 1217.7V1232.6M1015 1217.5V1221.3M1015 1223.6V1237.6M1016 1220.9V1238.9M1017 1222.2V1225.9M1017 1228.2V1235.1M1018 1216.9V1217.7M1018 1219.8V1232.4M1019 1221.0V1224.6M1019 1226.4V1239.3M1020 1216.2V1220.4M1020 1221.9V1238.2M1021 1217.9V1234.5M1022 1220.1V1222.3M1022 1223.9V1233.8M1023 1220.4V1222.6M1023 1224.7V1233.6M1024 1220.7V1223.8M1024 1225.4V1236.3M1025 1223.0V1226.7M1025 1228.5V1239.9M1026 1208.2V1210.4M1026 1212.8V1237.6M1027 1217.1V1237.1M1028 1217.0V1220.1M1028 1222.2V1239.8M1029 1216.1V1239.6M1030 1212.4V1216.4M1030 1217.9V1239.9M1031 1223.7V1225.6M1031 1227.3V1235.2M1032 1220.0V1229.3M1032 1231.0V1246.8M1033 1221.5V1223.3M1033 1224.7V1236.9M1034 1221.2V1234.9M1035 1218.4V1240.0M1036 1211.2V1238.2M1037 1220.2V1238.3M1038 1220.7V1222.4M1038 1223.6V1239.0M1039 1222.0V1226.3M1039 1227.5V1240.5M1040 1221.8V1241.0M1041 1223.3V1240.6M1042 1222.3V1226.6M1042 1228.2V1238.3M1043 1224.3V1240.6M1044 1220.2V1223.2M1044 1224.9V1240.4M1045 1213.7V1236.3M1046 1217.1V1223.6M1046 1225.2V1237.4M1047 1218.2V1221.5M1047 1223.9V1233.9M1048 1219.5V1233.7M1049 1222.8V1227.0M1049 1228.5V1237.3M1050 1219.1V1222.1M1050 1223.4V1232.4M1051 1218.0V1223.5M1051 1225.0V1237.9M1052 1221.6V1225.0M1052 1227.1V1235.3M1053 1218.7V1238.9M1054 1212.3V1235.2M1055 1219.1V1224.1M1055 1225.3V1239.3M1056 1217.6V1235.8M1057 1217.4V1219.4M1057 1221.1V1232.8M1058 1219.4V1237.2M1059 1215.7V1234.3M1060 1217.8V1222.7M1060 1224.2V1238.1M1061 1212.9V1233.9M1062 1222.4V1225.0M1062 1227.5V1235.6M1063 1222.3V1225.3M1063 1227.4V1237.9M1064 1215.5V1240.0M1065 1211.6V1219.2M1065 1221.1V1236.9M1066 1222.0V1236.1M1067 1217.2V1238.0M1068 1219.2V1221.1M1068 1223.2V1237.7M1069 1210.9V1213.7M1069 1215.2V1238.7M1070 1214.8V1218.5M1070 1219.8V1238.9M1071 1219.7V1225.8M1071 1227.1V1237.3M1072 1219.3V1222.4M1072 1223.5V1235.8M1073 1218.8V1237.5M1074 1220.0V1224.3M1074 1225.6V1237.6M1075 1218.3V1222.8M1075 1225.1V1236.6M1076 1220.1V1225.8M1076 1226.9V1240.4M1077 1212.5V1240.2M1078 1220.1V1238.9M1079 1218.2V1233.8M1080 1222.4V1225.5M1080 1227.2V1236.7M1081 1223.2V1234.7M1082 1221.9V1224.7M1082 1227.0V1237.9M1083 1220.4V1241.6M1084 1211.8V1219.5M1084 1221.1V1240.0M1085 1218.0V1237.0M1086 1218.5V1236.1M1087 1221.0V1225.6M1087 1226.7V1238.8M1088 1220.0V1238.4M1089 1217.1V1239.8M1090 1218.2V1240.3M1091 1220.6V1233.5M1092 1218.3V1241.9M1093 1218.9V1240.3M1094 1224.6V1237.7M1095 1219.1V1239.0M1096 1217.4V1220.5M1096 1221.5V1239.3M1097 1218.4V1225.8M1097 1228.3V1240.9M1098 1218.5V1238.5M1099 1219.7V1222.0M1099 1223.4V1238.5M1100 1220.8V1236.5M1101 1217.7V1220.3M1101 1222.3V1236.4M1102 1222.5V1239.6M1103 1216.2V1220.3M1103 1222.2V1238.7M1104 1219.7V1220.6M1104 1222.6V1237.3M1105 1219.6V1221.1M1105 1222.7V1241.1M1106 1221.1V1226.1M1106 1227.5V1238.0M1107 1219.5V1222.3M1107 1223.8V1237.3M1108 1212.7V1238.9M1109 1223.4V1225.3M1109 1227.5V1238.1M1110 1224.4V1235.5M1111 1218.1V1240.7M1112 1224.1V1238.3M1113 1222.9V1238.9M1114 1222.8V1240.6M1115 1220.9V1241.4M1116 1220.7V1223.5M1116 1224.5V1237.7M1117 1222.3V1223.8M1117 1225.7V1241.0M1118 1218.9V1234.6M1119 1221.8V1223.3M1119 1224.4V1238.2M1120 1220.2V1241.1M1121 1220.3V1221.6M1121 1223.4V1242.3M1122 1220.6V1240.3M1123 1218.7V1222.6M1123 1224.6V1235.7M1124 1222.3V1236.7M1125 1220.7V1239.6M1126 1218.9V1238.2M1127 1220.5V1225.5M1127 1226.9V1239.4M1128 1219.5V1238.2M1129 1210.8V1234.3M1130 1219.0V1237.3M1131 1221.7V1240.9M1132 1218.6V1237.5M1133 1217.8V1236.9M1134 1217.5V1222.1M1134 1224.2V1237.1M1135 1220.4V1236.2M1136 1213.2V1218.1M1136 1219.8V1237.3M1137 1221.3V1236.6M1138 1221.8V1223.6M1138 1225.9V1235.3M1139 1217.9V1240.2M1140 1211.9V1218.8M1140 1220.2V1236.6M1141 1217.9V1239.7M1142 1221.6V1234.6M1143 1217.1V1238.5M1144 1218.7V1220.0M1144 1222.3V1240.5M1145 1214.9V1238.7M1146 1220.9V1238.6M1147 1220.6V1225.0M1147 1226.4V1239.5M1148 1221.2V1222.0M1148 1223.5V1235.7M1149 1219.4V1223.2M1149 1224.6V1240.1M1150 1222.5V1238.4M1151 1216.5V1236.6M1152 1220.4V1221.6M1152 1223.5V1238.8M1153 1223.4V1226.4M1153 1227.8V1236.6M1154 1222.4V1239.1M1155 1220.4V1239.3M1156 1218.1V1235.0M1157 1218.9V1241.3M1158 1222.6V1239.9M1159 1222.8V1225.3M1159 1226.5V1237.6M1160 1220.6V1237.2M1161 1224.0V1227.6M1161 1228.7V1239.6M1162 1217.1V1235.5M1163 1221.0V1225.1M1163 1226.9V1239.8M1164 1221.9V1237.9M1165 1220.9V1234.4M1166 1221.6V1224.4M1166 1226.2V1239.1M1167 1219.2V1224.5M1167 1226.6V1237.9M1168 1216.9V1223.0M1168 1224.7V1239.4M1169 1221.8V1226.2M1169 1227.2V1237.5M1170 1220.8V1224.2M1170 1225.3V1237.6M1171 1215.9V1235.1M1172 1216.8V1237.7M1173 1222.1V1225.3M1173 1227.4V1238.9M1174 1216.4V1224.0M1174 1226.4V1238.4M1175 1215.7V1221.4M1175 1222.4V1233.6M1176 1221.4V1225.3M1176 1227.0V1233.1M1177 1214.4V1217.4M1177 1218.5V1233.0M1178 1219.7V1224.6M1178 1226.6V1236.4M1179 1220.6V1237.8M1180 1216.8V1222.7M1180 1223.8V1237.4M1181 1218.7V1219.8M1181 1221.4V1232.9M1182 1217.4V1235.3M1183 1218.1V1221.5M1183 1223.2V1239.4M1184 1220.2V1222.1M1184 1224.3V1238.2M1185 1217.5V1239.3M1186 1218.0V1222.2M1186 1224.2V1236.7M1187 1218.2V1240.7M1188 1222.0V1234.5M1189 1217.3V1238.9M1190 1217.2V1220.9M1190 1222.8V1236.4M1191 1222.2V1228.2M1191 1229.5V1239.9M1192 1216.0V1235.9M1193 1217.3V1221.6M1193 1223.1V1240.5M1194 1217.4V1235.2M1195 1219.9V1225.2M1195 1227.0V1235.2M1196 1215.3V1239.1M1197 1220.4V1239.5M1198 1223.2V1226.0M1198 1228.0V1235.6M1199 1222.4V1234.1M1200 1219.2V1232.7M1201 1217.9V1235.3M1202 1217.5V1239.3M1203 1217.4V1219.2M1203 1220.4V1238.6M1204 1219.3V1224.4M1204 1225.6V1234.8M1205 1216.5V1219.9M1205 1222.1V1237.8M1206 1217.2V1235.2M1207 1216.9V1236.1M1208 1219.8V1221.3M1208 1223.7V1234.7M1209 1215.6V1218.9M1209 1220.7V1237.0M1210 1215.9V1230.1M1211 1218.6V1236.1M1212 1217.1V1236.2M1213 1216.0V1236.7M1214 1219.5V1231.8M1215 1215.0V1219.1M1215 1221.2V1235.0M1216 1215.5V1232.7M1217 1215.6V1231.6M1218 1214.5V1216.2M1218 1218.2V1235.4M1219 1216.8V1219.2M1219 1221.5V1232.4M1220 1212.1V1229.2M1221 1214.3V1236.2M1222 1215.5V1221.6M1222 1222.9V1235.4M1223 1208.4V1234.8M1224 1217.6V1230.0M1225 1217.8V1235.4M1226 1218.3V1235.1M1227 1216.1V1220.7M1227 1222.6V1235.3M1228 1217.9V1222.6M1228 1223.7V1232.4M1229 1217.5V1218.9M1229 1221.4V1237.2M1230 1217.8V1220.5M1230 1222.8V1233.5M1231 1218.3V1237.1M1232 1215.2V1236.2M1233 1204.7V1215.0M1233 1216.6V1236.5M1234 1217.9V1220.7M1234 1222.0V1231.2M1235 1218.9V1224.1M1235 1225.6V1236.4M1236 1218.2V1222.8M1236 1223.9V1236.9M1237 1216.8V1235.9M1238 1215.0V1231.9M1239 1216.0V1235.7M1240 1214.5V1218.8M1240 1220.2V1231.5M1241 1213.4V1232.3M1242 1217.5V1235.6M1243 1218.1V1224.1M1243 1225.3V1235.9M1244 1212.2V1232.9M1245 1215.7V1219.2M1245 1221.0V1235.5M1246 1216.1V1234.5M1247 1216.0V1229.7M1248 1217.3V1232.0M1249 1215.0V1219.1M1249 1220.3V1234.9M1250 1216.7V1230.4M1251 1206.8V1211.5M1251 1213.1V1234.8M1252 1214.1V1233.2M1253 1211.4V1231.7M1254 1217.2V1221.5M1254 1222.9V1230.0M1255 1214.2V1234.5M1256 1211.8V1218.1M1256 1219.8V1233.7M1257 1213.6V1233.4M1258 1211.9V1213.6M1258 1215.3V1234.5M1259 1216.2V1232.6M1260 1218.1V1229.9M1261 1215.6V1222.0M1261 1223.5V1234.9M1262 1216.9V1230.8M1263 1212.5V1216.5M1263 1217.9V1230.9M1264 1211.7V1234.5M1265 1213.2V1230.4M1266 1216.6V1235.5M1267 1215.5V1234.4M1268 1215.7V1218.1M1268 1219.4V1236.2M1269 1220.4V1225.8M1269 1227.4V1236.1M1270 1215.9V1230.9M1271 1216.2V1220.2M1271 1221.9V1229.9M1272 1215.8V1218.3M1272 1219.6V1233.0M1273 1215.4V1219.4M1273 1221.1V1236.2M1274 1213.4V1231.4M1275 1219.3V1221.7M1275 1223.8V1231.8M1276 1214.4V1217.5M1276 1219.1V1237.1M1277 1214.6V1230.9M1278 1220.1V1225.2M1278 1227.4V1236.9M1279 1217.8V1235.3M1280 1214.9V1233.1M1281 1219.4V1222.0M1281 1223.4V1233.1M1282 1220.3V1235.6M1283 1221.1V1222.4M1283 1224.6V1234.7M1284 1214.5V1215.6M1284 1217.3V1231.1M1285 1217.4V1232.3M1286 1215.7V1219.3M1286 1221.1V1231.8M1287 1216.2V1232.7M1288 1213.7V1232.0M1289 1217.4V1234.7M1290 1209.8V1234.3M1291 1218.2V1220.6M1291 1222.9V1235.1M1292 1218.3V1219.3M1292 1221.3V1236.6M1293 1214.6V1237.1M1294 1219.3V1222.3M1294 1223.6V1236.6M1295 1216.3V1235.0M1296 1213.4V1233.4M1297 1213.7V1231.5M1298 1215.9V1231.4M1299 1219.6V1231.2M1300 1220.3V1234.9M1301 1216.9V1219.4M1301 1220.6V1232.3M1302 1213.4V1216.4M1302 1218.6V1234.6M1303 1219.5V1223.3M1303 1224.6V1233.8M1304 1216.1V1231.2M1305 1216.5V1232.2M1306 1205.0V1234.0M1307 1216.5V1233.5M1308 1220.0V1234.8M1309 1216.8V1221.7M1309 1224.0V1232.1M1310 1217.4V1221.1M1310 1223.1V1234.3M1311 1214.2V1220.2M1311 1221.4V1237.8M1312 1214.8V1219.4M1312 1220.8V1234.7M1313 1208.3V1228.5M1314 1214.4V1234.5M1315 1215.5V1219.5M1315 1221.9V1234.3M1316 1215.4V1217.4M1316 1218.5V1231.6M1317 1210.2V1213.7M1317 1215.6V1233.1M1318 1214.1V1217.1M1318 1218.8V1234.7M1319 1215.4V1221.2M1319 1223.1V1233.4M1320 1209.6V1216.5M1320 1218.1V1229.4M1321 1218.3V1221.6M1321 1223.5V1234.2M1322 1216.1V1220.2M1322 1222.0V1233.3M1323 1214.5V1220.0M1323 1222.4V1236.5M1324 1217.2V1219.2M1324 1221.0V1233.6M1325 1208.7V1212.2M1325 1214.6V1230.2M1326 1215.1V1216.8M1326 1218.1V1233.2M1327 1218.8V1220.5M1327 1221.8V1233.4M1328 1214.0V1216.4M1328 1218.1V1235.0M1329 1215.0V1230.3M1330 1214.2V1216.0M1330 1218.1V1229.7M1331 1215.8V1219.3M1331 1220.9V1230.0M1332 1214.7V1235.0M1333 1213.9V1232.2M1334 1214.8V1236.4M1335 1214.5V1219.6M1335 1221.4V1232.7M1336 1216.6V1219.0M1336 1220.1V1235.3M1337 1217.1V1233.1M1338 1215.8V1232.5M1339 1210.4V1235.8M1340 1214.3V1231.0M1341 1214.5V1234.6M1342 1217.3V1219.3M1342 1221.7V1236.3M1343 1219.3V1235.2M1344 1215.9V1220.7M1344 1223.1V1231.3M1345 1215.1V1230.1M1346 1216.6V1234.5M1347 1216.3V1219.0M1347 1220.7V1232.3M1348 1215.9V1232.5M1349 1204.0V1231.0M1350 1216.7V1222.1M1350 1223.1V1233.7M1351 1216.5V1232.2M1352 1211.6V1214.5M1352 1216.7V1234.4M1353 1213.3V1231.5M1354 1210.3V1230.5M1355 1213.4V1234.2M1356 1214.1V1220.1M1356 1221.3V1233.2M1357 1211.0V1217.1M1357 1218.5V1230.7M1358 1215.8V1234.7M1359 1218.8V1232.5M1360 1215.6V1220.3M1360 1221.9V1234.5M1361 1214.6V1235.9M1362 1216.9V1221.3M1362 1222.5V1235.3M1363 1216.7V1218.4M1363 1220.0V1233.2M1364 1214.8V1219.5M1364 1221.4V1229.9M1365 1213.9V1232.2M1366 1215.9V1231.2M1367 1217.7V1222.4M1367 1224.4V1235.7M1368 1215.1V1236.4M1369 1212.4V1215.7M1369 1217.5V1233.7M1370 1213.9V1219.7M1370 1220.7V1233.2M1371 1213.6V1216.8M1371 1218.3V1231.7M1372 1213.5V1234.8M1373 1217.6V1229.7M1374 1215.2V1231.0M1375 1217.3V1223.6M1375 1225.5V1235.9M1376 1215.3V1217.9M1376 1219.5V1236.5M1377 1215.8V1216.8M1377 1218.6V1232.3M1378 1216.7V1230.7M1379 1214.8V1219.1M1379 1220.4V1234.8M1380 1215.6V1217.5M1380 1218.8V1233.9M1381 1216.4V1235.1M1382 1215.0V1234.3M1383 1218.2V1221.1M1383 1223.1V1230.6M1384 1215.2V1236.5M1385 1213.9V1237.1M1386 1214.9V1234.6M1387 1214.2V1217.8M1387 1219.4V1233.0M1388 1216.8V1235.1M1389 1208.6V1231.3M1390 1221.1V1234.4M1391 1215.1V1218.9M1391 1220.6V1235.6M1392 1214.9V1236.9M1393 1213.9V1218.6M1393 1219.7V1233.9M1394 1218.6V1235.9M1395 1213.6V1215.7M1395 1217.4V1235.4M1396 1215.5V1235.8M1397 1216.7V1233.9M1398 1220.6V1236.1M1399 1217.7V1219.9M1399 1222.0V1234.9M1400 1216.4V1217.4M1400 1219.4V1236.3M1401 1212.6V1215.7M1401 1216.7V1238.4M1402 1217.2V1222.9M1402 1224.4V1234.6M1403 1218.2V1238.0M1404 1215.7V1218.1M1404 1219.7V1237.5M1405 1215.4V1235.8M1406 1218.2V1230.7M1407 1218.6V1236.6M1408 1216.4V1219.0M1408 1220.2V1236.2M1409 1218.4V1232.7M1410 1220.1V1222.5M1410 1224.3V1229.8M1411 1215.4V1217.3M1411 1219.6V1229.8M1412 1215.2V1235.1M1413 1215.7V1231.3M1414 1214.1V1235.4M1415 1217.2V1221.9M1415 1224.0V1231.7M1416 1216.8V1220.4M1416 1222.0V1233.8M1417 1213.8V1219.1M1417 1220.7V1229.8M1418 1212.7V1217.3M1418 1218.6V1228.7M1419 1218.1V1223.0M1419 1224.4V1232.5M1420 1213.8V1216.8M1420 1217.9V1233.9M1421 1212.2V1233.8M1422 1213.9V1233.2M1423 1206.9V1231.4M1424 1213.3V1234.4M1425 1213.8V1215.2M1425 1217.0V1232.0M1426 1213.0V1219.3M1426 1220.9V1233.0M1427 1213.2V1234.3M1428 1214.4V1218.2M1428 1219.5V1231.1M1429 1212.5V1228.9M1430 1210.6V1211.9M1430 1213.5V1228.7M1431 1216.5V1219.0M1431 1221.0V1232.6M1432 1216.1V1218.0M1432 1220.4V1228.2M1433 1201.4V1231.7M1434 1216.3V1228.9M1435 1215.7V1231.0M1436 1212.7V1228.1M1437 1213.8V1217.9M1437 1219.0V1228.5M1438 1210.9V1225.4M1439 1209.1V1227.3M1440 1208.2V1231.5M1441 1210.0V1214.2M1441 1216.3V1226.7M1442 1216.3V1217.2M1442 1219.2V1231.8M1443 1209.1V1217.0M1443 1219.0V1235.5M1444 1208.7V1212.9M1444 1214.0V1230.8M1445 1210.0V1215.0M1445 1216.8V1229.6M1446 1213.4V1214.4M1446 1216.5V1232.9M1447 1212.7V1215.9M1447 1217.5V1229.4M1448 1212.9V1229.0M1449 1211.5V1233.4M1450 1212.5V1229.7M1451 1212.0V1232.8M1452 1210.3V1216.8M1452 1218.1V1235.6M1453 1210.8V1228.3M1454 1211.1V1212.7M1454 1214.3V1232.2M1455 1203.4V1229.3M1456 1208.4V1231.5M1457 1211.6V1214.2M1457 1215.3V1231.1M1458 1209.8V1216.2M1458 1217.8V1233.0M1459 1214.5V1221.0M1459 1222.6V1233.1M1460 1217.9V1232.6M1461 1213.5V1217.4M1461 1219.6V1232.4M1462 1212.4V1234.5M1463 1207.9V1231.6M1464 1212.0V1213.3M1464 1214.5V1234.0M1465 1216.4V1221.6M1465 1223.3V1234.1M1466 1212.9V1217.5M1466 1218.7V1230.3M1467 1214.6V1218.5M1467 1219.6V1227.4M1468 1212.3V1216.2M1468 1218.7V1231.5M1469 1213.5V1216.5M1469 1218.4V1232.1M1470 1217.8V1228.3M1471 1213.1V1234.2M1472 1212.4V1229.3M1473 1212.3V1218.2M1473 1220.3V1229.2M1474 1211.4V1227.4M1475 1211.1V1212.1M1475 1213.5V1230.0M1476 1218.3V1231.6M1477 1216.4V1234.7M1478 1210.9V1214.7M1478 1216.8V1228.6M1479 1217.5V1222.2M1479 1224.6V1231.2M1480 1216.2V1219.1M1480 1220.2V1230.6M1481 1210.9V1229.1M1482 1215.1V1231.5M1483 1210.3V1230.7M1484 1212.5V1228.1M1485 1213.8V1219.5M1485 1221.5V1234.4M1486 1214.1V1216.0M1486 1218.2V1234.5M1487 1213.9V1228.6M1488 1212.0V1218.3M1488 1220.0V1232.2M1489 1217.4V1219.0M1489 1220.2V1233.7M1490 1212.6V1213.7M1490 1215.4V1229.3M1491 1215.1V1235.9M1492 1218.2V1220.4M1492 1222.6V1232.4M1493 1212.5V1232.5M1494 1214.7V1233.6M1495 1214.2V1232.3M1496 1214.3V1234.8M1497 1214.0V1235.4M1498 1217.7V1234.3M1499 1215.7V1229.8M1500 1214.0V1219.0M1500 1220.4V1235.3M1501 1213.4V1232.1M1502 1217.6V1230.1M1503 1214.1V1232.6M1504 1218.3V1220.6M1504 1223.0V1231.9M1505 1213.4V1216.4M1505 1218.9V1232.0M1506 1213.5V1217.4M1506 1218.7V1228.8M1507 1211.2V1217.5M1507 1219.6V1230.6M1508 1211.6V1232.4M1509 1214.2V1217.9M1509 1220.3V1234.7M1510 1213.9V1230.4M1511 1217.2V1235.8M1512 1213.4V1215.6M1512 1217.5V1232.5M1513 1215.4V1220.8M1513 1222.0V1231.8M1514 1204.0V1208.0M1514 1210.3V1235.5M1515 1214.1V1236.3M1516 1217.9V1237.0M1517 1215.0V1234.9M1518 1218.7V1232.2M1519 1216.1V1233.7M1520 1216.0V1233.8M1521 1213.5V1236.2M1522 1213.7V1235.4M1523 1219.3V1232.6M1524 1215.8V1221.2M1524 1223.3V1232.8M1525 1215.1V1216.5M1525 1218.9V1237.7M1526 1214.6V1232.7M1527 1217.1V1236.9M1528 1216.6V1236.0M1529 1215.5V1234.2M1530 1214.9V1217.9M1530 1219.8V1238.4M1531 1214.9V1218.2M1531 1220.6V1236.3M1532 1215.5V1235.5M1533 1215.0V1237.9M1534 1213.6V1234.6M1535 1216.3V1220.4M1535 1222.8V1235.9M1536 1210.1V1234.4M1537 1212.3V1216.4M1537 1218.0V1242.5M1538 1204.4V1237.8M1539 1216.7V1221.2M1539 1223.4V1235.1M1540 1218.4V1221.7M1540 1223.2V1234.4M1541 1214.2V1236.6M1542 1215.9V1220.2M1542 1222.3V1230.8M1543 1215.1V1219.9M1543 1221.3V1231.6M1544 1219.0V1220.8M1544 1223.0V1230.3M1545 1213.1V1213.9M1545 1215.8V1229.4M1546 1205.2V1233.6M1547 1216.5V1234.6M1548 1218.5V1221.1M1548 1222.8V1232.4M1549 1219.5V1224.7M1549 1225.9V1235.9M1550 1213.4V1215.6M1550 1217.1V1236.9M1551 1219.5V1237.4M1552 1214.2V1220.4M1552 1221.6V1233.0M1553 1207.4V1214.8M1553 1217.2V1235.2M1554 1216.4V1220.1M1554 1221.5V1230.2M1555 1209.3V1229.2M1556 1217.0V1219.7M1556 1221.2V1234.3M1557 1211.0V1214.3M1557 1216.1V1232.6M1558 1213.4V1217.6M1558 1218.8V1233.3M1559 1208.7V1214.3M1559 1216.6V1233.3M1560 1213.9V1233.5M1561 1214.8V1218.7M1561 1220.5V1231.8M1562 1215.6V1220.7M1562 1222.3V1236.3M1563 1217.8V1232.2M1564 1208.5V1217.2M1564 1218.7V1234.7M1565 1211.3V1229.0M1566 1215.3V1227.5M1567 1215.9V1234.7M1568 1213.6V1215.7M1568 1218.0V1231.2M1569 1215.3V1216.8M1569 1218.0V1229.5M1570 1215.1V1217.0M1570 1219.4V1234.6M1571 1216.6V1232.3M1572 1216.5V1218.0M1572 1220.0V1230.0M1573 1213.8V1229.9M1574 1214.7V1232.8M1575 1216.5V1236.0M1576 1214.5V1216.6M1576 1218.1V1235.4M1577 1217.3V1219.5M1577 1221.7V1234.1M1578 1212.9V1215.5M1578 1217.7V1231.2M1579 1218.7V1235.6M1580 1212.6V1234.1M1581 1207.6V1211.0M1581 1213.3V1233.5M1582 1218.9V1222.6M1582 1224.3V1233.7M1583 1217.7V1221.5M1583 1222.6V1235.3M1584 1213.1V1214.3M1584 1216.1V1229.1M1585 1216.0V1219.8M1585 1221.7V1230.1M1586 1218.1V1222.1M1586 1223.4V1235.4M1587 1217.5V1228.8M1588 1212.7V1229.9M1589 1211.0V1229.9M1590 1206.0V1231.6M1591 1213.3V1232.1M1592 1217.2V1218.8M1592 1221.2V1231.0M1593 1212.3V1215.9M1593 1217.6V1233.8M1594 1216.8V1217.8M1594 1219.6V1229.3M1595 1213.6V1219.7M1595 1220.9V1232.4M1596 1219.4V1220.2M1596 1222.1V1229.7M1597 1216.0V1234.3M1598 1220.0V1224.4M1598 1225.7V1235.9M1599 1214.6V1219.9M1599 1221.4V1232.5M1600 1213.9V1230.7M1601 1210.7V1232.7M1602 1210.9V1217.9M1602 1219.8V1234.7M1603 1213.8V1216.9M1603 1218.5V1230.7M1604 1212.1V1216.3M1604 1217.7V1230.3M1605 1217.8V1219.8M1605 1222.0V1234.1M1606 1211.4V1212.8M1606 1213.9V1232.1M1607 1212.5V1218.8M1607 1221.2V1230.7M1608 1211.3V1214.2M1608 1216.0V1231.8M1609 1215.6V1237.7M1610 1211.9V1230.4M1611 1214.5V1218.7M1611 1221.0V1229.1M1612 1218.6V1237.1M1613 1212.7V1235.0M1614 1212.9V1235.7M1615 1214.0V1235.5M1616 1213.5V1216.8M1616 1218.0V1232.8M1617 1219.0V1219.8M1617 1221.7V1232.5M1618 1212.9V1230.4M1619 1216.0V1230.8M1620 1214.2V1231.7M1621 1215.7V1219.9M1621 1221.3V1236.4M1622 1215.6V1219.2M1622 1221.0V1229.3M1623 1219.6V1223.9M1623 1225.0V1235.7M1624 1214.0V1216.1M1624 1217.3V1234.6M1625 1213.4V1233.5M1626 1215.0V1236.4M1627 1215.7V1230.5M1628 1213.3V1230.3M1629 1215.9V1231.8M1630 1216.7V1221.5M1630 1223.6V1233.2M1631 1215.8V1235.3M1632 1203.3V1207.2M1632 1208.8V1233.7M1633 1216.6V1234.5M1634 1217.4V1219.5M1634 1221.0V1231.1M1635 1207.3V1234.0M1636 1218.3V1221.3M1636 1222.4V1231.7M1637 1216.4V1231.3M1638 1212.2V1233.5M1639 1217.2V1232.2M1640 1215.3V1232.4M1641 1215.7V1234.2M1642 1215.8V1217.5M1642 1218.7V1233.7M1643 1219.0V1236.2M1644 1219.9V1220.7M1644 1222.3V1232.7M1645 1216.8V1234.7M1646 1212.9V1218.3M1646 1220.5V1235.8M1647 1216.5V1232.6M1648 1215.3V1217.4M1648 1219.6V1232.0M1649 1219.4V1222.5M1649 1224.7V1233.2M1650 1215.7V1218.0M1650 1219.6V1230.6M1651 1213.4V1232.2M1652 1213.8V1233.2M1653 1214.0V1234.2M1654 1214.1V1228.7M1655 1211.8V1227.9M1656 1208.6V1212.0M1656 1213.3V1233.5M1657 1211.3V1217.2M1657 1218.7V1231.2M1658 1214.8V1218.1M1658 1219.1V1231.1M1659 1212.6V1230.2M1660 1212.4V1214.6M1660 1217.0V1230.7M1661 1212.3V1217.0M1661 1218.8V1234.3M1662 1212.5V1213.8M1662 1215.5V1231.2M1663 1213.0V1232.8M1664 1212.5V1218.6M1664 1220.5V1233.8M1665 1216.5V1219.3M1665 1220.7V1232.4M1666 1212.1V1218.9M1666 1221.4V1239.2M1667 1213.9V1231.2M1668 1211.6V1214.8M1668 1215.9V1228.1M1669 1214.9V1217.0M1669 1218.3V1231.7M1670 1213.9V1235.3M1671 1217.4V1222.6M1671 1224.7V1234.0M1672 1218.1V1223.5M1672 1225.3V1240.5M1673 1217.4V1222.8M1673 1224.8V1232.7M1674 1212.5V1217.1M1674 1218.3V1234.4M1675 1213.3V1234.7M1676 1219.1V1223.2M1676 1224.2V1233.2M1677 1212.4V1235.1M1678 1216.9V1218.9M1678 1221.1V1234.3M1679 1213.4V1232.3M1680 1216.5V1234.2M1681 1216.5V1233.0M1682 1215.4V1219.2M1682 1221.5V1235.8M1683 1220.7V1233.0M1684 1215.9V1218.2M1684 1219.9V1237.4M1685 1217.7V1231.5M1686 1216.6V1232.3M1687 1208.1V1236.8M1688 1217.3V1222.4M1688 1224.3V1233.3M1689 1220.9V1239.0M1690 1215.7V1220.1M1690 1221.1V1235.7M1691 1209.3V1217.1M1691 1218.2V1237.2M1692 1219.6V1233.3M1693 1215.7V1220.1M1693 1222.0V1231.5M1694 1220.1V1234.4M1695 1215.3V1232.8M1696 1217.9V1219.8M1696 1222.1V1235.0" stroke="#17becf" stroke-width="1" fill="none" opacity="1"/><path d="M1751 1292.5H2539" stroke="#a0000f" stroke-width="1" fill="none"/><path d="M1751 1195.7V1197.1M1751 1198.7V1204.3M1752 1197.1V1203.6M1753 1196.5V1198.9M1753 1200.4V1203.3M1754 1194.8V1197.4M1754 1198.8V1204.7M1755 1195.5V1203.8M1756 1196.2V1197.7M1756 1199.6V1202.7M1757 1196.3V1198.3M1757 1200.2V1204.0M1758 1195.6V1197.0M1758 1199.3V1204.0M1759 1194.9V1205.4M1760 1195.7V1205.4M1761 1195.2V1196.4M1761 1197.5V1204.6M1762 1196.5V1203.2M1763 1197.5V1198.4M1763 1199.7V1204.1M1764 1196.4V1205.8M1765 1197.8V1203.0M1766 1197.0V1197.9M1766 1199.5V1202.8M1767 1194.9V1195.7M1767 1198.0V1204.3M1768 1195.0V1197.4M1768 1199.8V1204.1M1769 1195.8V1196.7M1769 1198.8V1202.4M1770 1197.3V1204.6M1771 1194.8V1203.8M1772 1197.2V1199.2M1772 1201.0V1203.8M1773 1196.0V1203.4M1774 1194.8V1202.8M1775 1196.4V1204.4M1776 1195.0V1196.0M1776 1197.3V1202.3M1777 1195.1V1204.3M1778 1194.6V1196.1M1778 1198.4V1204.0M1779 1196.5V1198.6M1779 1201.1V1203.7M1780 1194.9V1198.0M1780 1200.4V1203.6M1781 1196.2V1196.8M1781 1198.8V1203.4M1782 1193.5V1194.2M1782 1195.7V1202.6M1783 1195.2V1203.3M1784 1195.4V1203.8M1785 1195.7V1203.0M1786 1194.9V1197.5M1786 1199.2V1203.3M1787 1195.6V1196.6M1787 1198.1V1203.5M1788 1193.2V1195.0M1788 1197.3V1200.8M1789 1192.4V1194.1M1789 1195.9V1203.1M1790 1193.4V1202.6M1791 1192.6V1194.8M1791 1196.2V1202.2M1792 1193.9V1200.1M1793 1191.9V1200.4M1794 1191.9V1195.3M1794 1197.2V1202.3M1795 1193.3V1195.9M1795 1197.6V1202.0M1796 1192.1V1201.4M1797 1193.4V1203.0M1798 1194.4V1195.1M1798 1197.3V1200.7M1799 1192.8V1200.2M1800 1194.2V1194.7M1800 1197.0V1200.7M1801 1194.1V1195.9M1801 1197.6V1199.5M1802 1195.4V1202.0M1803 1193.7V1194.3M1803 1196.1V1202.6M1804 1192.5V1194.1M1804 1196.4V1202.0M1805 1193.9V1195.2M1805 1196.5V1202.3M1806 1191.6V1192.9M1806 1194.6V1199.6M1807 1192.8V1193.9M1807 1194.9V1200.3M1808 1193.9V1196.1M1808 1197.3V1201.9M1809 1194.8V1200.8M1810 1193.9V1195.5M1810 1197.3V1201.6M1811 1194.7V1199.9M1812 1194.8V1198.9M1813 1192.0V1200.5M1814 1193.4V1195.5M1814 1196.8V1200.2M1815 1192.8V1201.1M1816 1191.7V1200.0M1817 1194.1V1194.9M1817 1197.0V1201.8M1818 1192.8V1195.5M1818 1196.7V1201.8M1819 1192.6V1201.8M1820 1193.8V1200.7M1821 1193.4V1198.2M1822 1190.5V1201.1M1823 1189.5V1190.8M1823 1193.0V1198.7M1824 1192.6V1193.7M1824 1195.5V1199.0M1825 1190.8V1192.1M1825 1194.4V1198.6M1826 1192.8V1200.6M1827 1191.8V1199.4M1828 1192.9V1194.9M1828 1196.2V1200.5M1829 1191.3V1199.7M1830 1192.5V1201.3M1831 1191.2V1193.2M1831 1194.3V1200.0M1832 1191.2V1193.4M1832 1195.4V1201.2M1833 1191.2V1200.6M1834 1191.0V1200.8M1835 1191.9V1194.5M1835 1195.9V1200.4M1836 1192.4V1194.1M1836 1196.0V1201.3M1837 1193.4V1194.9M1837 1197.1V1198.2M1838 1191.6V1193.2M1838 1194.3V1200.3M1839 1190.6V1191.7M1839 1193.1V1198.4M1840 1192.9V1194.2M1840 1195.6V1200.7M1841 1190.4V1199.0M1842 1192.8V1199.5M1843 1192.4V1194.3M1843 1195.7V1198.8M1844 1192.9V1193.3M1844 1195.4V1198.3M1845 1191.0V1200.3M1846 1192.6V1200.7M1847 1190.9V1193.0M1847 1195.4V1200.4M1848 1190.5V1191.3M1848 1192.4V1200.0M1849 1191.8V1192.8M1849 1194.8V1199.8M1850 1192.7V1199.9M1851 1193.1V1201.4M1852 1191.3V1192.6M1852 1194.7V1197.9M1853 1190.5V1200.0M1854 1191.1V1200.7M1855 1190.6V1201.4M1856 1191.7V1193.3M1856 1194.7V1198.9M1857 1192.4V1200.3M1858 1191.6V1193.3M1858 1195.2V1200.6M1859 1192.8V1202.1M1860 1191.4V1192.7M1860 1194.8V1201.3M1861 1192.8V1194.7M1861 1196.6V1201.7M1862 1190.7V1200.3M1863 1191.6V1194.3M1863 1196.0V1201.4M1864 1191.7V1200.7M1865 1190.7V1192.7M1865 1193.8V1198.8M1866 1191.7V1192.6M1866 1194.5V1198.2M1867 1193.2V1200.9M1868 1191.9V1192.9M1868 1194.9V1200.9M1869 1192.4V1193.5M1869 1195.8V1199.8M1870 1192.4V1193.3M1870 1194.6V1200.6M1871 1186.5V1187.8M1871 1189.8V1201.2M1872 1191.3V1192.9M1872 1194.3V1199.3M1873 1192.6V1194.8M1873 1197.1V1200.6M1874 1191.2V1201.7M1875 1191.2V1192.4M1875 1194.4V1198.6M1876 1191.3V1192.3M1876 1193.5V1200.3M1877 1191.8V1200.1M1878 1190.7V1198.9M1879 1192.3V1193.0M1879 1194.2V1199.3M1880 1192.0V1194.1M1880 1196.0V1201.4M1881 1192.2V1193.1M1881 1194.9V1199.5M1882 1190.8V1191.5M1882 1193.1V1200.8M1883 1191.4V1200.6M1884 1191.8V1200.9M1885 1193.3V1203.0M1886 1191.6V1200.3M1887 1192.8V1194.0M1887 1196.4V1199.9M1888 1190.5V1199.1M1889 1190.7V1198.9M1890 1189.6V1190.9M1890 1193.3V1200.3M1891 1190.0V1193.2M1891 1195.2V1199.9M1892 1189.9V1197.8M1893 1192.4V1198.4M1894 1189.9V1191.5M1894 1193.0V1198.4M1895 1189.4V1197.2M1896 1189.7V1191.5M1896 1193.8V1198.8M1897 1193.0V1194.3M1897 1196.6V1197.7M1898 1192.3V1199.4M1899 1187.4V1188.1M1899 1189.7V1198.8M1900 1192.5V1200.7M1901 1193.0V1199.8M1902 1191.6V1200.0M1903 1191.0V1199.5M1904 1191.4V1200.6M1905 1192.1V1193.4M1905 1194.5V1200.2M1906 1189.2V1191.9M1906 1194.1V1197.6M1907 1189.8V1200.1M1908 1190.1V1191.4M1908 1192.7V1199.7M1909 1189.8V1192.0M1909 1194.3V1199.4M1910 1189.0V1199.9M1911 1191.8V1197.5M1912 1190.8V1199.3M1913 1190.2V1190.9M1913 1192.9V1197.3M1914 1191.2V1197.8M1915 1189.5V1197.2M1916 1191.0V1200.5M1917 1190.2V1192.8M1917 1193.9V1197.5M1918 1190.1V1192.2M1918 1193.4V1197.7M1919 1189.3V1199.0M1920 1190.8V1197.8M1921 1189.8V1197.5M1922 1189.2V1196.3M1923 1191.0V1191.5M1923 1192.6V1198.6M1924 1188.9V1197.9M1925 1188.8V1198.5M1926 1190.3V1191.3M1926 1193.7V1197.2M1927 1191.7V1193.6M1927 1194.6V1198.6M1928 1190.9V1191.9M1928 1194.4V1199.5M1929 1191.9V1192.3M1929 1193.6V1198.2M1930 1189.1V1197.7M1931 1190.1V1197.9M1932 1189.5V1199.7M1933 1192.2V1193.9M1933 1195.7V1198.6M1934 1190.1V1199.5M1935 1190.6V1200.2M1936 1190.9V1198.9M1937 1190.8V1199.3M1938 1190.9V1191.3M1938 1193.3V1198.8M1939 1189.6V1200.6M1940 1187.8V1198.6M1941 1190.4V1198.6M1942 1192.9V1194.5M1942 1196.8V1199.4M1943 1189.7V1198.8M1944 1192.5V1193.9M1944 1195.0V1199.6M1945 1190.2V1191.6M1945 1192.6V1199.3M1946 1193.0V1193.4M1946 1195.8V1199.9M1947 1190.6V1199.1M1948 1190.8V1191.5M1948 1193.2V1199.5M1949 1188.4V1200.1M1950 1191.2V1193.5M1950 1195.1V1198.7M1951 1189.1V1198.8M1952 1190.0V1199.2M1953 1193.0V1200.7M1954 1193.4V1200.3M1955 1191.3V1197.2M1956 1191.3V1191.9M1956 1193.3V1200.9M1957 1191.2V1191.8M1957 1193.9V1199.3M1958 1189.3V1190.1M1958 1191.9V1199.2M1959 1191.0V1192.3M1959 1193.7V1198.2M1960 1191.2V1192.1M1960 1194.6V1199.9M1961 1191.2V1200.7M1962 1191.1V1199.5M1963 1190.5V1191.3M1963 1192.7V1200.4M1964 1190.6V1197.7M1965 1192.2V1201.3M1966 1192.0V1192.6M1966 1193.9V1199.6M1967 1191.7V1200.5M1968 1190.3V1200.9M1969 1193.0V1197.9M1970 1192.9V1194.6M1970 1196.2V1198.9M1971 1189.4V1189.9M1971 1191.5V1198.8M1972 1190.7V1198.5M1973 1187.2V1193.5M1974 1187.7V1195.4M1975 1185.8V1194.1M1976 1186.9V1194.2M1977 1187.6V1196.4M1978 1186.1V1195.6M1979 1187.1V1187.5M1979 1188.8V1193.5M1980 1186.2V1188.8M1980 1190.1V1195.5M1981 1184.9V1193.7M1982 1184.9V1195.6M1983 1185.7V1186.1M1983 1187.6V1193.8M1984 1185.7V1192.8M1985 1186.4V1195.2M1986 1186.3V1192.5M1987 1186.7V1188.7M1987 1189.7V1192.7M1988 1186.4V1188.7M1988 1190.1V1194.1M1989 1185.2V1195.4M1990 1185.0V1186.3M1990 1187.4V1195.5M1991 1185.6V1187.1M1991 1188.4V1194.7M1992 1185.5V1186.5M1992 1187.7V1195.3M1993 1180.6V1183.3M1993 1184.8V1194.4M1994 1186.2V1193.1M1995 1182.7V1193.1M1996 1185.5V1193.1M1997 1186.1V1186.9M1997 1188.8V1194.1M1998 1184.5V1187.3M1998 1189.8V1194.8M1999 1185.1V1187.1M1999 1189.0V1194.7M2000 1186.6V1187.1M2000 1189.2V1193.6M2001 1184.3V1185.9M2001 1187.0V1194.4M2002 1185.8V1194.1M2003 1186.5V1194.0M2004 1185.8V1195.1M2005 1186.2V1188.4M2005 1190.4V1195.1M2006 1186.9V1188.9M2006 1191.1V1192.9M2007 1184.3V1192.4M2008 1187.0V1188.5M2008 1190.1V1194.2M2009 1184.6V1193.9M2010 1186.0V1186.9M2010 1187.9V1192.7M2011 1185.8V1191.7M2012 1187.1V1194.7M2013 1185.8V1194.1M2014 1184.5V1186.5M2014 1187.5V1193.7M2015 1184.0V1187.7M2015 1189.8V1195.0M2016 1185.2V1192.4M2017 1183.4V1192.8M2018 1186.0V1186.4M2018 1187.6V1192.3M2019 1183.4V1183.9M2019 1185.5V1191.5M2020 1183.9V1186.7M2020 1188.4V1193.0M2021 1186.0V1193.1M2022 1183.7V1194.0M2023 1184.5V1187.3M2023 1188.4V1193.1M2024 1184.1V1184.8M2024 1186.9V1191.6M2025 1185.2V1187.4M2025 1189.7V1194.1M2026 1186.4V1192.1M2027 1183.8V1192.8M2028 1186.6V1192.5M2029 1183.5V1197.1M2030 1185.1V1193.8M2031 1186.3V1194.7M2032 1185.1V1193.6M2033 1183.9V1185.4M2033 1187.2V1194.5M2034 1186.3V1188.3M2034 1189.4V1192.2M2035 1184.4V1186.0M2035 1187.8V1191.2M2036 1183.4V1186.1M2036 1187.3V1193.6M2037 1185.7V1188.2M2037 1189.8V1192.9M2038 1183.5V1184.9M2038 1186.9V1192.1M2039 1187.1V1188.4M2039 1190.3V1194.5M2040 1184.2V1185.2M2040 1186.5V1192.7M2041 1184.9V1185.6M2041 1187.7V1194.9M2042 1187.1V1187.8M2042 1189.0V1195.7M2043 1186.1V1195.3M2044 1186.2V1195.0M2045 1184.3V1187.0M2045 1189.1V1194.4M2046 1185.7V1187.7M2046 1189.2V1197.9M2047 1186.3V1187.6M2047 1189.1V1193.6M2048 1184.8V1187.5M2048 1189.8V1193.5M2049 1185.7V1186.4M2049 1188.1V1193.6M2050 1186.9V1189.0M2050 1190.3V1193.7M2051 1185.1V1188.5M2051 1190.5V1194.9M2052 1184.2V1193.5M2053 1187.5V1194.8M2054 1185.9V1194.4M2055 1185.8V1193.1M2056 1184.5V1185.1M2056 1187.1V1194.4M2057 1186.3V1195.3M2058 1186.9V1195.4M2059 1184.6V1192.2M2060 1187.3V1193.6M2061 1185.1V1186.6M2061 1187.6V1194.5M2062 1187.5V1194.8M2063 1184.6V1194.8M2064 1187.4V1194.3M2065 1185.0V1195.1M2066 1186.3V1195.3M2067 1186.6V1188.2M2067 1189.8V1194.5M2068 1186.6V1189.3M2068 1191.5V1194.9M2069 1186.7V1189.3M2069 1191.5V1194.5M2070 1184.7V1193.1M2071 1186.0V1186.6M2071 1188.3V1193.1M2072 1186.7V1194.1M2073 1184.4V1186.8M2073 1188.9V1193.4M2074 1185.0V1188.0M2074 1189.7V1194.0M2075 1186.9V1195.0M2076 1184.3V1184.8M2076 1186.4V1194.0M2077 1186.0V1186.5M2077 1187.5V1192.3M2078 1186.2V1188.4M2078 1190.4V1194.0M2079 1185.0V1193.8M2080 1184.5V1186.5M2080 1188.5V1193.5M2081 1186.5V1189.1M2081 1191.3V1197.8M2082 1185.3V1186.2M2082 1188.0V1194.2M2083 1185.5V1186.2M2083 1188.5V1195.6M2084 1187.4V1189.0M2084 1190.4V1194.7M2085 1185.7V1193.0M2086 1187.8V1189.5M2086 1191.4V1194.2M2087 1184.4V1194.1M2088 1184.7V1194.6M2089 1185.9V1186.7M2089 1188.2V1193.5M2090 1185.3V1192.6M2091 1185.4V1188.5M2091 1190.8V1194.7M2092 1185.0V1194.5M2093 1186.5V1187.5M2093 1189.2V1194.7M2094 1185.7V1194.3M2095 1183.9V1184.9M2095 1186.2V1193.3M2096 1184.2V1191.6M2097 1185.6V1192.4M2098 1185.2V1192.1M2099 1186.2V1194.4M2100 1182.6V1194.0M2101 1186.5V1187.1M2101 1188.5V1194.7M2102 1186.4V1195.1M2103 1186.7V1192.9M2104 1185.3V1186.6M2104 1188.6V1193.2M2105 1185.8V1192.8M2106 1185.4V1194.0M2107 1186.0V1186.3M2107 1188.4V1193.1M2108 1185.7V1187.2M2108 1188.8V1192.3M2109 1184.5V1192.1M2110 1183.2V1194.3M2111 1185.3V1193.5M2112 1182.9V1184.7M2112 1186.0V1192.4M2113 1183.6V1193.5M2114 1183.2V1193.3M2115 1184.4V1191.4M2116 1186.1V1193.5M2117 1185.4V1194.2M2118 1185.1V1193.8M2119 1184.1V1192.1M2120 1183.3V1184.0M2120 1185.7V1192.9M2121 1184.6V1191.4M2122 1183.1V1186.2M2122 1188.0V1192.1M2123 1183.5V1191.1M2124 1185.6V1192.4M2125 1182.7V1183.4M2125 1185.6V1191.5M2126 1183.1V1193.3M2127 1184.0V1193.3M2128 1183.3V1185.4M2128 1186.8V1190.3M2129 1184.2V1186.1M2129 1187.2V1192.4M2130 1183.4V1193.6M2131 1186.1V1188.5M2131 1190.2V1193.2M2132 1183.5V1193.4M2133 1185.5V1193.8M2134 1185.5V1193.3M2135 1186.4V1187.7M2135 1189.2V1191.3M2136 1185.4V1193.8M2137 1184.5V1186.6M2137 1188.6V1193.8M2138 1184.2V1194.6M2139 1184.7V1185.3M2139 1187.6V1194.4M2140 1186.8V1191.4M2141 1183.5V1193.1M2142 1184.0V1186.2M2142 1188.6V1193.8M2143 1181.0V1184.9M2143 1186.5V1192.6M2144 1182.4V1185.4M2144 1186.5V1192.5M2145 1183.1V1193.9M2146 1184.0V1193.6M2147 1183.1V1194.3M2148 1183.9V1185.1M2148 1187.1V1191.9M2149 1183.3V1185.3M2149 1186.5V1192.9M2150 1183.7V1193.1M2151 1183.8V1193.6M2152 1182.3V1184.0M2152 1185.9V1190.6M2153 1182.6V1190.9M2154 1182.7V1185.1M2154 1186.4V1190.7M2155 1184.6V1191.2M2156 1182.9V1183.7M2156 1185.3V1192.9M2157 1186.4V1188.5M2157 1190.7V1193.2M2158 1185.6V1192.4M2159 1184.2V1187.7M2159 1189.2V1194.4M2160 1184.0V1193.1M2161 1183.4V1192.9M2162 1182.3V1193.4M2163 1186.7V1187.7M2163 1189.6V1191.4M2164 1184.4V1185.3M2164 1187.4V1191.4M2165 1184.0V1185.5M2165 1187.1V1192.5M2166 1186.1V1187.2M2166 1189.7V1191.9M2167 1187.2V1188.1M2167 1189.5V1192.7M2168 1184.4V1185.5M2168 1187.5V1192.7M2169 1185.8V1187.1M2169 1188.6V1195.4M2170 1184.5V1194.1M2171 1184.2V1194.8M2172 1185.0V1194.5M2173 1185.6V1187.3M2173 1188.5V1193.4M2174 1185.8V1186.6M2174 1187.6V1192.9M2175 1186.7V1195.0M2176 1185.2V1193.0M2177 1186.8V1193.9M2178 1179.9V1193.6M2179 1184.2V1194.5M2180 1186.8V1193.1M2181 1185.5V1194.8M2182 1184.8V1185.6M2182 1187.5V1195.6M2183 1183.3V1183.9M2183 1185.3V1195.6M2184 1186.3V1186.9M2184 1188.3V1194.9M2185 1186.1V1187.3M2185 1189.1V1194.4M2186 1184.9V1195.2M2187 1184.6V1194.0M2188 1185.6V1198.0M2189 1187.2V1193.3M2190 1184.7V1185.2M2190 1186.4V1193.1M2191 1188.0V1189.2M2191 1191.1V1193.2M2192 1185.7V1188.2M2192 1189.7V1195.9M2193 1184.5V1187.6M2193 1189.5V1195.4M2194 1186.5V1194.9M2195 1187.2V1188.0M2195 1189.3V1193.2M2196 1186.7V1188.4M2196 1189.8V1194.3M2197 1183.9V1194.8M2198 1187.6V1189.9M2198 1191.2V1194.7M2199 1186.8V1187.6M2199 1189.2V1194.0M2200 1188.0V1195.2M2201 1185.7V1196.6M2202 1187.4V1188.6M2202 1190.3V1195.4M2203 1186.1V1194.9M2204 1184.7V1194.7M2205 1187.0V1188.7M2205 1190.7V1194.5M2206 1186.5V1187.2M2206 1189.5V1193.9M2207 1187.4V1193.1M2208 1185.7V1194.5M2209 1186.7V1195.5M2210 1187.4V1189.6M2210 1191.3V1194.3M2211 1186.3V1193.1M2212 1186.7V1188.4M2212 1189.9V1192.9M2213 1187.4V1188.3M2213 1189.3V1195.3M2214 1186.2V1196.4M2215 1187.6V1189.6M2215 1192.0V1195.2M2216 1185.7V1189.4M2216 1191.5V1196.5M2217 1187.1V1189.1M2217 1190.1V1196.2M2218 1185.3V1193.4M2219 1186.8V1195.4M2220 1186.5V1195.8M2221 1185.8V1188.1M2221 1190.3V1194.1M2222 1185.0V1186.9M2222 1188.7V1196.4M2223 1185.1V1185.7M2223 1187.9V1195.0M2224 1186.4V1195.5M2225 1185.2V1186.0M2225 1188.1V1195.4M2226 1185.0V1196.1M2227 1186.7V1194.2M2228 1185.9V1194.7M2229 1187.3V1188.1M2229 1190.3V1194.7M2230 1184.7V1196.2M2231 1186.4V1188.0M2231 1189.9V1195.1M2232 1185.7V1195.6M2233 1185.7V1187.9M2233 1189.7V1194.7M2234 1185.5V1186.3M2234 1187.4V1194.5M2235 1187.2V1189.4M2235 1191.6V1194.2M2236 1181.6V1193.6M2237 1181.0V1183.4M2237 1185.0V1194.8M2238 1185.0V1193.7M2239 1186.0V1186.8M2239 1188.7V1194.0M2240 1187.5V1188.1M2240 1189.2V1192.7M2241 1188.1V1189.3M2241 1190.7V1194.7M2242 1185.0V1194.5M2243 1188.0V1190.3M2243 1191.5V1195.8M2244 1187.0V1189.0M2244 1190.2V1196.1M2245 1186.7V1187.9M2245 1189.1V1195.6M2246 1185.0V1187.6M2246 1188.9V1195.7M2247 1187.5V1194.1M2248 1188.5V1190.1M2248 1191.2V1195.4M2249 1187.0V1188.4M2249 1190.8V1196.3M2250 1186.6V1187.8M2250 1189.6V1193.9M2251 1184.8V1185.5M2251 1186.8V1195.8M2252 1186.9V1189.9M2252 1192.1V1195.8M2253 1185.5V1195.9M2254 1187.5V1189.0M2254 1190.4V1195.7M2255 1188.4V1196.7M2256 1185.7V1187.9M2256 1189.4V1196.0M2257 1187.0V1187.6M2257 1189.3V1195.3M2258 1186.3V1188.2M2258 1190.1V1194.3M2259 1185.2V1186.2M2259 1187.5V1196.0M2260 1186.5V1194.4M2261 1185.7V1186.7M2261 1188.1V1197.1M2262 1186.8V1188.8M2262 1191.2V1194.7M2263 1188.0V1193.6M2264 1185.4V1195.2M2265 1186.3V1188.5M2265 1189.9V1196.5M2266 1186.3V1194.5M2267 1187.8V1189.5M2267 1191.8V1196.5M2268 1185.6V1194.7M2269 1185.3V1188.4M2269 1190.1V1194.9M2270 1185.8V1186.3M2270 1188.0V1195.5M2271 1184.7V1186.6M2271 1188.0V1195.9M2272 1186.4V1188.2M2272 1190.3V1192.5M2273 1186.5V1196.5M2274 1187.9V1189.2M2274 1191.2V1194.6M2275 1185.4V1186.4M2275 1188.2V1193.6M2276 1186.7V1196.6M2277 1188.6V1196.0M2278 1186.3V1195.7M2279 1185.7V1186.7M2279 1188.2V1197.1M2280 1187.6V1194.9M2281 1186.1V1188.0M2281 1189.0V1196.1M2282 1188.0V1195.4M2283 1180.9V1196.2M2284 1185.3V1196.3M2285 1186.6V1187.6M2285 1189.3V1196.0M2286 1186.6V1187.4M2286 1188.4V1192.5M2287 1187.2V1194.2M2288 1184.5V1194.4M2289 1184.2V1186.2M2289 1187.7V1193.2M2290 1183.8V1186.8M2290 1188.6V1193.0M2291 1182.2V1184.4M2291 1186.6V1194.6M2292 1183.7V1186.9M2292 1188.3V1192.8M2293 1185.8V1193.3M2294 1184.0V1186.4M2294 1188.4V1196.9M2295 1183.8V1186.5M2295 1187.5V1195.0M2296 1179.9V1195.4M2297 1184.4V1196.0M2298 1185.8V1193.9M2299 1187.4V1189.5M2299 1191.7V1195.3M2300 1184.8V1193.2M2301 1184.6V1192.5M2302 1185.1V1186.2M2302 1187.7V1193.9M2303 1186.7V1192.5M2304 1187.7V1190.1M2304 1191.2V1195.9M2305 1184.2V1187.3M2305 1189.6V1193.4M2306 1184.9V1187.2M2306 1188.9V1193.9M2307 1186.8V1195.1M2308 1185.5V1195.9M2309 1186.2V1193.9M2310 1184.8V1194.9M2311 1183.7V1193.1M2312 1184.4V1193.0M2313 1184.9V1193.6M2314 1178.6V1194.0M2315 1180.0V1193.9M2316 1184.1V1185.2M2316 1186.9V1190.6M2317 1183.7V1186.4M2317 1188.4V1194.4M2318 1183.0V1184.8M2318 1187.1V1192.2M2319 1178.5V1181.8M2319 1183.6V1193.2M2320 1184.2V1191.8M2321 1186.2V1186.7M2321 1188.4V1191.7M2322 1186.5V1194.1M2323 1184.2V1192.2M2324 1186.1V1188.4M2324 1190.0V1194.3M2325 1183.5V1186.4M2325 1188.5V1191.9M2326 1183.6V1186.0M2326 1187.7V1193.9M2327 1184.0V1185.1M2327 1186.2V1191.8M2328 1186.6V1191.1M2329 1183.1V1191.2M2330 1185.4V1188.1M2330 1189.4V1194.8M2331 1185.8V1192.5M2332 1186.2V1193.2M2333 1183.6V1195.1M2334 1182.9V1193.1M2335 1184.7V1193.9M2336 1184.7V1193.3M2337 1183.2V1191.9M2338 1180.7V1183.6M2338 1184.9V1191.3M2339 1183.6V1193.1M2340 1182.6V1194.0M2341 1183.2V1185.9M2341 1187.3V1191.9M2342 1182.6V1183.8M2342 1186.3V1192.2M2343 1183.3V1192.5M2344 1182.7V1192.9M2345 1184.1V1192.7M2346 1183.5V1191.9M2347 1183.5V1186.6M2347 1188.8V1193.5M2348 1183.6V1191.2M2349 1182.8V1190.9M2350 1182.5V1183.7M2350 1184.8V1189.6M2351 1184.0V1191.4M2352 1183.6V1185.4M2352 1187.1V1192.4M2353 1175.4V1192.2M2354 1182.4V1185.4M2354 1186.5V1191.4M2355 1183.0V1190.4M2356 1183.5V1184.5M2356 1185.6V1192.3M2357 1182.8V1191.7M2358 1180.9V1191.9M2359 1181.3V1183.8M2359 1185.4V1190.9M2360 1182.0V1191.4M2361 1182.6V1185.0M2361 1186.9V1190.3M2362 1180.1V1191.1M2363 1181.0V1182.8M2363 1184.9V1188.5M2364 1180.7V1189.6M2365 1181.3V1190.0M2366 1180.6V1181.2M2366 1182.3V1189.7M2367 1180.7V1192.0M2368 1182.0V1184.5M2368 1186.1V1191.1M2369 1176.2V1190.9M2370 1181.5V1191.2M2371 1180.7V1183.0M2371 1185.1V1188.9M2372 1179.0V1193.3M2373 1181.1V1183.4M2373 1185.8V1189.8M2374 1180.5V1188.2M2375 1182.2V1189.9M2376 1179.6V1181.4M2376 1183.2V1188.4M2377 1182.8V1188.6M2378 1180.1V1181.2M2378 1182.9V1191.4M2379 1182.2V1183.5M2379 1185.9V1191.4M2380 1180.3V1193.7M2381 1181.1V1183.7M2381 1185.1V1189.7M2382 1178.9V1188.2M2383 1179.5V1188.2M2384 1181.6V1182.0M2384 1184.3V1188.3M2385 1181.8V1184.3M2385 1186.2V1191.4M2386 1180.5V1189.1M2387 1179.5V1182.1M2387 1183.6V1189.0M2388 1182.6V1190.3M2389 1178.6V1181.9M2389 1183.4V1190.7M2390 1178.5V1181.5M2390 1182.9V1190.4M2391 1180.9V1184.1M2391 1185.9V1191.2M2392 1179.1V1189.9M2393 1179.8V1188.9M2394 1178.5V1189.1M2395 1179.6V1187.6M2396 1179.9V1182.3M2396 1183.6V1191.2M2397 1181.0V1191.3M2398 1177.9V1181.9M2398 1183.5V1189.7M2399 1178.8V1189.2" stroke="#e8267e" stroke-width="1" fill="none" opacity="1"/><path d="M2400 1177.2V1179.5M2400 1180.7V1188.3M2401 1176.9V1179.8M2401 1182.0V1190.9M2402 1175.4V1187.5M2403 1176.6V1188.1M2404 1178.2V1189.4M2405 1175.6V1179.9M2405 1182.4V1189.0M2406 1177.5V1190.2M2407 1178.0V1188.2M2408 1176.5V1186.3M2409 1174.2V1179.2M2409 1181.7V1188.6M2410 1175.5V1179.9M2410 1182.2V1188.7M2411 1177.9V1180.8M2411 1181.8V1187.6M2412 1170.5V1174.0M2412 1175.5V1185.7M2413 1178.7V1180.7M2413 1183.1V1188.8M2414 1174.0V1186.5M2415 1174.7V1177.2M2415 1178.2V1187.2M2416 1177.8V1179.6M2416 1182.1V1184.9M2417 1175.0V1186.5M2418 1173.1V1187.3M2419 1171.8V1173.6M2419 1175.6V1187.1M2420 1174.9V1178.5M2420 1179.7V1187.7M2421 1174.2V1185.7M2422 1175.5V1184.2M2423 1172.7V1183.8M2424 1172.8V1175.4M2424 1177.2V1184.9M2425 1172.1V1174.0M2425 1175.5V1185.0M2426 1176.1V1177.2M2426 1178.3V1187.7M2427 1175.3V1178.0M2427 1180.1V1188.0M2428 1175.9V1179.3M2428 1181.7V1188.1M2429 1168.9V1183.8M2430 1170.3V1184.3M2431 1173.4V1175.3M2431 1177.7V1186.4M2432 1173.9V1175.1M2432 1177.3V1183.2M2433 1170.1V1174.7M2433 1176.6V1184.7M2434 1169.4V1172.0M2434 1173.8V1184.6M2435 1168.8V1183.5M2436 1171.1V1174.3M2436 1176.6V1182.6M2437 1170.7V1173.0M2437 1174.9V1180.4M2438 1169.0V1180.4M2439 1168.5V1170.8M2439 1172.9V1183.9M2440 1165.7V1171.9M2440 1173.2V1184.4M2441 1167.5V1184.2M2442 1167.1V1169.4M2442 1171.0V1185.0M2443 1169.0V1171.8M2443 1174.1V1183.3M2444 1169.3V1185.6M2445 1168.6V1169.5M2445 1171.5V1179.2M2446 1168.6V1182.3M2447 1167.5V1170.4M2447 1172.2V1181.5M2448 1171.0V1174.3M2448 1176.7V1180.9M2449 1169.9V1183.9M2450 1164.9V1171.8M2450 1172.8V1185.2M2451 1169.4V1181.1M2452 1168.0V1178.5M2453 1167.4V1168.2M2453 1170.6V1183.3M2454 1164.0V1178.9M2455 1163.7V1168.8M2455 1170.1V1180.2M2456 1167.4V1168.8M2456 1170.8V1178.8M2457 1163.8V1165.9M2457 1168.1V1184.4M2458 1164.5V1181.3M2459 1167.5V1180.3M2460 1169.3V1174.1M2460 1175.5V1183.7M2461 1166.8V1184.3M2462 1168.3V1173.2M2462 1174.8V1182.2M2463 1164.7V1170.1M2463 1171.2V1182.3M2464 1167.7V1182.9M2465 1168.6V1187.7M2466 1165.0V1181.0M2467 1160.3V1182.7M2468 1166.7V1171.3M2468 1173.4V1182.5M2469 1165.7V1167.4M2469 1169.4V1180.5M2470 1169.8V1173.3M2470 1174.8V1180.1M2471 1167.7V1179.7M2472 1165.7V1170.1M2472 1171.5V1181.2M2473 1165.3V1184.3M2474 1168.0V1182.1M2475 1168.7V1179.6M2476 1162.2V1183.4M2477 1170.1V1171.7M2477 1173.0V1183.4M2478 1169.9V1183.1M2479 1166.7V1172.0M2479 1173.3V1183.6M2480 1168.6V1182.5M2481 1168.8V1170.0M2481 1171.8V1184.1M2482 1161.6V1165.6M2482 1168.0V1185.2M2483 1169.5V1184.3M2484 1170.8V1172.5M2484 1174.4V1183.5M2485 1171.8V1185.9M2486 1168.3V1169.6M2486 1170.6V1184.7M2487 1170.8V1172.2M2487 1173.7V1185.3M2488 1168.5V1169.8M2488 1172.1V1183.6M2489 1169.0V1173.5M2489 1175.0V1182.3M2490 1170.0V1183.4M2491 1169.0V1184.0M2492 1168.6V1169.8M2492 1172.1V1181.9M2493 1169.4V1182.9M2494 1173.2V1183.7M2495 1171.0V1173.6M2495 1175.5V1185.7M2496 1171.1V1183.2M2497 1169.8V1171.9M2497 1173.3V1186.0M2498 1170.4V1181.7M2499 1171.3V1173.2M2499 1174.5V1181.2M2500 1168.1V1182.6M2501 1171.1V1171.9M2501 1173.3V1181.7M2502 1158.3V1184.4M2503 1172.0V1174.1M2503 1176.0V1180.2M2504 1167.2V1182.8M2505 1168.8V1185.5M2506 1169.0V1173.8M2506 1176.0V1186.7M2507 1166.9V1171.4M2507 1173.8V1182.4M2508 1167.5V1170.8M2508 1172.5V1183.2M2509 1166.8V1171.3M2509 1173.7V1184.4M2510 1167.7V1171.5M2510 1173.5V1181.8M2511 1167.8V1187.4M2512 1170.6V1184.9M2513 1170.3V1183.7M2514 1170.4V1185.1M2515 1165.9V1183.8M2516 1169.1V1174.0M2516 1176.4V1183.5M2517 1165.9V1179.2M2518 1166.4V1181.8M2519 1165.5V1182.2M2520 1166.3V1183.3M2521 1166.1V1178.4M2522 1165.5V1180.6M2523 1167.6V1178.6M2524 1165.4V1182.0M2525 1169.8V1182.0M2526 1164.2V1170.0M2526 1172.2V1182.3M2527 1166.3V1167.9M2527 1170.1V1182.5M2528 1164.2V1179.2M2529 1166.5V1167.8M2529 1170.3V1176.7M2530 1167.3V1171.0M2530 1173.2V1179.1M2531 1163.8V1168.8M2531 1170.6V1180.6M2532 1166.4V1167.7M2532 1170.0V1178.9M2533 1163.1V1168.2M2533 1170.7V1179.7M2534 1163.1V1176.4M2535 1161.1V1174.5M2536 1162.4V1176.7M2537 1163.9V1165.7M2537 1168.1V1179.0M2538 1164.6V1165.8M2538 1166.9V1175.0" stroke="#e8267e" stroke-width="1" fill="none" opacity="1"/><path d="M66.5 75V675.5H856" stroke="#9c9c9c" stroke-width="1" fill="none"/><rect x="76.5" y="85.5" width="341" height="62" fill="rgb(80,80,80)" fill-opacity="0.18" stroke="#474747" stroke-width="1"/><rect x="85" y="94" width="19" height="19" fill="#1f77b4"/><rect x="85" y="119" width="19" height="19" fill="#ff7f0e"/><rect x="57" y="75" width="1" height="5" fill="#eeeeee"/><path d="M908.5 75V675.5H1698" stroke="#9c9c9c" stroke-width="1" fill="none"/><rect x="918.5" y="85.5" width="341" height="62" fill="rgb(80,80,80)" fill-opacity="0.18" stroke="#474747" stroke-width="1"/><rect x="927" y="94" width="19" height="19" fill="#2ca02c"/><rect x="927" y="119" width="19" height="19" fill="#d62728"/><rect x="899" y="75" width="1" height="5" fill="#eeeeee"/><path d="M1750.5 75V675.5H2540" stroke="#9c9c9c" stroke-width="1" fill="none"/><rect x="1760.5" y="85.5" width="341" height="62" fill="rgb(80,80,80)" fill-opacity="0.18" stroke="#474747" stroke-width="1"/><rect x="1769" y="94" width="19" height="19" fill="#9467bd"/><rect x="1769" y="119" width="19" height="19" fill="#8c564b"/><rect x="1741" y="75" width="1" height="5" fill="#eeeeee"/><path d="M66.5 703V1304.5H856" stroke="#9c9c9c" stroke-width="1" fill="none"/><rect x="76.5" y="713.5" width="341" height="62" fill="rgb(80,80,80)" fill-opacity="0.18" stroke="#474747" stroke-width="1"/><rect x="85" y="722" width="19" height="19" fill="#e377c2"/><rect x="85" y="747" width="19" height="19" fill="#7f7f7f"/><rect x="57" y="703" width="1" height="5" fill="#eeeeee"/><path d="M908.5 703V1304.5H1698" stroke="#9c9c9c" stroke-width="1" fill="none"/><rect x="918.5" y="713.5" width="341" height="62" fill="rgb(80,80,80)" fill-opacity="0.18" stroke="#474747" stroke-width="1"/><rect x="927" y="722" width="19" height="19" fill="#bcbd22"/><rect x="927" y="747" width="19" height="19" fill="#17becf"/><rect x="899" y="703" width="1" height="5" fill="#eeeeee"/><path d="M1750.5 703V1304.5H2540" stroke="#9c9c9c" stroke-width="1" fill="none"/><rect x="1760.5" y="713.5" width="341" height="62" fill="rgb(80,80,80)" fill-opacity="0.18" stroke="#474747" stroke-width="1"/><rect x="1769" y="722" width="19" height="19" fill="#e8267e"/><rect x="1769" y="747" width="19" height="19" fill="#a0000f"/><rect x="1741" y="703" width="1" height="5" fill="#eeeeee"/></svg><div class="t lg pl" style="left:109.1px;top:98.5px">H0:VAC-MR_FAN1_170_1_ACC_INCHSEC [m-trend]</div><div class="t lg pl" style="left:109.1px;top:123.5px">H0:VAC-MR_FAN1_170_2_ACC_INCHSEC [m-trend]</div><div class="t yl pl" style="right:2497px;top:657.3px">0</div><div class="t yl pl" style="right:2497px;top:539.7px">0.2</div><div class="t yl pl" style="right:2497px;top:422.1px">0.4</div><div class="t yl pl" style="right:2497px;top:304.5px">0.6</div><div class="t yl pl" style="right:2497px;top:186.9px">0.8</div><div class="t xl pl" style="left:142.8px;width:60px;top:680.0px">-6d</div><div class="t xl pl" style="left:256.8px;width:60px;top:680.0px">-5d</div><div class="t xl pl" style="left:369.8px;width:60px;top:680.0px">-4d</div><div class="t xl pl" style="left:483.8px;width:60px;top:680.0px">-3d</div><div class="t xl pl" style="left:596.8px;width:60px;top:680.0px">-2d</div><div class="t xl pl" style="left:710.8px;width:60px;top:680.0px">-1d</div><div class="t xl pl" style="left:851.5px;width:4px;overflow:hidden;top:680.0px;text-align:left">0</div><div class="t cnt pl" style="left:9.5px;top:369.0px;width:40px;text-align:center">counts</div><div class="t lg pl" style="left:951.1px;top:98.5px">H0:VAC-MR_FAN2_170_1_ACC_INCHSEC [m-trend]</div><div class="t lg pl" style="left:951.1px;top:123.5px">H0:VAC-MR_FAN2_170_2_ACC_INCHSEC [m-trend]</div><div class="t yl pl" style="right:1655px;top:657.3px">0</div><div class="t yl pl" style="right:1655px;top:539.7px">0.2</div><div class="t yl pl" style="right:1655px;top:422.1px">0.4</div><div class="t yl pl" style="right:1655px;top:304.5px">0.6</div><div class="t yl pl" style="right:1655px;top:186.9px">0.8</div><div class="t xl pl" style="left:984.8px;width:60px;top:680.0px">-6d</div><div class="t xl pl" style="left:1098.8px;width:60px;top:680.0px">-5d</div><div class="t xl pl" style="left:1211.8px;width:60px;top:680.0px">-4d</div><div class="t xl pl" style="left:1325.8px;width:60px;top:680.0px">-3d</div><div class="t xl pl" style="left:1438.8px;width:60px;top:680.0px">-2d</div><div class="t xl pl" style="left:1552.8px;width:60px;top:680.0px">-1d</div><div class="t xl pl" style="left:1693.5px;width:4px;overflow:hidden;top:680.0px;text-align:left">0</div><div class="t cnt pl" style="left:851.5px;top:369.0px;width:40px;text-align:center">counts</div><div class="t lg pl" style="left:1793.1px;top:98.5px">H0:VAC-MR_FAN3_170_1_ACC_INCHSEC [m-trend]</div><div class="t lg pl" style="left:1793.1px;top:123.5px">H0:VAC-MR_FAN3_170_2_ACC_INCHSEC [m-trend]</div><div class="t yl pl" style="right:813px;top:657.3px">0</div><div class="t yl pl" style="right:813px;top:539.7px">0.2</div><div class="t yl pl" style="right:813px;top:422.1px">0.4</div><div class="t yl pl" style="right:813px;top:304.5px">0.6</div><div class="t yl pl" style="right:813px;top:186.9px">0.8</div><div class="t xl pl" style="left:1826.8px;width:60px;top:680.0px">-6d</div><div class="t xl pl" style="left:1940.8px;width:60px;top:680.0px">-5d</div><div class="t xl pl" style="left:2053.8px;width:60px;top:680.0px">-4d</div><div class="t xl pl" style="left:2167.8px;width:60px;top:680.0px">-3d</div><div class="t xl pl" style="left:2280.8px;width:60px;top:680.0px">-2d</div><div class="t xl pl" style="left:2394.8px;width:60px;top:680.0px">-1d</div><div class="t xl pl" style="left:2535.5px;width:4px;overflow:hidden;top:680.0px;text-align:left">0</div><div class="t cnt pl" style="left:1693.5px;top:369.0px;width:40px;text-align:center">counts</div><div class="t lg pl" style="left:109.1px;top:726.5px">H0:VAC-MR_FAN4_170_1_ACC_INCHSEC [m-trend]</div><div class="t lg pl" style="left:109.1px;top:751.5px">H0:VAC-MR_FAN4_170_2_ACC_INCHSEC [m-trend]</div><div class="t yl pl" style="right:2497px;top:1286.0px">0</div><div class="t yl pl" style="right:2497px;top:1168.3px">0.2</div><div class="t yl pl" style="right:2497px;top:1050.6px">0.4</div><div class="t yl pl" style="right:2497px;top:932.8px">0.6</div><div class="t yl pl" style="right:2497px;top:815.1px">0.8</div><div class="t xl pl" style="left:142.8px;width:60px;top:1308.9px">-6d</div><div class="t xl pl" style="left:256.8px;width:60px;top:1308.9px">-5d</div><div class="t xl pl" style="left:369.8px;width:60px;top:1308.9px">-4d</div><div class="t xl pl" style="left:483.8px;width:60px;top:1308.9px">-3d</div><div class="t xl pl" style="left:596.8px;width:60px;top:1308.9px">-2d</div><div class="t xl pl" style="left:710.8px;width:60px;top:1308.9px">-1d</div><div class="t xl pl" style="left:851.5px;width:4px;overflow:hidden;top:1308.9px;text-align:left">0</div><div class="t cnt pl" style="left:9.5px;top:997.5px;width:40px;text-align:center">counts</div><div class="t lg pl" style="left:951.1px;top:726.5px">H0:VAC-MR_FAN5_170_1_ACC_INCHSEC [m-trend]</div><div class="t lg pl" style="left:951.1px;top:751.5px">H0:VAC-MR_FAN5_170_2_ACC_INCHSEC [m-trend]</div><div class="t yl pl" style="right:1655px;top:1286.0px">0</div><div class="t yl pl" style="right:1655px;top:1168.3px">0.2</div><div class="t yl pl" style="right:1655px;top:1050.6px">0.4</div><div class="t yl pl" style="right:1655px;top:932.8px">0.6</div><div class="t yl pl" style="right:1655px;top:815.1px">0.8</div><div class="t xl pl" style="left:984.8px;width:60px;top:1308.9px">-6d</div><div class="t xl pl" style="left:1098.8px;width:60px;top:1308.9px">-5d</div><div class="t xl pl" style="left:1211.8px;width:60px;top:1308.9px">-4d</div><div class="t xl pl" style="left:1325.8px;width:60px;top:1308.9px">-3d</div><div class="t xl pl" style="left:1438.8px;width:60px;top:1308.9px">-2d</div><div class="t xl pl" style="left:1552.8px;width:60px;top:1308.9px">-1d</div><div class="t xl pl" style="left:1693.5px;width:4px;overflow:hidden;top:1308.9px;text-align:left">0</div><div class="t cnt pl" style="left:851.5px;top:997.5px;width:40px;text-align:center">counts</div><div class="t lg pl" style="left:1793.1px;top:726.5px">H0:VAC-MR_FAN6_170_1_ACC_INCHSEC [m-trend]</div><div class="t lg pl" style="left:1793.1px;top:751.5px">H0:VAC-MR_FAN6_170_2_ACC_INCHSEC [m-trend]</div><div class="t yl pl" style="right:813px;top:1286.0px">0</div><div class="t yl pl" style="right:813px;top:1168.3px">0.2</div><div class="t yl pl" style="right:813px;top:1050.6px">0.4</div><div class="t yl pl" style="right:813px;top:932.8px">0.6</div><div class="t yl pl" style="right:813px;top:815.1px">0.8</div><div class="t xl pl" style="left:1826.8px;width:60px;top:1308.9px">-6d</div><div class="t xl pl" style="left:1940.8px;width:60px;top:1308.9px">-5d</div><div class="t xl pl" style="left:2053.8px;width:60px;top:1308.9px">-4d</div><div class="t xl pl" style="left:2167.8px;width:60px;top:1308.9px">-3d</div><div class="t xl pl" style="left:2280.8px;width:60px;top:1308.9px">-2d</div><div class="t xl pl" style="left:2394.8px;width:60px;top:1308.9px">-1d</div><div class="t xl pl" style="left:2535.5px;width:4px;overflow:hidden;top:1308.9px;text-align:left">0</div><div class="t cnt pl" style="left:1693.5px;top:997.5px;width:40px;text-align:center">counts</div><div class="t pl" style="left:1078px;top:1347px;font-size:16.15px;color:#eeeeee">t0 = Tue Nov 18 2025 16:45:36 UTC [1447519554.7082]</div><div class="a" style="left:0;top:56px;width:2px;height:1324px;background:#efefef"></div><div class="a" style="left:0;top:1380px;width:2557px;height:1px;background:#fbfbfb"></div><div class="a btn" style="left:2px;width:100px"></div><div class="t bt" style="left:27.4px;color:#1e1e1e;font-size:13.2px">start online</div><div class="a btn" style="left:104px;width:100px"></div><div class="t bt" style="left:130.5px;color:#b8b8b8;font-size:13.0px">stop online</div><div class="a btn" style="left:206px;width:100px"></div><div class="t bt" style="left:206px;width:100px;text-align:center;color:#1e1e1e;font-size:12.9px">reset</div><div class="a btn" style="left:308px;width:100px"></div><div class="t bt" style="left:308px;width:100px;text-align:center;color:#1e1e1e;font-size:12.7px">add channels</div><div class="a btn" style="left:2448px;width:80px"></div><div class="t bt" style="left:2448px;width:80px;text-align:center;color:#1e1e1e;font-size:12.9px">snapshot</div><svg class="a" style="left:12px;top:1390px" width="10" height="10" viewBox="0 0 10 10"><path d="M0.8 0.8L9 5 0.8 9.2z" fill="#e6e6e6" stroke="#8c8c8c" stroke-width="1"/></svg><div class="a" style="left:116px;top:1390px;width:8px;height:8px;border:1px solid #c4c4c4;background:linear-gradient(#fff,#ddd)"></div><svg class="a" style="left:2538px;top:1391px" width="12" height="8" viewBox="0 0 12 8"><path d="M0 8L6 0 12 8z" fill="#333"/></svg><div class="t" style="left:15px;top:1419px;font-size:12.55px;color:#1e1e1e">h1daqnds1:8088  [429233 channels]</div><div class="t lnk" style="left:2403px">ndscope</div><div class="t lnk" style="left:2453px">0.19.3</div><div class="t" style="left:2489px;top:1419px;font-size:12.5px;color:#1e1e1e">(</div><div class="t lnk" style="left:2494px">report bug</div><div class="t" style="left:2554px;top:1419px;font-size:12.5px;color:#1e1e1e">)</div><div class="a" style="left:1971px;top:47px;width:572px;height:75px;opacity:0.9"><div class="a" style="left:0;top:0;width:572px;height:75px;border-radius:6px;background:#fefefe"></div><svg class="a" style="left:14px;top:13px" width="48" height="48" viewBox="0 0 48 48"><circle cx="24" cy="24" r="24" fill="#7d00a0"/><path d="M14.2 38.5C11 34 8.5 29 9.5 25.5C11 21.5 15 17 15.4 10.1C18 13 20 17 19.8 21C19.5 26 16 32 14.2 38.5Z" fill="#e6b800"/><path d="M14.2 38.5C15.5 31 19.5 25 20 19.5C24 16 27.5 12 28.4 7.4C30 12 30.5 17 29.8 21.5C27 27 20 31 14.2 38.5Z" fill="#e85d00"/><path d="M14.2 38.5C17 32 23 24 30 19.5C34 18 38 16.5 39.7 13.6C40 20 37 27.5 32 30.4C26 33 19 33 14.2 38.5Z" fill="#e8005a"/></svg><div class="t" style="left:76px;top:18.5px;font-size:13.98px;font-weight:bold;color:#333">Flameshot Info</div><div class="t" style="left:76px;top:41.5px;font-size:13.87px;color:#333">Capture saved as /ligo/home/anthony.sanchez/Pictures/2025-11-18_08-52.png</div></div>
</body></html>
